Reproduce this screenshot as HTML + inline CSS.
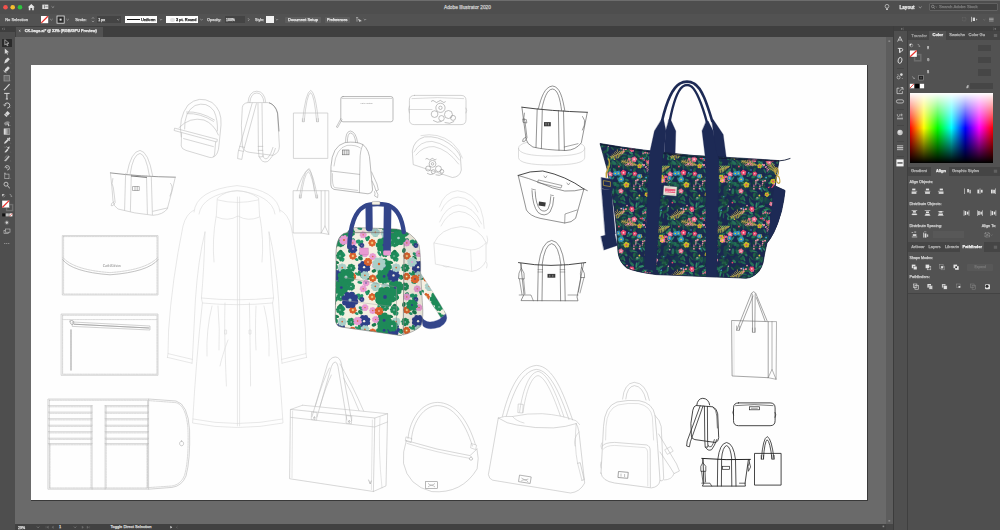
<!DOCTYPE html>
<html lang="en"><head><meta charset="utf-8"><title>Adobe Illustrator 2020 - CK-bags.ai</title>
<style>
html,body{margin:0;padding:0;background:#535353;}
body{width:1000px;height:530px;position:relative;overflow:hidden;font-family:"Liberation Sans",sans-serif;}
#app div,#app .t{position:absolute;box-sizing:border-box;}
#app{opacity:0.999;}
#app .t{white-space:nowrap;display:block;margin:0;padding:0;-webkit-text-stroke:0.25px currentColor;}
svg{position:absolute;left:0;top:0;}
</style></head><body>
<div id="app">
<div style="left:0px;top:0px;width:1000px;height:13.5px;background:#4f4f4f;"></div>
<div style="left:0px;top:0px;width:1000px;height:1px;background:#6e6e6e;"></div>
<div style="left:0px;top:13.5px;width:1000px;height:12.5px;background:#535353;"></div>
<div style="left:0px;top:26px;width:1000px;height:11px;background:#404040;"></div>
<div style="left:15px;top:37px;width:871px;height:487px;background:#6b6b6b;"></div>
<div style="left:0px;top:27px;width:15px;height:503px;background:#4f4f4f;"></div>
<div style="left:0px;top:26px;width:15px;height:5.5px;background:#3f3f3f;"></div>
<div style="left:16px;top:27px;width:87px;height:10px;background:#535353;"></div>
<div style="left:886px;top:37px;width:6.5px;height:487px;background:#5e5e5e;"></div>
<div style="left:892.5px;top:26px;width:1.5px;height:504px;background:#3d3d3d;"></div>
<div style="left:894px;top:31px;width:12.5px;height:499px;background:#505050;"></div>
<div style="left:906.5px;top:26px;width:1.5px;height:504px;background:#404040;"></div>
<div style="left:908px;top:31px;width:92px;height:499px;background:#535353;"></div>
<div style="left:15px;top:523.6px;width:871px;height:6.4px;background:#424242;"></div>
<div style="left:886px;top:523.6px;width:7px;height:6.4px;background:#474747;"></div>
<div style="left:31px;top:65px;width:836.5px;height:436px;background:#ffffff;border-right:1px solid #3a3a3a;border-bottom:1px solid #3a3a3a;"></div>
<span class="t" style="left:444px;top:4.94px;font-size:4.8px;line-height:5.57px;color:#cfcfcf;">Adobe Illustrator 2020</span>
<span class="t" style="left:899.5px;top:5.05px;font-size:4.58px;line-height:5.31px;color:#ececec;font-weight:bold;">Layout</span>
<div style="left:929px;top:2.5px;width:69px;height:8.5px;background:#434343;border:0.5px solid #626262;border-radius:1px;"></div>
<span class="t" style="left:939px;top:4.90px;font-size:4.25px;line-height:4.93px;color:#7c7c7c;">Search Adobe Stock</span>
<span class="t" style="left:5.2px;top:17.71px;font-size:4.02px;line-height:4.66px;color:#d6d6d6;">No Selection</span>
<span class="t" style="left:75.2px;top:17.92px;font-size:3.57px;line-height:4.14px;color:#d6d6d6;">Stroke:</span>
<div style="left:96.5px;top:16px;width:24px;height:7.2px;background:#454545;"></div>
<span class="t" style="left:98.2px;top:17.91px;font-size:3.6px;line-height:4.18px;color:#e0e0e0;">1 px</span>
<div style="left:124.5px;top:16px;width:32.5px;height:7.2px;background:#ffffff;"></div>
<div style="left:126.5px;top:19px;width:13px;height:1.3px;background:#111111;"></div>
<span class="t" style="left:141px;top:17.75px;font-size:4.14px;line-height:4.80px;color:#222222;">Uniform</span>
<div style="left:166px;top:16px;width:32px;height:7.2px;background:#ffffff;"></div>
<div style="left:169.5px;top:17.6px;width:5.5px;height:4px;background:#e2e2e2;border-radius:2px;"></div>
<span class="t" style="left:176px;top:17.83px;font-size:3.97px;line-height:4.61px;color:#222222;">3 pt. Round</span>
<span class="t" style="left:207px;top:17.75px;font-size:3.93px;line-height:4.56px;color:#d6d6d6;">Opacity:</span>
<div style="left:224.5px;top:16px;width:20px;height:7.2px;background:#454545;"></div>
<span class="t" style="left:226px;top:17.95px;font-size:3.52px;line-height:4.08px;color:#e0e0e0;">100%</span>
<span class="t" style="left:255px;top:17.91px;font-size:3.6px;line-height:4.18px;color:#d6d6d6;">Style:</span>
<div style="left:266px;top:16px;width:8px;height:7.2px;background:#f4f4f4;"></div>
<div style="left:285px;top:16.5px;width:35.5px;height:6.4px;background:#5f5f5f;border-radius:1px;"></div>
<span class="t" style="left:288px;top:17.81px;font-size:4.03px;line-height:4.67px;color:#e8e8e8;">Document Setup</span>
<div style="left:324.5px;top:16.5px;width:25px;height:6.4px;background:#5f5f5f;border-radius:1px;"></div>
<span class="t" style="left:327px;top:17.91px;font-size:3.8px;line-height:4.41px;color:#e8e8e8;">Preferences</span>
<span class="t" style="left:24.7px;top:29.10px;font-size:3.84px;line-height:4.45px;color:#ececec;font-weight:bold;">CK-bags.ai* @ 33% (RGB/GPU Preview)</span>
<span class="t" style="left:18px;top:525.56px;font-size:3.5px;line-height:4.06px;color:#e0e0e0;">29%</span>
<span class="t" style="left:59.3px;top:525.76px;font-size:3.06px;line-height:3.55px;color:#e0e0e0;">1</span>
<span class="t" style="left:110.6px;top:525.32px;font-size:3.99px;line-height:4.63px;color:#dcdcdc;">Toggle Direct Selection</span>
<div style="left:908px;top:31px;width:92px;height:9px;background:#464646;"></div>
<div style="left:929px;top:31px;width:17px;height:9px;background:#535353;"></div>
<span class="t" style="left:911.2px;top:33.28px;font-size:4.29px;line-height:4.98px;color:#9e9e9e;">Transfer</span>
<span class="t" style="left:932.5px;top:33.41px;font-size:4.02px;line-height:4.66px;color:#f2f2f2;font-weight:bold;">Color</span>
<span class="t" style="left:949.2px;top:33.36px;font-size:4.12px;line-height:4.78px;color:#b4b4b4;">Swatche</span>
<span class="t" style="left:968.6px;top:33.37px;font-size:4.1px;line-height:4.76px;color:#b4b4b4;">Color Gu</span>
<span class="t" style="left:927.3px;top:46.56px;font-size:2.63px;line-height:3.05px;color:#c6c6c6;">R</span>
<span class="t" style="left:927.3px;top:58.83px;font-size:2.7px;line-height:3.13px;color:#c6c6c6;">G</span>
<span class="t" style="left:927.3px;top:71.26px;font-size:2.85px;line-height:3.31px;color:#c6c6c6;">B</span>
<div style="left:977.8px;top:44.8px;width:13px;height:6.3px;background:#474747;"></div>
<div style="left:977.8px;top:56.9px;width:13px;height:6.3px;background:#474747;"></div>
<div style="left:977.8px;top:69.3px;width:13px;height:6.3px;background:#474747;"></div>
<span class="t" style="left:966.4px;top:84.51px;font-size:3.6px;line-height:4.18px;color:#c6c6c6;">#</span>
<div style="left:969.6px;top:83.4px;width:23.2px;height:5.4px;background:#474747;"></div>
<div style="left:910.3px;top:93px;width:82.7px;height:69.7px;background:linear-gradient(to bottom,#fff 0%,rgba(255,255,255,0) 50%,rgba(0,0,0,0) 50%,#000 100%),linear-gradient(to right,#f00 0%,#ff0 16.67%,#0f0 33.33%,#0ff 50%,#00f 66.67%,#f0f 83.33%,#f00 100%);"></div>
<div style="left:908px;top:167px;width:92px;height:8.5px;background:#464646;"></div>
<div style="left:931px;top:167px;width:18px;height:8.5px;background:#535353;"></div>
<span class="t" style="left:911px;top:169.14px;font-size:4.17px;line-height:4.84px;color:#b4b4b4;">Gradient</span>
<span class="t" style="left:936px;top:169.22px;font-size:4.0px;line-height:4.64px;color:#f2f2f2;font-weight:bold;">Align</span>
<span class="t" style="left:952px;top:169.14px;font-size:4.18px;line-height:4.85px;color:#b4b4b4;">Graphic Styles</span>
<span class="t" style="left:909.5px;top:180.20px;font-size:3.84px;line-height:4.45px;color:#cfcfcf;">Align Objects:</span>
<span class="t" style="left:909.5px;top:202.05px;font-size:3.94px;line-height:4.57px;color:#cfcfcf;">Distribute Objects:</span>
<span class="t" style="left:909.5px;top:223.58px;font-size:3.87px;line-height:4.49px;color:#cfcfcf;">Distribute Spacing:</span>
<span class="t" style="left:981.8px;top:223.63px;font-size:3.77px;line-height:4.37px;color:#cfcfcf;">Align To:</span>
<div style="left:933.2px;top:231.4px;width:30.4px;height:7.1px;background:#595959;"></div>
<div style="left:908px;top:242px;width:92px;height:10px;background:#464646;"></div>
<div style="left:960px;top:242px;width:24.2px;height:10px;background:#535353;"></div>
<span class="t" style="left:911.2px;top:245.26px;font-size:4.12px;line-height:4.78px;color:#b4b4b4;">Artboar</span>
<span class="t" style="left:928.5px;top:245.29px;font-size:4.06px;line-height:4.71px;color:#b4b4b4;">Layers</span>
<span class="t" style="left:945px;top:245.21px;font-size:4.23px;line-height:4.91px;color:#b4b4b4;">Librarie</span>
<span class="t" style="left:962.5px;top:245.35px;font-size:3.94px;line-height:4.57px;color:#f2f2f2;font-weight:bold;">Pathfinder</span>
<span class="t" style="left:909.5px;top:256.29px;font-size:3.63px;line-height:4.21px;color:#cfcfcf;">Shape Modes:</span>
<span class="t" style="left:909.5px;top:275.32px;font-size:3.79px;line-height:4.40px;color:#cfcfcf;">Pathfinders:</span>
<div style="left:967.2px;top:264px;width:25.5px;height:6.6px;background:#595959;border-radius:1px;"></div>
<span class="t" style="left:974.5px;top:265.81px;font-size:3.39px;line-height:3.93px;color:#767676;">Expand</span>
<div style="left:908px;top:293px;width:92px;height:0.8px;background:#444444;"></div>
<div style="left:908px;top:293.8px;width:92px;height:236.2px;background:#505050;"></div>
<div style="left:896.5px;top:67.5px;width:7.5px;height:0.6px;background:#474747;"></div>
<div style="left:896.5px;top:108.6px;width:7.5px;height:0.6px;background:#474747;"></div>
<div style="left:896.5px;top:124.6px;width:7.5px;height:0.6px;background:#474747;"></div>
<div style="left:896.5px;top:140.6px;width:7.5px;height:0.6px;background:#474747;"></div>
<div style="left:896.5px;top:155.6px;width:7.5px;height:0.6px;background:#474747;"></div>
<div style="left:2.2px;top:38.6px;width:9.4px;height:8px;background:#2b2b2b;border-radius:0.5px;"></div>
</div>
<svg id="artwork" width="1000" height="530" viewBox="0 0 1000 530">
<defs><clipPath id="toteclip"><path d="M600 143.5 Q640 150.5 694 155.5 Q750 158.5 779 160.6 Q776.6 174 775.4 186 L785 190.5 Q784 200 781.5 211 Q778 224 774 232 Q770 240 767 243 Q764.6 253 763 263 Q760 273 752.5 276.4 Q750 278 746 278.2 L656 274.6 Q636 272 626.8 268 Q619 262 618 252 Q616 215 612 195 Q608 168 600 143.5 Z"/></clipPath></defs>
<path d="M669.7 121 C672.6 106 677 91 682.6 86.6 C685.6 84.4 688.6 84.4 691.6 86.6 C698 92 703 108 707 122.5" stroke="#1d2a55" stroke-width="2.4" fill="none" stroke-linejoin="round" stroke-linecap="round" />
<path d="M669 119.5 L670.6 119.5 L675.8 131 L675 158 L664 157 L665.6 131 Z" stroke="#1d2a55" stroke-width="0.3" fill="#1d2a55" stroke-linejoin="round" stroke-linecap="round" />
<path d="M711.6 119.5 L713.2 119.5 L723.2 134.4 L726.6 160 L715 160 L713.2 131 Z" stroke="#1d2a55" stroke-width="0.3" fill="#1d2a55" stroke-linejoin="round" stroke-linecap="round" />
<path d="M600 143.5 Q640 150.5 694 155.5 Q750 158.5 779 160.6 Q776.6 174 775.4 186 L785 190.5 Q784 200 781.5 211 Q778 224 774 232 Q770 240 767 243 Q764.6 253 763 263 Q760 273 752.5 276.4 Q750 278 746 278.2 L656 274.6 Q636 272 626.8 268 Q619 262 618 252 Q616 215 612 195 Q608 168 600 143.5 Z" fill="#1d2a55"/>
<defs><pattern id="totepat" width="60" height="60" patternUnits="userSpaceOnUse" patternTransform="translate(600 140)"><rect width="60" height="60" fill="#1b2850"/><ellipse cx="-4.5" cy="-3.1" rx="3.0" ry="2.2" fill="#183f4c" transform="rotate(68 -4.5 -3.1)"/><ellipse cx="-4.5" cy="56.9" rx="3.0" ry="2.2" fill="#183f4c" transform="rotate(68 -4.5 56.9)"/><ellipse cx="55.5" cy="-3.1" rx="3.0" ry="2.2" fill="#183f4c" transform="rotate(68 55.5 -3.1)"/><ellipse cx="55.5" cy="56.9" rx="3.0" ry="2.2" fill="#183f4c" transform="rotate(68 55.5 56.9)"/><ellipse cx="21.5" cy="43.6" rx="4.1" ry="2.1" fill="#1a4447" transform="rotate(82 21.5 43.6)"/><ellipse cx="1.5" cy="5.1" rx="4.2" ry="1.8" fill="#17394c" transform="rotate(113 1.5 5.1)"/><ellipse cx="1.5" cy="65.1" rx="4.2" ry="1.8" fill="#17394c" transform="rotate(113 1.5 65.1)"/><ellipse cx="61.5" cy="5.1" rx="4.2" ry="1.8" fill="#17394c" transform="rotate(113 61.5 5.1)"/><ellipse cx="61.5" cy="65.1" rx="4.2" ry="1.8" fill="#17394c" transform="rotate(113 61.5 65.1)"/><ellipse cx="25.9" cy="46.2" rx="5.0" ry="2.5" fill="#183f4c" transform="rotate(118 25.9 46.2)"/><ellipse cx="37.3" cy="-1.8" rx="4.4" ry="2.8" fill="#1a4447" transform="rotate(174 37.3 -1.8)"/><ellipse cx="37.3" cy="58.2" rx="4.4" ry="2.8" fill="#1a4447" transform="rotate(174 37.3 58.2)"/><ellipse cx="16.9" cy="-1.5" rx="3.2" ry="2.4" fill="#17394c" transform="rotate(129 16.9 -1.5)"/><ellipse cx="16.9" cy="58.5" rx="3.2" ry="2.4" fill="#17394c" transform="rotate(129 16.9 58.5)"/><ellipse cx="35.4" cy="26.8" rx="3.4" ry="2.8" fill="#17394c" transform="rotate(96 35.4 26.8)"/><ellipse cx="40.4" cy="31.2" rx="3.3" ry="1.9" fill="#17394c" transform="rotate(7 40.4 31.2)"/><ellipse cx="16.5" cy="34.4" rx="3.8" ry="2.2" fill="#17394c" transform="rotate(52 16.5 34.4)"/><ellipse cx="18.3" cy="46.7" rx="3.5" ry="2.0" fill="#17394c" transform="rotate(112 18.3 46.7)"/><ellipse cx="7.2" cy="47.7" rx="3.6" ry="2.5" fill="#1a4447" transform="rotate(165 7.2 47.7)"/><ellipse cx="35.6" cy="-3.3" rx="4.1" ry="1.8" fill="#183f4c" transform="rotate(114 35.6 -3.3)"/><ellipse cx="35.6" cy="56.7" rx="4.1" ry="1.8" fill="#183f4c" transform="rotate(114 35.6 56.7)"/><ellipse cx="23.6" cy="9.8" rx="4.7" ry="3.0" fill="#183f4c" transform="rotate(145 23.6 9.8)"/><ellipse cx="-3.1" cy="32.3" rx="4.9" ry="2.2" fill="#1a4447" transform="rotate(175 -3.1 32.3)"/><ellipse cx="56.9" cy="32.3" rx="4.9" ry="2.2" fill="#1a4447" transform="rotate(175 56.9 32.3)"/><ellipse cx="22.6" cy="11.6" rx="3.7" ry="2.5" fill="#183f4c" transform="rotate(136 22.6 11.6)"/><ellipse cx="27.5" cy="17.7" rx="3.3" ry="2.4" fill="#183f4c" transform="rotate(31 27.5 17.7)"/><ellipse cx="32.6" cy="48.8" rx="3.3" ry="2.0" fill="#1a4447" transform="rotate(2 32.6 48.8)"/><ellipse cx="45.7" cy="39.4" rx="5.0" ry="2.9" fill="#1a4447" transform="rotate(124 45.7 39.4)"/><ellipse cx="24.8" cy="41.6" rx="4.9" ry="2.5" fill="#17394c" transform="rotate(77 24.8 41.6)"/><ellipse cx="17.9" cy="51.6" rx="4.4" ry="2.8" fill="#17394c" transform="rotate(20 17.9 51.6)"/><ellipse cx="37.9" cy="20.0" rx="4.8" ry="2.3" fill="#17394c" transform="rotate(30 37.9 20.0)"/><ellipse cx="39.6" cy="20.3" rx="4.4" ry="2.1" fill="#17394c" transform="rotate(101 39.6 20.3)"/><ellipse cx="28.2" cy="27.0" rx="3.7" ry="2.2" fill="#17394c" transform="rotate(4 28.2 27.0)"/><ellipse cx="-2.6" cy="45.0" rx="3.5" ry="2.6" fill="#1a4447" transform="rotate(31 -2.6 45.0)"/><ellipse cx="57.4" cy="45.0" rx="3.5" ry="2.6" fill="#1a4447" transform="rotate(31 57.4 45.0)"/><ellipse cx="27.0" cy="25.4" rx="4.0" ry="2.1" fill="#183f4c" transform="rotate(108 27.0 25.4)"/><ellipse cx="-0.5" cy="43.2" rx="4.3" ry="2.2" fill="#183f4c" transform="rotate(162 -0.5 43.2)"/><ellipse cx="59.5" cy="43.2" rx="4.3" ry="2.2" fill="#183f4c" transform="rotate(162 59.5 43.2)"/><ellipse cx="5.2" cy="52.6" rx="3.9" ry="1.8" fill="#1a4447" transform="rotate(82 5.2 52.6)"/><ellipse cx="65.2" cy="52.6" rx="3.9" ry="1.8" fill="#1a4447" transform="rotate(82 65.2 52.6)"/><ellipse cx="24.7" cy="40.9" rx="3.9" ry="2.2" fill="#1a4447" transform="rotate(173 24.7 40.9)"/><ellipse cx="20.5" cy="23.3" rx="5.2" ry="2.6" fill="#1a4447" transform="rotate(136 20.5 23.3)"/><ellipse cx="-7.0" cy="32.3" rx="3.2" ry="2.1" fill="#17394c" transform="rotate(47 -7.0 32.3)"/><ellipse cx="53.0" cy="32.3" rx="3.2" ry="2.1" fill="#17394c" transform="rotate(47 53.0 32.3)"/><ellipse cx="51.1" cy="30.1" rx="4.6" ry="3.0" fill="#183f4c" transform="rotate(50 51.1 30.1)"/><ellipse cx="46.2" cy="0.5" rx="3.6" ry="2.8" fill="#183f4c" transform="rotate(45 46.2 0.5)"/><ellipse cx="46.2" cy="60.5" rx="3.6" ry="2.8" fill="#183f4c" transform="rotate(45 46.2 60.5)"/><ellipse cx="-1.0" cy="38.1" rx="4.0" ry="1.9" fill="#183f4c" transform="rotate(36 -1.0 38.1)"/><ellipse cx="59.0" cy="38.1" rx="4.0" ry="1.9" fill="#183f4c" transform="rotate(36 59.0 38.1)"/><ellipse cx="33.9" cy="37.3" rx="3.5" ry="2.4" fill="#183f4c" transform="rotate(110 33.9 37.3)"/><ellipse cx="21.7" cy="-0.8" rx="1.6" ry="0.7" fill="#216044" transform="rotate(134 21.7 -0.8)"/><ellipse cx="21.7" cy="59.2" rx="1.6" ry="0.7" fill="#216044" transform="rotate(134 21.7 59.2)"/><ellipse cx="-0.9" cy="8.2" rx="3.2" ry="0.8" fill="#216044" transform="rotate(161 -0.9 8.2)"/><ellipse cx="59.1" cy="8.2" rx="3.2" ry="0.8" fill="#216044" transform="rotate(161 59.1 8.2)"/><ellipse cx="17.7" cy="47.7" rx="3.0" ry="1.1" fill="#18493c" transform="rotate(106 17.7 47.7)"/><ellipse cx="19.6" cy="8.0" rx="1.8" ry="0.8" fill="#1c5140" transform="rotate(174 19.6 8.0)"/><ellipse cx="-0.5" cy="45.5" rx="2.5" ry="1.3" fill="#143f3c" transform="rotate(78 -0.5 45.5)"/><ellipse cx="59.5" cy="45.5" rx="2.5" ry="1.3" fill="#143f3c" transform="rotate(78 59.5 45.5)"/><ellipse cx="21.7" cy="39.1" rx="2.3" ry="1.1" fill="#2a7a58" transform="rotate(172 21.7 39.1)"/><ellipse cx="38.3" cy="21.4" rx="3.0" ry="0.6" fill="#2a7a58" transform="rotate(71 38.3 21.4)"/><ellipse cx="43.4" cy="45.5" rx="1.9" ry="0.9" fill="#216044" transform="rotate(11 43.4 45.5)"/><ellipse cx="18.9" cy="25.6" rx="2.6" ry="0.9" fill="#216044" transform="rotate(44 18.9 25.6)"/><ellipse cx="18.9" cy="40.2" rx="3.0" ry="0.9" fill="#257058" transform="rotate(66 18.9 40.2)"/><ellipse cx="29.9" cy="1.0" rx="3.0" ry="0.7" fill="#1e6350" transform="rotate(79 29.9 1.0)"/><ellipse cx="29.9" cy="61.0" rx="3.0" ry="0.7" fill="#1e6350" transform="rotate(79 29.9 61.0)"/><ellipse cx="11.4" cy="46.4" rx="2.3" ry="0.6" fill="#1c5140" transform="rotate(115 11.4 46.4)"/><ellipse cx="15.3" cy="44.2" rx="2.2" ry="1.4" fill="#1e6350" transform="rotate(133 15.3 44.2)"/><ellipse cx="42.5" cy="40.1" rx="2.8" ry="0.7" fill="#2a7a58" transform="rotate(177 42.5 40.1)"/><ellipse cx="45.1" cy="48.7" rx="2.5" ry="0.7" fill="#257058" transform="rotate(12 45.1 48.7)"/><ellipse cx="28.4" cy="8.7" rx="1.7" ry="0.6" fill="#2a7a58" transform="rotate(94 28.4 8.7)"/><ellipse cx="12.5" cy="38.7" rx="2.9" ry="0.8" fill="#2f8a66" transform="rotate(127 12.5 38.7)"/><ellipse cx="25.8" cy="54.7" rx="2.1" ry="1.2" fill="#2a7a58" transform="rotate(40 25.8 54.7)"/><ellipse cx="40.1" cy="47.3" rx="1.6" ry="1.2" fill="#216044" transform="rotate(25 40.1 47.3)"/><ellipse cx="55.6" cy="41.8" rx="3.2" ry="0.7" fill="#2a7a58" transform="rotate(149 55.6 41.8)"/><ellipse cx="4.8" cy="4.9" rx="2.8" ry="1.4" fill="#18493c" transform="rotate(114 4.8 4.9)"/><ellipse cx="30.7" cy="16.3" rx="3.3" ry="1.1" fill="#1e6350" transform="rotate(158 30.7 16.3)"/><ellipse cx="11.8" cy="44.1" rx="2.7" ry="0.7" fill="#1c5140" transform="rotate(150 11.8 44.1)"/><ellipse cx="29.3" cy="44.2" rx="2.0" ry="1.3" fill="#216044" transform="rotate(108 29.3 44.2)"/><ellipse cx="23.2" cy="2.7" rx="2.9" ry="1.1" fill="#1e6350" transform="rotate(25 23.2 2.7)"/><ellipse cx="23.2" cy="62.7" rx="2.9" ry="1.1" fill="#1e6350" transform="rotate(25 23.2 62.7)"/><ellipse cx="47.8" cy="21.2" rx="1.5" ry="1.0" fill="#1e6350" transform="rotate(82 47.8 21.2)"/><ellipse cx="17.2" cy="43.1" rx="3.0" ry="0.8" fill="#18493c" transform="rotate(145 17.2 43.1)"/><ellipse cx="47.7" cy="8.6" rx="3.0" ry="1.1" fill="#216044" transform="rotate(20 47.7 8.6)"/><ellipse cx="50.3" cy="45.1" rx="3.0" ry="1.0" fill="#143f3c" transform="rotate(97 50.3 45.1)"/><ellipse cx="35.6" cy="55.9" rx="3.0" ry="0.8" fill="#143f3c" transform="rotate(108 35.6 55.9)"/><ellipse cx="49.4" cy="43.1" rx="1.7" ry="0.9" fill="#216044" transform="rotate(12 49.4 43.1)"/><ellipse cx="40.7" cy="22.7" rx="2.9" ry="0.7" fill="#2f8a66" transform="rotate(45 40.7 22.7)"/><ellipse cx="22.2" cy="53.1" rx="1.9" ry="1.0" fill="#257058" transform="rotate(143 22.2 53.1)"/><ellipse cx="20.1" cy="33.8" rx="2.9" ry="1.2" fill="#1c5140" transform="rotate(27 20.1 33.8)"/><ellipse cx="33.7" cy="38.2" rx="2.3" ry="0.6" fill="#18493c" transform="rotate(167 33.7 38.2)"/><ellipse cx="15.9" cy="44.3" rx="2.8" ry="1.1" fill="#257058" transform="rotate(54 15.9 44.3)"/><ellipse cx="48.1" cy="54.6" rx="2.2" ry="1.1" fill="#1c5140" transform="rotate(68 48.1 54.6)"/><ellipse cx="44.0" cy="10.5" rx="1.5" ry="1.3" fill="#1c5140" transform="rotate(140 44.0 10.5)"/><ellipse cx="41.6" cy="6.4" rx="3.2" ry="1.1" fill="#2f8a66" transform="rotate(167 41.6 6.4)"/><ellipse cx="8.6" cy="17.9" rx="2.4" ry="1.4" fill="#2a7a58" transform="rotate(114 8.6 17.9)"/><ellipse cx="37.3" cy="37.3" rx="2.7" ry="0.7" fill="#1e6350" transform="rotate(48 37.3 37.3)"/><ellipse cx="43.5" cy="43.6" rx="3.1" ry="1.2" fill="#18493c" transform="rotate(99 43.5 43.6)"/><ellipse cx="52.8" cy="28.8" rx="2.9" ry="1.1" fill="#18493c" transform="rotate(152 52.8 28.8)"/><ellipse cx="16.5" cy="7.0" rx="3.1" ry="0.9" fill="#143f3c" transform="rotate(161 16.5 7.0)"/><ellipse cx="49.9" cy="36.1" rx="2.0" ry="1.3" fill="#2a7a58" transform="rotate(175 49.9 36.1)"/><ellipse cx="41.2" cy="-1.1" rx="2.4" ry="0.9" fill="#216044" transform="rotate(139 41.2 -1.1)"/><ellipse cx="41.2" cy="58.9" rx="2.4" ry="0.9" fill="#216044" transform="rotate(139 41.2 58.9)"/><ellipse cx="24.5" cy="22.2" rx="2.6" ry="1.3" fill="#143f3c" transform="rotate(9 24.5 22.2)"/><ellipse cx="22.5" cy="18.9" rx="1.6" ry="0.7" fill="#1c5140" transform="rotate(33 22.5 18.9)"/><ellipse cx="52.1" cy="17.0" rx="2.1" ry="0.7" fill="#216044" transform="rotate(121 52.1 17.0)"/><ellipse cx="20.0" cy="34.3" rx="3.2" ry="1.4" fill="#257058" transform="rotate(37 20.0 34.3)"/><ellipse cx="33.9" cy="23.8" rx="3.3" ry="0.6" fill="#2a7a58" transform="rotate(118 33.9 23.8)"/><ellipse cx="9.8" cy="38.4" rx="3.0" ry="1.0" fill="#18493c" transform="rotate(115 9.8 38.4)"/><ellipse cx="2.6" cy="28.6" rx="3.1" ry="1.3" fill="#2f8a66" transform="rotate(79 2.6 28.6)"/><ellipse cx="62.6" cy="28.6" rx="3.1" ry="1.3" fill="#2f8a66" transform="rotate(79 62.6 28.6)"/><ellipse cx="13.8" cy="53.1" rx="2.8" ry="0.8" fill="#143f3c" transform="rotate(144 13.8 53.1)"/><ellipse cx="11.6" cy="18.5" rx="2.6" ry="1.2" fill="#257058" transform="rotate(145 11.6 18.5)"/><ellipse cx="15.4" cy="31.3" rx="3.0" ry="1.4" fill="#216044" transform="rotate(76 15.4 31.3)"/><ellipse cx="12.0" cy="42.6" rx="3.3" ry="1.3" fill="#1e6350" transform="rotate(22 12.0 42.6)"/><ellipse cx="44.2" cy="16.3" rx="3.0" ry="0.8" fill="#2a7a58" transform="rotate(43 44.2 16.3)"/><ellipse cx="38.3" cy="17.6" rx="2.2" ry="1.4" fill="#143f3c" transform="rotate(74 38.3 17.6)"/><ellipse cx="11.9" cy="-1.9" rx="1.6" ry="0.6" fill="#143f3c" transform="rotate(33 11.9 -1.9)"/><ellipse cx="11.9" cy="58.1" rx="1.6" ry="0.6" fill="#143f3c" transform="rotate(33 11.9 58.1)"/><ellipse cx="2.3" cy="34.4" rx="2.8" ry="1.1" fill="#1e6350" transform="rotate(158 2.3 34.4)"/><ellipse cx="62.3" cy="34.4" rx="2.8" ry="1.1" fill="#1e6350" transform="rotate(158 62.3 34.4)"/><ellipse cx="45.9" cy="53.2" rx="2.0" ry="1.2" fill="#143f3c" transform="rotate(24 45.9 53.2)"/><ellipse cx="5.6" cy="11.6" rx="3.3" ry="1.4" fill="#1c5140" transform="rotate(153 5.6 11.6)"/><ellipse cx="41.7" cy="26.4" rx="2.4" ry="1.0" fill="#2a7a58" transform="rotate(146 41.7 26.4)"/><ellipse cx="2.8" cy="2.7" rx="1.5" ry="1.0" fill="#216044" transform="rotate(112 2.8 2.7)"/><ellipse cx="2.8" cy="62.7" rx="1.5" ry="1.0" fill="#216044" transform="rotate(112 2.8 62.7)"/><ellipse cx="62.8" cy="2.7" rx="1.5" ry="1.0" fill="#216044" transform="rotate(112 62.8 2.7)"/><ellipse cx="62.8" cy="62.7" rx="1.5" ry="1.0" fill="#216044" transform="rotate(112 62.8 62.7)"/><ellipse cx="51.0" cy="0.0" rx="1.9" ry="1.1" fill="#1e6350" transform="rotate(119 51.0 0.0)"/><ellipse cx="51.0" cy="60.0" rx="1.9" ry="1.1" fill="#1e6350" transform="rotate(119 51.0 60.0)"/><ellipse cx="19.9" cy="55.8" rx="2.4" ry="0.7" fill="#216044" transform="rotate(143 19.9 55.8)"/><ellipse cx="50.6" cy="42.1" rx="2.6" ry="1.1" fill="#2f8a66" transform="rotate(135 50.6 42.1)"/><ellipse cx="17.6" cy="45.3" rx="1.9" ry="1.3" fill="#1e6350" transform="rotate(10 17.6 45.3)"/><ellipse cx="52.2" cy="23.8" rx="2.7" ry="1.3" fill="#1e6350" transform="rotate(40 52.2 23.8)"/><ellipse cx="5.6" cy="30.7" rx="1.9" ry="1.2" fill="#143f3c" transform="rotate(98 5.6 30.7)"/><ellipse cx="26.9" cy="39.9" rx="2.0" ry="0.9" fill="#257058" transform="rotate(17 26.9 39.9)"/><ellipse cx="48.3" cy="54.1" rx="2.1" ry="1.4" fill="#18493c" transform="rotate(96 48.3 54.1)"/><ellipse cx="23.0" cy="42.4" rx="3.2" ry="0.8" fill="#2a7a58" transform="rotate(28 23.0 42.4)"/><ellipse cx="8.4" cy="32.5" rx="2.8" ry="1.4" fill="#2f8a66" transform="rotate(175 8.4 32.5)"/><ellipse cx="9.5" cy="43.7" rx="1.6" ry="1.3" fill="#18493c" transform="rotate(77 9.5 43.7)"/><ellipse cx="34.2" cy="54.7" rx="2.3" ry="1.3" fill="#216044" transform="rotate(105 34.2 54.7)"/><ellipse cx="33.4" cy="43.2" rx="1.9" ry="1.3" fill="#143f3c" transform="rotate(98 33.4 43.2)"/><ellipse cx="55.6" cy="45.8" rx="1.6" ry="1.0" fill="#257058" transform="rotate(116 55.6 45.8)"/><ellipse cx="-3.0" cy="53.8" rx="1.7" ry="0.8" fill="#2f8a66" transform="rotate(58 -3.0 53.8)"/><ellipse cx="57.0" cy="53.8" rx="1.7" ry="0.8" fill="#2f8a66" transform="rotate(58 57.0 53.8)"/><ellipse cx="9.6" cy="17.9" rx="1.5" ry="1.1" fill="#143f3c" transform="rotate(82 9.6 17.9)"/><ellipse cx="53.0" cy="37.3" rx="1.7" ry="1.1" fill="#143f3c" transform="rotate(173 53.0 37.3)"/><ellipse cx="3.0" cy="-2.2" rx="1.9" ry="1.0" fill="#1c5140" transform="rotate(35 3.0 -2.2)"/><ellipse cx="3.0" cy="57.8" rx="1.9" ry="1.0" fill="#1c5140" transform="rotate(35 3.0 57.8)"/><ellipse cx="63.0" cy="-2.2" rx="1.9" ry="1.0" fill="#1c5140" transform="rotate(35 63.0 -2.2)"/><ellipse cx="63.0" cy="57.8" rx="1.9" ry="1.0" fill="#1c5140" transform="rotate(35 63.0 57.8)"/><ellipse cx="31.6" cy="20.6" rx="2.6" ry="0.7" fill="#2f8a66" transform="rotate(66 31.6 20.6)"/><ellipse cx="7.7" cy="14.8" rx="1.8" ry="0.8" fill="#257058" transform="rotate(49 7.7 14.8)"/><ellipse cx="18.9" cy="29.3" rx="1.8" ry="1.2" fill="#143f3c" transform="rotate(78 18.9 29.3)"/><ellipse cx="34.3" cy="30.2" rx="2.7" ry="1.2" fill="#216044" transform="rotate(112 34.3 30.2)"/><ellipse cx="23.7" cy="45.0" rx="3.3" ry="0.7" fill="#2a7a58" transform="rotate(2 23.7 45.0)"/><ellipse cx="7.4" cy="41.4" rx="2.6" ry="1.2" fill="#1c5140" transform="rotate(0 7.4 41.4)"/><ellipse cx="51.6" cy="11.0" rx="1.7" ry="1.0" fill="#1e6350" transform="rotate(62 51.6 11.0)"/><ellipse cx="18.7" cy="40.1" rx="2.9" ry="0.8" fill="#2f8a66" transform="rotate(63 18.7 40.1)"/><ellipse cx="12.6" cy="23.6" rx="3.2" ry="0.9" fill="#1e6350" transform="rotate(24 12.6 23.6)"/><ellipse cx="42.3" cy="24.6" rx="3.2" ry="0.9" fill="#2f8a66" transform="rotate(74 42.3 24.6)"/><ellipse cx="31.1" cy="-2.1" rx="2.8" ry="0.6" fill="#216044" transform="rotate(49 31.1 -2.1)"/><ellipse cx="31.1" cy="57.9" rx="2.8" ry="0.6" fill="#216044" transform="rotate(49 31.1 57.9)"/><ellipse cx="14.2" cy="1.3" rx="2.2" ry="1.2" fill="#2a7a58" transform="rotate(42 14.2 1.3)"/><ellipse cx="14.2" cy="61.3" rx="2.2" ry="1.2" fill="#2a7a58" transform="rotate(42 14.2 61.3)"/><ellipse cx="16.8" cy="6.9" rx="3.0" ry="0.9" fill="#143f3c" transform="rotate(84 16.8 6.9)"/><ellipse cx="0.2" cy="11.4" rx="2.2" ry="1.4" fill="#257058" transform="rotate(14 0.2 11.4)"/><ellipse cx="60.2" cy="11.4" rx="2.2" ry="1.4" fill="#257058" transform="rotate(14 60.2 11.4)"/><ellipse cx="24.8" cy="53.1" rx="2.1" ry="1.3" fill="#1c5140" transform="rotate(136 24.8 53.1)"/><ellipse cx="43.4" cy="16.0" rx="3.0" ry="1.0" fill="#18493c" transform="rotate(167 43.4 16.0)"/><ellipse cx="43.2" cy="12.6" rx="1.9" ry="1.1" fill="#2f8a66" transform="rotate(59 43.2 12.6)"/><ellipse cx="-0.1" cy="20.5" rx="3.0" ry="0.9" fill="#143f3c" transform="rotate(106 -0.1 20.5)"/><ellipse cx="59.9" cy="20.5" rx="3.0" ry="0.9" fill="#143f3c" transform="rotate(106 59.9 20.5)"/><ellipse cx="14.0" cy="22.5" rx="3.2" ry="1.2" fill="#257058" transform="rotate(40 14.0 22.5)"/><ellipse cx="0.9" cy="7.2" rx="2.7" ry="1.0" fill="#257058" transform="rotate(151 0.9 7.2)"/><ellipse cx="60.9" cy="7.2" rx="2.7" ry="1.0" fill="#257058" transform="rotate(151 60.9 7.2)"/><ellipse cx="7.8" cy="49.6" rx="2.0" ry="1.1" fill="#1e6350" transform="rotate(149 7.8 49.6)"/><ellipse cx="20.4" cy="35.1" rx="2.5" ry="0.7" fill="#18493c" transform="rotate(92 20.4 35.1)"/><ellipse cx="12.4" cy="8.5" rx="2.3" ry="0.8" fill="#216044" transform="rotate(47 12.4 8.5)"/><ellipse cx="29.5" cy="45.8" rx="1.7" ry="1.3" fill="#18493c" transform="rotate(47 29.5 45.8)"/><ellipse cx="29.4" cy="34.9" rx="3.3" ry="1.1" fill="#2f8a66" transform="rotate(149 29.4 34.9)"/><ellipse cx="50.5" cy="2.3" rx="2.9" ry="1.0" fill="#143f3c" transform="rotate(81 50.5 2.3)"/><ellipse cx="50.5" cy="62.3" rx="2.9" ry="1.0" fill="#143f3c" transform="rotate(81 50.5 62.3)"/><ellipse cx="41.6" cy="0.6" rx="2.2" ry="1.3" fill="#1e6350" transform="rotate(96 41.6 0.6)"/><ellipse cx="41.6" cy="60.6" rx="2.2" ry="1.3" fill="#1e6350" transform="rotate(96 41.6 60.6)"/><ellipse cx="27.6" cy="11.1" rx="2.8" ry="1.0" fill="#216044" transform="rotate(1 27.6 11.1)"/><ellipse cx="19.1" cy="52.0" rx="2.3" ry="0.9" fill="#257058" transform="rotate(3 19.1 52.0)"/><ellipse cx="27.8" cy="17.2" rx="3.1" ry="1.2" fill="#143f3c" transform="rotate(13 27.8 17.2)"/><ellipse cx="43.9" cy="3.8" rx="1.9" ry="1.1" fill="#143f3c" transform="rotate(105 43.9 3.8)"/><ellipse cx="43.9" cy="63.8" rx="1.9" ry="1.1" fill="#143f3c" transform="rotate(105 43.9 63.8)"/><ellipse cx="14.9" cy="32.3" rx="2.2" ry="1.2" fill="#2a7a58" transform="rotate(83 14.9 32.3)"/><ellipse cx="3.3" cy="-3.7" rx="2.9" ry="0.9" fill="#1c5140" transform="rotate(179 3.3 -3.7)"/><ellipse cx="3.3" cy="56.3" rx="2.9" ry="0.9" fill="#1c5140" transform="rotate(179 3.3 56.3)"/><ellipse cx="63.3" cy="-3.7" rx="2.9" ry="0.9" fill="#1c5140" transform="rotate(179 63.3 -3.7)"/><ellipse cx="63.3" cy="56.3" rx="2.9" ry="0.9" fill="#1c5140" transform="rotate(179 63.3 56.3)"/><ellipse cx="19.7" cy="51.1" rx="2.1" ry="1.3" fill="#2f8a66" transform="rotate(5 19.7 51.1)"/><ellipse cx="48.7" cy="53.0" rx="2.8" ry="1.1" fill="#2f8a66" transform="rotate(45 48.7 53.0)"/><ellipse cx="45.5" cy="15.2" rx="2.9" ry="0.9" fill="#1c5140" transform="rotate(157 45.5 15.2)"/><ellipse cx="14.5" cy="30.4" rx="2.7" ry="1.2" fill="#2a7a58" transform="rotate(60 14.5 30.4)"/><ellipse cx="19.3" cy="24.7" rx="2.0" ry="0.8" fill="#143f3c" transform="rotate(148 19.3 24.7)"/><ellipse cx="49.2" cy="53.0" rx="2.4" ry="0.7" fill="#143f3c" transform="rotate(155 49.2 53.0)"/><ellipse cx="35.9" cy="47.1" rx="1.8" ry="1.3" fill="#1c5140" transform="rotate(3 35.9 47.1)"/><ellipse cx="55.6" cy="49.1" rx="3.1" ry="0.9" fill="#1e6350" transform="rotate(113 55.6 49.1)"/><ellipse cx="28.2" cy="35.1" rx="2.4" ry="0.9" fill="#1e6350" transform="rotate(63 28.2 35.1)"/><ellipse cx="23.8" cy="-1.5" rx="3.1" ry="0.9" fill="#2a7a58" transform="rotate(67 23.8 -1.5)"/><ellipse cx="23.8" cy="58.5" rx="3.1" ry="0.9" fill="#2a7a58" transform="rotate(67 23.8 58.5)"/><ellipse cx="-0.9" cy="43.3" rx="3.1" ry="1.2" fill="#216044" transform="rotate(81 -0.9 43.3)"/><ellipse cx="59.1" cy="43.3" rx="3.1" ry="1.2" fill="#216044" transform="rotate(81 59.1 43.3)"/><ellipse cx="43.9" cy="19.2" rx="2.6" ry="1.0" fill="#2a7a58" transform="rotate(125 43.9 19.2)"/><ellipse cx="45.1" cy="10.7" rx="2.4" ry="0.7" fill="#2a7a58" transform="rotate(57 45.1 10.7)"/><ellipse cx="-0.6" cy="50.7" rx="2.2" ry="1.2" fill="#1e6350" transform="rotate(96 -0.6 50.7)"/><ellipse cx="59.4" cy="50.7" rx="2.2" ry="1.2" fill="#1e6350" transform="rotate(96 59.4 50.7)"/><ellipse cx="21.5" cy="-1.4" rx="1.6" ry="1.3" fill="#216044" transform="rotate(17 21.5 -1.4)"/><ellipse cx="21.5" cy="58.6" rx="1.6" ry="1.3" fill="#216044" transform="rotate(17 21.5 58.6)"/><ellipse cx="16.8" cy="27.2" rx="1.8" ry="1.0" fill="#143f3c" transform="rotate(0 16.8 27.2)"/><ellipse cx="24.0" cy="10.7" rx="1.8" ry="1.3" fill="#18493c" transform="rotate(162 24.0 10.7)"/><ellipse cx="6.6" cy="0.9" rx="2.6" ry="1.0" fill="#18493c" transform="rotate(108 6.6 0.9)"/><ellipse cx="6.6" cy="60.9" rx="2.6" ry="1.0" fill="#18493c" transform="rotate(108 6.6 60.9)"/><ellipse cx="46.7" cy="15.9" rx="1.6" ry="0.8" fill="#2a7a58" transform="rotate(78 46.7 15.9)"/><ellipse cx="40.5" cy="-1.9" rx="3.0" ry="0.7" fill="#1c5140" transform="rotate(50 40.5 -1.9)"/><ellipse cx="40.5" cy="58.1" rx="3.0" ry="0.7" fill="#1c5140" transform="rotate(50 40.5 58.1)"/><ellipse cx="46.1" cy="9.8" rx="2.5" ry="0.9" fill="#2f8a66" transform="rotate(164 46.1 9.8)"/><ellipse cx="17.6" cy="21.7" rx="2.8" ry="1.1" fill="#216044" transform="rotate(47 17.6 21.7)"/><ellipse cx="28.5" cy="28.7" rx="3.0" ry="1.3" fill="#1c5140" transform="rotate(61 28.5 28.7)"/><ellipse cx="44.1" cy="48.6" rx="2.6" ry="1.2" fill="#2f8a66" transform="rotate(58 44.1 48.6)"/><ellipse cx="19.9" cy="15.4" rx="1.7" ry="0.8" fill="#143f3c" transform="rotate(140 19.9 15.4)"/><ellipse cx="20.6" cy="26.1" rx="1.9" ry="0.7" fill="#143f3c" transform="rotate(112 20.6 26.1)"/><ellipse cx="48.7" cy="32.1" rx="2.1" ry="0.7" fill="#1e6350" transform="rotate(132 48.7 32.1)"/><ellipse cx="41.4" cy="18.8" rx="2.8" ry="0.7" fill="#1c5140" transform="rotate(70 41.4 18.8)"/><ellipse cx="23.1" cy="32.7" rx="2.6" ry="0.6" fill="#216044" transform="rotate(98 23.1 32.7)"/><ellipse cx="39.7" cy="25.7" rx="2.4" ry="1.0" fill="#216044" transform="rotate(11 39.7 25.7)"/><ellipse cx="38.5" cy="15.9" rx="2.8" ry="0.9" fill="#257058" transform="rotate(44 38.5 15.9)"/><ellipse cx="54.3" cy="18.3" rx="2.6" ry="1.2" fill="#1c5140" transform="rotate(21 54.3 18.3)"/><ellipse cx="0.3" cy="23.7" rx="2.6" ry="1.3" fill="#216044" transform="rotate(129 0.3 23.7)"/><ellipse cx="60.3" cy="23.7" rx="2.6" ry="1.3" fill="#216044" transform="rotate(129 60.3 23.7)"/><ellipse cx="36.4" cy="41.1" rx="3.1" ry="1.2" fill="#2f8a66" transform="rotate(110 36.4 41.1)"/><ellipse cx="19.5" cy="1.9" rx="1.6" ry="1.3" fill="#1c5140" transform="rotate(23 19.5 1.9)"/><ellipse cx="19.5" cy="61.9" rx="1.6" ry="1.3" fill="#1c5140" transform="rotate(23 19.5 61.9)"/><ellipse cx="17.8" cy="32.8" rx="2.6" ry="1.4" fill="#257058" transform="rotate(27 17.8 32.8)"/><ellipse cx="46.6" cy="13.2" rx="2.8" ry="1.2" fill="#257058" transform="rotate(19 46.6 13.2)"/><ellipse cx="2.0" cy="12.0" rx="1.6" ry="0.7" fill="#18493c" transform="rotate(60 2.0 12.0)"/><ellipse cx="62.0" cy="12.0" rx="1.6" ry="0.7" fill="#18493c" transform="rotate(60 62.0 12.0)"/><ellipse cx="9.1" cy="42.8" rx="2.9" ry="1.3" fill="#216044" transform="rotate(116 9.1 42.8)"/><ellipse cx="38.7" cy="43.9" rx="2.0" ry="0.6" fill="#2a7a58" transform="rotate(31 38.7 43.9)"/><ellipse cx="44.8" cy="31.1" rx="2.5" ry="0.9" fill="#257058" transform="rotate(62 44.8 31.1)"/><ellipse cx="12.8" cy="51.4" rx="3.2" ry="1.3" fill="#257058" transform="rotate(93 12.8 51.4)"/><ellipse cx="29.4" cy="17.3" rx="3.0" ry="1.1" fill="#257058" transform="rotate(60 29.4 17.3)"/><ellipse cx="8.9" cy="30.9" rx="3.0" ry="1.3" fill="#2a7a58" transform="rotate(128 8.9 30.9)"/><ellipse cx="23.5" cy="17.5" rx="2.3" ry="0.9" fill="#1e6350" transform="rotate(171 23.5 17.5)"/><ellipse cx="1.6" cy="0.2" rx="3.0" ry="1.2" fill="#1c5140" transform="rotate(5 1.6 0.2)"/><ellipse cx="1.6" cy="60.2" rx="3.0" ry="1.2" fill="#1c5140" transform="rotate(5 1.6 60.2)"/><ellipse cx="61.6" cy="0.2" rx="3.0" ry="1.2" fill="#1c5140" transform="rotate(5 61.6 0.2)"/><ellipse cx="61.6" cy="60.2" rx="3.0" ry="1.2" fill="#1c5140" transform="rotate(5 61.6 60.2)"/><ellipse cx="36.5" cy="5.2" rx="3.0" ry="1.0" fill="#2f8a66" transform="rotate(98 36.5 5.2)"/><ellipse cx="41.8" cy="15.7" rx="1.5" ry="1.0" fill="#18493c" transform="rotate(159 41.8 15.7)"/><ellipse cx="-0.4" cy="12.2" rx="1.7" ry="0.8" fill="#143f3c" transform="rotate(174 -0.4 12.2)"/><ellipse cx="59.6" cy="12.2" rx="1.7" ry="0.8" fill="#143f3c" transform="rotate(174 59.6 12.2)"/><ellipse cx="49.0" cy="17.6" rx="1.5" ry="1.1" fill="#257058" transform="rotate(86 49.0 17.6)"/><ellipse cx="3.5" cy="15.9" rx="2.5" ry="0.7" fill="#1e6350" transform="rotate(94 3.5 15.9)"/><ellipse cx="63.5" cy="15.9" rx="2.5" ry="0.7" fill="#1e6350" transform="rotate(94 63.5 15.9)"/><ellipse cx="6.7" cy="2.4" rx="3.1" ry="1.4" fill="#216044" transform="rotate(109 6.7 2.4)"/><ellipse cx="6.7" cy="62.4" rx="3.1" ry="1.4" fill="#216044" transform="rotate(109 6.7 62.4)"/><ellipse cx="46.7" cy="49.9" rx="2.4" ry="1.1" fill="#1e6350" transform="rotate(63 46.7 49.9)"/><ellipse cx="-3.9" cy="16.3" rx="2.5" ry="1.2" fill="#143f3c" transform="rotate(89 -3.9 16.3)"/><ellipse cx="56.1" cy="16.3" rx="2.5" ry="1.2" fill="#143f3c" transform="rotate(89 56.1 16.3)"/><ellipse cx="30.9" cy="51.2" rx="1.7" ry="0.8" fill="#216044" transform="rotate(39 30.9 51.2)"/><ellipse cx="7.8" cy="8.7" rx="2.8" ry="1.0" fill="#257058" transform="rotate(97 7.8 8.7)"/><ellipse cx="41.2" cy="49.5" rx="2.7" ry="0.9" fill="#257058" transform="rotate(69 41.2 49.5)"/><ellipse cx="-2.4" cy="52.1" rx="1.7" ry="0.9" fill="#143f3c" transform="rotate(76 -2.4 52.1)"/><ellipse cx="57.6" cy="52.1" rx="1.7" ry="0.9" fill="#143f3c" transform="rotate(76 57.6 52.1)"/><ellipse cx="37.7" cy="-1.6" rx="2.2" ry="1.1" fill="#2f8a66" transform="rotate(166 37.7 -1.6)"/><ellipse cx="37.7" cy="58.4" rx="2.2" ry="1.1" fill="#2f8a66" transform="rotate(166 37.7 58.4)"/><ellipse cx="-3.2" cy="30.1" rx="2.5" ry="1.2" fill="#18493c" transform="rotate(136 -3.2 30.1)"/><ellipse cx="56.8" cy="30.1" rx="2.5" ry="1.2" fill="#18493c" transform="rotate(136 56.8 30.1)"/><ellipse cx="23.4" cy="26.8" rx="2.6" ry="0.9" fill="#1e6350" transform="rotate(88 23.4 26.8)"/><ellipse cx="30.6" cy="22.9" rx="2.0" ry="1.0" fill="#2f8a66" transform="rotate(79 30.6 22.9)"/><ellipse cx="38.1" cy="8.9" rx="2.2" ry="1.3" fill="#216044" transform="rotate(124 38.1 8.9)"/><ellipse cx="55.8" cy="39.1" rx="1.6" ry="0.6" fill="#216044" transform="rotate(173 55.8 39.1)"/><ellipse cx="20.5" cy="39.2" rx="3.3" ry="1.0" fill="#216044" transform="rotate(59 20.5 39.2)"/><ellipse cx="35.4" cy="41.8" rx="2.3" ry="0.7" fill="#1c5140" transform="rotate(3 35.4 41.8)"/><ellipse cx="13.3" cy="17.8" rx="2.3" ry="0.9" fill="#2a7a58" transform="rotate(86 13.3 17.8)"/><ellipse cx="31.0" cy="13.0" rx="2.2" ry="1.0" fill="#2f8a66" transform="rotate(28 31.0 13.0)"/><ellipse cx="6.4" cy="3.5" rx="1.6" ry="0.7" fill="#2a7a58" transform="rotate(82 6.4 3.5)"/><ellipse cx="6.4" cy="63.5" rx="1.6" ry="0.7" fill="#2a7a58" transform="rotate(82 6.4 63.5)"/><ellipse cx="45.6" cy="-0.7" rx="2.3" ry="1.0" fill="#1c5140" transform="rotate(98 45.6 -0.7)"/><ellipse cx="45.6" cy="59.3" rx="2.3" ry="1.0" fill="#1c5140" transform="rotate(98 45.6 59.3)"/><ellipse cx="-1.9" cy="50.9" rx="2.9" ry="1.0" fill="#18493c" transform="rotate(149 -1.9 50.9)"/><ellipse cx="58.1" cy="50.9" rx="2.9" ry="1.0" fill="#18493c" transform="rotate(149 58.1 50.9)"/><ellipse cx="-3.8" cy="51.8" rx="2.9" ry="0.6" fill="#1e6350" transform="rotate(147 -3.8 51.8)"/><ellipse cx="56.2" cy="51.8" rx="2.9" ry="0.6" fill="#1e6350" transform="rotate(147 56.2 51.8)"/><ellipse cx="49.2" cy="19.4" rx="1.6" ry="0.8" fill="#2f8a66" transform="rotate(77 49.2 19.4)"/><ellipse cx="36.4" cy="14.8" rx="1.5" ry="1.4" fill="#18493c" transform="rotate(120 36.4 14.8)"/><ellipse cx="-0.4" cy="24.3" rx="2.5" ry="1.1" fill="#1c5140" transform="rotate(47 -0.4 24.3)"/><ellipse cx="59.6" cy="24.3" rx="2.5" ry="1.1" fill="#1c5140" transform="rotate(47 59.6 24.3)"/><ellipse cx="36.3" cy="10.5" rx="2.8" ry="1.3" fill="#18493c" transform="rotate(101 36.3 10.5)"/><ellipse cx="18.1" cy="17.6" rx="1.5" ry="0.7" fill="#2a7a58" transform="rotate(146 18.1 17.6)"/><ellipse cx="-1.9" cy="22.3" rx="2.0" ry="1.4" fill="#257058" transform="rotate(162 -1.9 22.3)"/><ellipse cx="58.1" cy="22.3" rx="2.0" ry="1.4" fill="#257058" transform="rotate(162 58.1 22.3)"/><ellipse cx="23.2" cy="-2.5" rx="1.8" ry="1.1" fill="#1e6350" transform="rotate(38 23.2 -2.5)"/><ellipse cx="23.2" cy="57.5" rx="1.8" ry="1.1" fill="#1e6350" transform="rotate(38 23.2 57.5)"/><ellipse cx="20.7" cy="18.3" rx="1.8" ry="1.2" fill="#143f3c" transform="rotate(92 20.7 18.3)"/><ellipse cx="5.7" cy="26.3" rx="2.9" ry="0.8" fill="#257058" transform="rotate(174 5.7 26.3)"/><ellipse cx="6.6" cy="1.7" rx="2.4" ry="1.3" fill="#143f3c" transform="rotate(83 6.6 1.7)"/><ellipse cx="6.6" cy="61.7" rx="2.4" ry="1.3" fill="#143f3c" transform="rotate(83 6.6 61.7)"/><ellipse cx="-2.7" cy="7.0" rx="1.8" ry="1.2" fill="#143f3c" transform="rotate(52 -2.7 7.0)"/><ellipse cx="57.3" cy="7.0" rx="1.8" ry="1.2" fill="#143f3c" transform="rotate(52 57.3 7.0)"/><ellipse cx="-2.1" cy="9.0" rx="2.2" ry="1.3" fill="#257058" transform="rotate(10 -2.1 9.0)"/><ellipse cx="57.9" cy="9.0" rx="2.2" ry="1.3" fill="#257058" transform="rotate(10 57.9 9.0)"/><ellipse cx="8.2" cy="53.3" rx="2.2" ry="0.7" fill="#1c5140" transform="rotate(36 8.2 53.3)"/><ellipse cx="-3.9" cy="7.7" rx="3.0" ry="0.7" fill="#1e6350" transform="rotate(174 -3.9 7.7)"/><ellipse cx="56.1" cy="7.7" rx="3.0" ry="0.7" fill="#1e6350" transform="rotate(174 56.1 7.7)"/><ellipse cx="53.6" cy="40.5" rx="2.4" ry="1.3" fill="#143f3c" transform="rotate(121 53.6 40.5)"/><ellipse cx="27.8" cy="46.2" rx="1.9" ry="1.1" fill="#18493c" transform="rotate(78 27.8 46.2)"/><ellipse cx="48.0" cy="20.4" rx="3.0" ry="0.8" fill="#1c5140" transform="rotate(32 48.0 20.4)"/><ellipse cx="17.4" cy="52.1" rx="2.9" ry="1.2" fill="#1e6350" transform="rotate(62 17.4 52.1)"/><ellipse cx="44.2" cy="47.2" rx="2.3" ry="1.0" fill="#18493c" transform="rotate(38 44.2 47.2)"/><ellipse cx="34.4" cy="51.4" rx="3.2" ry="0.7" fill="#2a7a58" transform="rotate(14 34.4 51.4)"/><ellipse cx="39.5" cy="39.7" rx="1.6" ry="0.9" fill="#1c5140" transform="rotate(135 39.5 39.7)"/><ellipse cx="47.4" cy="22.7" rx="2.7" ry="0.9" fill="#2f8a66" transform="rotate(119 47.4 22.7)"/><ellipse cx="27.6" cy="7.9" rx="1.9" ry="1.2" fill="#1c5140" transform="rotate(106 27.6 7.9)"/><ellipse cx="5.6" cy="40.6" rx="2.0" ry="0.9" fill="#18493c" transform="rotate(47 5.6 40.6)"/><ellipse cx="31.4" cy="3.1" rx="1.8" ry="0.6" fill="#1c5140" transform="rotate(66 31.4 3.1)"/><ellipse cx="31.4" cy="63.1" rx="1.8" ry="0.6" fill="#1c5140" transform="rotate(66 31.4 63.1)"/><ellipse cx="4.5" cy="2.6" rx="2.0" ry="1.0" fill="#216044" transform="rotate(3 4.5 2.6)"/><ellipse cx="4.5" cy="62.6" rx="2.0" ry="1.0" fill="#216044" transform="rotate(3 4.5 62.6)"/><ellipse cx="11.9" cy="55.0" rx="2.5" ry="0.9" fill="#18493c" transform="rotate(174 11.9 55.0)"/><ellipse cx="21.2" cy="35.9" rx="2.4" ry="1.0" fill="#2f8a66" transform="rotate(33 21.2 35.9)"/><ellipse cx="36.3" cy="9.1" rx="1.7" ry="0.6" fill="#2a7a58" transform="rotate(154 36.3 9.1)"/><ellipse cx="20.2" cy="24.5" rx="2.1" ry="0.9" fill="#257058" transform="rotate(56 20.2 24.5)"/><ellipse cx="9.0" cy="24.2" rx="2.0" ry="1.1" fill="#1e6350" transform="rotate(95 9.0 24.2)"/><ellipse cx="33.5" cy="36.7" rx="2.3" ry="1.3" fill="#2a7a58" transform="rotate(159 33.5 36.7)"/><ellipse cx="0.6" cy="13.2" rx="1.7" ry="1.0" fill="#257058" transform="rotate(107 0.6 13.2)"/><ellipse cx="60.6" cy="13.2" rx="1.7" ry="1.0" fill="#257058" transform="rotate(107 60.6 13.2)"/><ellipse cx="9.7" cy="22.2" rx="1.5" ry="1.1" fill="#143f3c" transform="rotate(80 9.7 22.2)"/><ellipse cx="38.5" cy="3.5" rx="2.5" ry="0.9" fill="#1e6350" transform="rotate(111 38.5 3.5)"/><ellipse cx="38.5" cy="63.5" rx="2.5" ry="0.9" fill="#1e6350" transform="rotate(111 38.5 63.5)"/><ellipse cx="11.4" cy="25.4" rx="3.2" ry="0.6" fill="#216044" transform="rotate(81 11.4 25.4)"/><ellipse cx="24.0" cy="14.3" rx="3.0" ry="0.9" fill="#1e6350" transform="rotate(177 24.0 14.3)"/><ellipse cx="36.5" cy="14.5" rx="2.2" ry="1.1" fill="#216044" transform="rotate(26 36.5 14.5)"/><ellipse cx="26.4" cy="7.0" rx="2.3" ry="1.3" fill="#143f3c" transform="rotate(173 26.4 7.0)"/><ellipse cx="38.1" cy="11.0" rx="2.9" ry="1.0" fill="#143f3c" transform="rotate(113 38.1 11.0)"/><ellipse cx="0.4" cy="14.2" rx="3.1" ry="0.7" fill="#2f8a66" transform="rotate(100 0.4 14.2)"/><ellipse cx="60.4" cy="14.2" rx="3.1" ry="0.7" fill="#2f8a66" transform="rotate(100 60.4 14.2)"/><ellipse cx="32.1" cy="4.3" rx="2.4" ry="1.3" fill="#257058" transform="rotate(44 32.1 4.3)"/><g transform="translate(17.9 14.3) rotate(-24.49829987530463)" stroke="#bfa748" stroke-width="0.75" fill="none"><path d="M-8 0 H8 M-6.5 0 l-1.4 -1.3 M-6.5 0 l-1.4 1.3 M-4.8 0 l-1.4 -2.0 M-4.8 0 l-1.4 2.0 M-3.1 0 l-1.4 -2.6 M-3.1 0 l-1.4 2.6 M-1.4 0 l-1.4 -3.3 M-1.4 0 l-1.4 3.3 M0.3 0 l-1.4 -3.7 M0.3 0 l-1.4 3.7 M2.0 0 l-1.4 -3.0 M2.0 0 l-1.4 3.0 M3.7 0 l-1.4 -2.4 M3.7 0 l-1.4 2.4 M5.4 0 l-1.4 -1.7 M5.4 0 l-1.4 1.7 M7.1 0 l-1.4 -1.1 M7.1 0 l-1.4 1.1 "/></g><g transform="translate(-7.9 27.4) rotate(49.434126870263796)" stroke="#bfa748" stroke-width="0.75" fill="none"><path d="M-8 0 H8 M-6.5 0 l-1.4 -1.3 M-6.5 0 l-1.4 1.3 M-4.8 0 l-1.4 -2.0 M-4.8 0 l-1.4 2.0 M-3.1 0 l-1.4 -2.6 M-3.1 0 l-1.4 2.6 M-1.4 0 l-1.4 -3.3 M-1.4 0 l-1.4 3.3 M0.3 0 l-1.4 -3.7 M0.3 0 l-1.4 3.7 M2.0 0 l-1.4 -3.0 M2.0 0 l-1.4 3.0 M3.7 0 l-1.4 -2.4 M3.7 0 l-1.4 2.4 M5.4 0 l-1.4 -1.7 M5.4 0 l-1.4 1.7 M7.1 0 l-1.4 -1.1 M7.1 0 l-1.4 1.1 "/></g><g transform="translate(52.1 27.4) rotate(49.434126870263796)" stroke="#bfa748" stroke-width="0.75" fill="none"><path d="M-8 0 H8 M-6.5 0 l-1.4 -1.3 M-6.5 0 l-1.4 1.3 M-4.8 0 l-1.4 -2.0 M-4.8 0 l-1.4 2.0 M-3.1 0 l-1.4 -2.6 M-3.1 0 l-1.4 2.6 M-1.4 0 l-1.4 -3.3 M-1.4 0 l-1.4 3.3 M0.3 0 l-1.4 -3.7 M0.3 0 l-1.4 3.7 M2.0 0 l-1.4 -3.0 M2.0 0 l-1.4 3.0 M3.7 0 l-1.4 -2.4 M3.7 0 l-1.4 2.4 M5.4 0 l-1.4 -1.7 M5.4 0 l-1.4 1.7 M7.1 0 l-1.4 -1.1 M7.1 0 l-1.4 1.1 "/></g><g transform="translate(29.2 23.2) rotate(13.94489293869539)" stroke="#bfa748" stroke-width="0.75" fill="none"><path d="M-8 0 H8 M-6.5 0 l-1.4 -1.3 M-6.5 0 l-1.4 1.3 M-4.8 0 l-1.4 -2.0 M-4.8 0 l-1.4 2.0 M-3.1 0 l-1.4 -2.6 M-3.1 0 l-1.4 2.6 M-1.4 0 l-1.4 -3.3 M-1.4 0 l-1.4 3.3 M0.3 0 l-1.4 -3.7 M0.3 0 l-1.4 3.7 M2.0 0 l-1.4 -3.0 M2.0 0 l-1.4 3.0 M3.7 0 l-1.4 -2.4 M3.7 0 l-1.4 2.4 M5.4 0 l-1.4 -1.7 M5.4 0 l-1.4 1.7 M7.1 0 l-1.4 -1.1 M7.1 0 l-1.4 1.1 "/></g><g transform="translate(2.1 28.8) rotate(-17.79078609146231)" stroke="#bfa748" stroke-width="0.75" fill="none"><path d="M-8 0 H8 M-6.5 0 l-1.4 -1.3 M-6.5 0 l-1.4 1.3 M-4.8 0 l-1.4 -2.0 M-4.8 0 l-1.4 2.0 M-3.1 0 l-1.4 -2.6 M-3.1 0 l-1.4 2.6 M-1.4 0 l-1.4 -3.3 M-1.4 0 l-1.4 3.3 M0.3 0 l-1.4 -3.7 M0.3 0 l-1.4 3.7 M2.0 0 l-1.4 -3.0 M2.0 0 l-1.4 3.0 M3.7 0 l-1.4 -2.4 M3.7 0 l-1.4 2.4 M5.4 0 l-1.4 -1.7 M5.4 0 l-1.4 1.7 M7.1 0 l-1.4 -1.1 M7.1 0 l-1.4 1.1 "/></g><g transform="translate(62.1 28.8) rotate(-17.79078609146231)" stroke="#bfa748" stroke-width="0.75" fill="none"><path d="M-8 0 H8 M-6.5 0 l-1.4 -1.3 M-6.5 0 l-1.4 1.3 M-4.8 0 l-1.4 -2.0 M-4.8 0 l-1.4 2.0 M-3.1 0 l-1.4 -2.6 M-3.1 0 l-1.4 2.6 M-1.4 0 l-1.4 -3.3 M-1.4 0 l-1.4 3.3 M0.3 0 l-1.4 -3.7 M0.3 0 l-1.4 3.7 M2.0 0 l-1.4 -3.0 M2.0 0 l-1.4 3.0 M3.7 0 l-1.4 -2.4 M3.7 0 l-1.4 2.4 M5.4 0 l-1.4 -1.7 M5.4 0 l-1.4 1.7 M7.1 0 l-1.4 -1.1 M7.1 0 l-1.4 1.1 "/></g><circle cx="26.0" cy="25.0" r="0.75" fill="#f08aa4"/><circle cx="28.1" cy="24.3" r="0.92" fill="#f08aa4"/><circle cx="28.4" cy="23.8" r="0.93" fill="#f08aa4"/><circle cx="30.5" cy="24.7" r="0.78" fill="#f08aa4"/><circle cx="32.6" cy="25.1" r="0.60" fill="#f08aa4"/><circle cx="28.6" cy="18.4" r="0.75" fill="#ef6f8e"/><circle cx="29.8" cy="19.0" r="0.92" fill="#ef6f8e"/><circle cx="29.1" cy="19.8" r="0.93" fill="#ef6f8e"/><circle cx="30.3" cy="22.1" r="0.78" fill="#ef6f8e"/><circle cx="31.5" cy="23.8" r="0.60" fill="#ef6f8e"/><circle cx="30.9" cy="24.2" r="0.56" fill="#ef6f8e"/><circle cx="42.4" cy="24.5" r="0.75" fill="#f08aa4"/><circle cx="44.1" cy="24.8" r="0.92" fill="#f08aa4"/><circle cx="43.9" cy="25.3" r="0.93" fill="#f08aa4"/><circle cx="45.5" cy="27.3" r="0.78" fill="#f08aa4"/><circle cx="47.2" cy="28.8" r="0.60" fill="#f08aa4"/><circle cx="47.0" cy="28.8" r="0.56" fill="#f08aa4"/><circle cx="48.6" cy="29.8" r="0.69" fill="#f08aa4"/><circle cx="40.4" cy="18.5" r="0.75" fill="#e9486e"/><circle cx="42.3" cy="18.4" r="0.92" fill="#e9486e"/><circle cx="42.4" cy="18.5" r="0.93" fill="#e9486e"/><circle cx="44.4" cy="20.1" r="0.78" fill="#e9486e"/><circle cx="46.3" cy="21.2" r="0.60" fill="#e9486e"/><circle cx="46.4" cy="20.8" r="0.56" fill="#e9486e"/><circle cx="43.1" cy="13.5" r="0.75" fill="#ef6f8e"/><circle cx="45.2" cy="12.7" r="0.92" fill="#ef6f8e"/><circle cx="45.5" cy="12.2" r="0.93" fill="#ef6f8e"/><circle cx="47.6" cy="13.1" r="0.78" fill="#ef6f8e"/><circle cx="49.7" cy="13.5" r="0.60" fill="#ef6f8e"/><circle cx="50.0" cy="12.5" r="0.56" fill="#ef6f8e"/><circle cx="45.3" cy="40.4" r="0.75" fill="#f08aa4"/><circle cx="45.0" cy="40.8" r="0.92" fill="#f08aa4"/><circle cx="42.9" cy="41.4" r="0.93" fill="#f08aa4"/><circle cx="42.6" cy="43.6" r="0.78" fill="#f08aa4"/><circle cx="42.2" cy="45.1" r="0.60" fill="#f08aa4"/><circle cx="40.1" cy="45.2" r="0.56" fill="#f08aa4"/><circle cx="39.8" cy="46.4" r="0.69" fill="#f08aa4"/><circle cx="39.5" cy="48.6" r="0.88" fill="#f08aa4"/><circle cx="56.9" cy="45.4" r="0.75" fill="#e9486e"/><circle cx="56.1" cy="45.2" r="0.92" fill="#e9486e"/><circle cx="53.5" cy="45.1" r="0.93" fill="#e9486e"/><circle cx="52.7" cy="46.6" r="0.78" fill="#e9486e"/><circle cx="51.9" cy="47.5" r="0.60" fill="#e9486e"/><circle cx="49.3" cy="47.0" r="0.56" fill="#e9486e"/><circle cx="48.5" cy="47.5" r="0.69" fill="#e9486e"/><circle cx="37.8" cy="39.4" r="0.75" fill="#f08aa4"/><circle cx="37.7" cy="39.9" r="0.92" fill="#f08aa4"/><circle cx="35.9" cy="40.7" r="0.93" fill="#f08aa4"/><circle cx="35.9" cy="43.0" r="0.78" fill="#f08aa4"/><circle cx="35.8" cy="44.7" r="0.60" fill="#f08aa4"/><circle cx="33.9" cy="45.0" r="0.56" fill="#f08aa4"/><circle cx="33.9" cy="46.3" r="0.69" fill="#f08aa4"/><circle cx="33.9" cy="48.7" r="0.88" fill="#f08aa4"/><circle cx="8.0" cy="37.2" r="0.75" fill="#e9486e"/><circle cx="7.3" cy="37.2" r="0.92" fill="#e9486e"/><circle cx="4.8" cy="37.4" r="0.93" fill="#e9486e"/><circle cx="4.2" cy="39.2" r="0.78" fill="#e9486e"/><circle cx="3.5" cy="40.3" r="0.60" fill="#e9486e"/><circle cx="1.0" cy="40.1" r="0.56" fill="#e9486e"/><circle cx="0.4" cy="40.8" r="0.69" fill="#e9486e"/><circle cx="68.0" cy="37.2" r="0.75" fill="#e9486e"/><circle cx="67.3" cy="37.2" r="0.92" fill="#e9486e"/><circle cx="64.8" cy="37.4" r="0.93" fill="#e9486e"/><circle cx="64.2" cy="39.2" r="0.78" fill="#e9486e"/><circle cx="63.5" cy="40.3" r="0.60" fill="#e9486e"/><circle cx="61.0" cy="40.1" r="0.56" fill="#e9486e"/><circle cx="60.4" cy="40.8" r="0.69" fill="#e9486e"/><circle cx="26.2" cy="8.9" r="0.75" fill="#f08aa4"/><circle cx="25.8" cy="9.2" r="0.92" fill="#f08aa4"/><circle cx="23.6" cy="9.7" r="0.93" fill="#f08aa4"/><circle cx="23.2" cy="11.8" r="0.78" fill="#f08aa4"/><circle cx="22.8" cy="13.2" r="0.60" fill="#f08aa4"/><circle cx="20.6" cy="13.3" r="0.56" fill="#f08aa4"/><circle cx="4.4" cy="36.1" r="0.75" fill="#ef6f8e"/><circle cx="6.0" cy="36.4" r="0.92" fill="#ef6f8e"/><circle cx="5.7" cy="37.0" r="0.93" fill="#ef6f8e"/><circle cx="7.4" cy="39.0" r="0.78" fill="#ef6f8e"/><circle cx="8.9" cy="40.5" r="0.60" fill="#ef6f8e"/><circle cx="8.7" cy="40.6" r="0.56" fill="#ef6f8e"/><circle cx="57.4" cy="20.7" r="0.75" fill="#e9486e"/><circle cx="56.6" cy="20.1" r="0.92" fill="#e9486e"/><circle cx="53.9" cy="19.7" r="0.93" fill="#e9486e"/><circle cx="53.0" cy="20.9" r="0.78" fill="#e9486e"/><circle cx="52.1" cy="21.5" r="0.60" fill="#e9486e"/><circle cx="49.4" cy="20.7" r="0.56" fill="#e9486e"/><circle cx="48.5" cy="20.8" r="0.69" fill="#e9486e"/><circle cx="47.6" cy="22.1" r="0.88" fill="#e9486e"/><circle cx="9.9" cy="32.8" r="1.21" fill="#ef6f8e"/><circle cx="11.5" cy="33.6" r="1.21" fill="#ef6f8e"/><circle cx="11.2" cy="35.3" r="1.21" fill="#ef6f8e"/><circle cx="9.5" cy="35.6" r="1.21" fill="#ef6f8e"/><circle cx="8.7" cy="34.0" r="1.21" fill="#ef6f8e"/><circle cx="10.1" cy="34.3" r="0.87" fill="#f7c9d2"/><circle cx="51.2" cy="5.2" r="1.03" fill="#ef6f8e"/><circle cx="50.1" cy="4.2" r="1.03" fill="#ef6f8e"/><circle cx="50.7" cy="2.8" r="1.03" fill="#ef6f8e"/><circle cx="52.2" cy="3.0" r="1.03" fill="#ef6f8e"/><circle cx="52.5" cy="4.4" r="1.03" fill="#ef6f8e"/><circle cx="51.4" cy="3.9" r="0.74" fill="#f7c9d2"/><circle cx="33.7" cy="33.2" r="1.08" fill="#e9486e"/><circle cx="35.1" cy="32.5" r="1.08" fill="#e9486e"/><circle cx="36.2" cy="33.6" r="1.08" fill="#e9486e"/><circle cx="35.4" cy="35.0" r="1.08" fill="#e9486e"/><circle cx="33.8" cy="34.7" r="1.08" fill="#e9486e"/><circle cx="34.8" cy="33.8" r="0.78" fill="#f7c9d2"/><circle cx="2.2" cy="41.7" r="1.26" fill="#ef6f8e"/><circle cx="1.2" cy="40.1" r="1.26" fill="#ef6f8e"/><circle cx="2.4" cy="38.7" r="1.26" fill="#ef6f8e"/><circle cx="4.1" cy="39.4" r="1.26" fill="#ef6f8e"/><circle cx="4.0" cy="41.2" r="1.26" fill="#ef6f8e"/><circle cx="2.8" cy="40.2" r="0.91" fill="#f7c9d2"/><circle cx="62.2" cy="41.7" r="1.26" fill="#ef6f8e"/><circle cx="61.2" cy="40.1" r="1.26" fill="#ef6f8e"/><circle cx="62.4" cy="38.7" r="1.26" fill="#ef6f8e"/><circle cx="64.1" cy="39.4" r="1.26" fill="#ef6f8e"/><circle cx="64.0" cy="41.2" r="1.26" fill="#ef6f8e"/><circle cx="62.8" cy="40.2" r="0.91" fill="#f7c9d2"/><circle cx="55.8" cy="-1.2" r="1.15" fill="#f08aa4"/><circle cx="57.0" cy="-0.0" r="1.15" fill="#f08aa4"/><circle cx="56.2" cy="1.5" r="1.15" fill="#f08aa4"/><circle cx="54.6" cy="1.2" r="1.15" fill="#f08aa4"/><circle cx="54.3" cy="-0.5" r="1.15" fill="#f08aa4"/><circle cx="55.6" cy="0.2" r="0.83" fill="#f7c9d2"/><circle cx="55.8" cy="58.8" r="1.15" fill="#f08aa4"/><circle cx="57.0" cy="60.0" r="1.15" fill="#f08aa4"/><circle cx="56.2" cy="61.5" r="1.15" fill="#f08aa4"/><circle cx="54.6" cy="61.2" r="1.15" fill="#f08aa4"/><circle cx="54.3" cy="59.5" r="1.15" fill="#f08aa4"/><circle cx="55.6" cy="60.2" r="0.83" fill="#f7c9d2"/><circle cx="34.5" cy="17.7" r="1.30" fill="#ef6f8e"/><circle cx="35.8" cy="19.0" r="1.30" fill="#ef6f8e"/><circle cx="35.0" cy="20.7" r="1.30" fill="#ef6f8e"/><circle cx="33.1" cy="20.4" r="1.30" fill="#ef6f8e"/><circle cx="32.8" cy="18.6" r="1.30" fill="#ef6f8e"/><circle cx="34.2" cy="19.3" r="0.94" fill="#f7c9d2"/><circle cx="31.6" cy="10.9" r="0.98" fill="#f08aa4"/><circle cx="30.9" cy="9.7" r="0.98" fill="#f08aa4"/><circle cx="31.9" cy="8.6" r="0.98" fill="#f08aa4"/><circle cx="33.1" cy="9.2" r="0.98" fill="#f08aa4"/><circle cx="33.0" cy="10.7" r="0.98" fill="#f08aa4"/><circle cx="32.1" cy="9.8" r="0.70" fill="#f7c9d2"/><circle cx="30.9" cy="7.6" r="1.18" fill="#e9486e"/><circle cx="32.6" cy="7.6" r="1.18" fill="#e9486e"/><circle cx="33.2" cy="9.2" r="1.18" fill="#e9486e"/><circle cx="31.8" cy="10.3" r="1.18" fill="#e9486e"/><circle cx="30.4" cy="9.3" r="1.18" fill="#e9486e"/><circle cx="31.8" cy="8.8" r="0.85" fill="#f7c9d2"/><circle cx="19.7" cy="50.5" r="1.16" fill="#ef6f8e"/><circle cx="21.2" cy="49.7" r="1.16" fill="#ef6f8e"/><circle cx="22.4" cy="50.9" r="1.16" fill="#ef6f8e"/><circle cx="21.6" cy="52.4" r="1.16" fill="#ef6f8e"/><circle cx="19.9" cy="52.2" r="1.16" fill="#ef6f8e"/><circle cx="21.0" cy="51.2" r="0.84" fill="#f7c9d2"/><circle cx="48.5" cy="23.5" r="1.06" fill="#ef6f8e"/><circle cx="48.1" cy="22.0" r="1.06" fill="#ef6f8e"/><circle cx="49.4" cy="21.1" r="1.06" fill="#ef6f8e"/><circle cx="50.6" cy="22.0" r="1.06" fill="#ef6f8e"/><circle cx="50.1" cy="23.5" r="1.06" fill="#ef6f8e"/><circle cx="49.4" cy="22.4" r="0.77" fill="#f7c9d2"/><circle cx="21.9" cy="32.3" r="1.32" fill="#e9486e"/><circle cx="23.3" cy="31.1" r="1.32" fill="#e9486e"/><circle cx="25.0" cy="32.1" r="1.32" fill="#e9486e"/><circle cx="24.5" cy="33.9" r="1.32" fill="#e9486e"/><circle cx="22.6" cy="34.1" r="1.32" fill="#e9486e"/><circle cx="23.5" cy="32.7" r="0.95" fill="#f7c9d2"/><circle cx="38.2" cy="25.6" r="1.14" fill="#c9b928"/><circle cx="39.6" cy="24.7" r="1.14" fill="#c9b928"/><circle cx="40.9" cy="25.7" r="1.14" fill="#c9b928"/><circle cx="40.3" cy="27.3" r="1.14" fill="#c9b928"/><circle cx="38.7" cy="27.2" r="1.14" fill="#c9b928"/><circle cx="39.5" cy="26.1" r="0.82" fill="#e9486e"/><circle cx="45.6" cy="55.0" r="1.10" fill="#c9b928"/><circle cx="46.0" cy="53.5" r="1.10" fill="#c9b928"/><circle cx="47.6" cy="53.3" r="1.10" fill="#c9b928"/><circle cx="48.2" cy="54.8" r="1.10" fill="#c9b928"/><circle cx="47.0" cy="55.9" r="1.10" fill="#c9b928"/><circle cx="46.9" cy="54.5" r="0.79" fill="#e9486e"/><circle cx="27.9" cy="44.2" r="1.35" fill="#c9b928"/><circle cx="27.6" cy="46.1" r="1.35" fill="#c9b928"/><circle cx="25.6" cy="46.3" r="1.35" fill="#c9b928"/><circle cx="24.8" cy="44.6" r="1.35" fill="#c9b928"/><circle cx="26.2" cy="43.2" r="1.35" fill="#c9b928"/><circle cx="26.4" cy="44.9" r="0.97" fill="#e9486e"/><circle cx="41.4" cy="36.7" r="1.04" fill="#c9b928"/><circle cx="40.1" cy="37.5" r="1.04" fill="#c9b928"/><circle cx="38.9" cy="36.6" r="1.04" fill="#c9b928"/><circle cx="39.5" cy="35.1" r="1.04" fill="#c9b928"/><circle cx="41.0" cy="35.2" r="1.04" fill="#c9b928"/><circle cx="40.2" cy="36.2" r="0.75" fill="#e9486e"/><circle cx="2.8" cy="37.5" r="1.23" fill="#c9b928"/><circle cx="1.4" cy="38.7" r="1.23" fill="#c9b928"/><circle cx="-0.1" cy="37.8" r="1.23" fill="#c9b928"/><circle cx="0.3" cy="36.0" r="1.23" fill="#c9b928"/><circle cx="2.1" cy="35.9" r="1.23" fill="#c9b928"/><circle cx="1.3" cy="37.2" r="0.89" fill="#e9486e"/><circle cx="62.8" cy="37.5" r="1.23" fill="#c9b928"/><circle cx="61.4" cy="38.7" r="1.23" fill="#c9b928"/><circle cx="59.9" cy="37.8" r="1.23" fill="#c9b928"/><circle cx="60.3" cy="36.0" r="1.23" fill="#c9b928"/><circle cx="62.1" cy="35.9" r="1.23" fill="#c9b928"/><circle cx="61.3" cy="37.2" r="0.89" fill="#e9486e"/><circle cx="53.1" cy="43.0" r="1.28" fill="#c9b928"/><circle cx="51.6" cy="42.0" r="1.28" fill="#c9b928"/><circle cx="52.0" cy="40.2" r="1.28" fill="#c9b928"/><circle cx="53.8" cy="40.1" r="1.28" fill="#c9b928"/><circle cx="54.6" cy="41.8" r="1.28" fill="#c9b928"/><circle cx="53.0" cy="41.4" r="0.92" fill="#e9486e"/><circle cx="16.9" cy="33.1" r="1.07" fill="#2f93c6"/><circle cx="17.7" cy="32.0" r="1.07" fill="#2f93c6"/><circle cx="19.0" cy="32.2" r="1.07" fill="#2f93c6"/><circle cx="19.5" cy="33.4" r="1.07" fill="#2f93c6"/><circle cx="18.7" cy="34.4" r="1.07" fill="#2f93c6"/><circle cx="17.4" cy="34.3" r="1.07" fill="#2f93c6"/><circle cx="18.2" cy="33.2" r="0.77" fill="#e6cf3c"/><circle cx="40.5" cy="35.6" r="1.06" fill="#2f93c6"/><circle cx="40.2" cy="36.9" r="1.06" fill="#2f93c6"/><circle cx="38.9" cy="37.3" r="1.06" fill="#2f93c6"/><circle cx="38.0" cy="36.5" r="1.06" fill="#2f93c6"/><circle cx="38.2" cy="35.2" r="1.06" fill="#2f93c6"/><circle cx="39.5" cy="34.7" r="1.06" fill="#2f93c6"/><circle cx="39.2" cy="36.0" r="0.77" fill="#e6cf3c"/><circle cx="16.6" cy="33.8" r="1.08" fill="#2f93c6"/><circle cx="15.7" cy="34.8" r="1.08" fill="#2f93c6"/><circle cx="14.4" cy="34.5" r="1.08" fill="#2f93c6"/><circle cx="14.0" cy="33.3" r="1.08" fill="#2f93c6"/><circle cx="14.9" cy="32.3" r="1.08" fill="#2f93c6"/><circle cx="16.2" cy="32.5" r="1.08" fill="#2f93c6"/><circle cx="15.3" cy="33.5" r="0.78" fill="#e6cf3c"/><circle cx="20.0" cy="40.3" r="1.25" fill="#2f93c6"/><circle cx="19.7" cy="38.8" r="1.25" fill="#2f93c6"/><circle cx="20.8" cy="37.7" r="1.25" fill="#2f93c6"/><circle cx="22.3" cy="38.2" r="1.25" fill="#2f93c6"/><circle cx="22.7" cy="39.7" r="1.25" fill="#2f93c6"/><circle cx="21.5" cy="40.8" r="1.25" fill="#2f93c6"/><circle cx="21.2" cy="39.3" r="0.90" fill="#e6cf3c"/><circle cx="8.3" cy="38.1" r="0.97" fill="#2f93c6"/><circle cx="8.9" cy="37.0" r="0.97" fill="#2f93c6"/><circle cx="10.1" cy="37.0" r="0.97" fill="#2f93c6"/><circle cx="10.7" cy="38.0" r="0.97" fill="#2f93c6"/><circle cx="10.2" cy="39.0" r="0.97" fill="#2f93c6"/><circle cx="9.0" cy="39.1" r="0.97" fill="#2f93c6"/><circle cx="9.5" cy="38.0" r="0.70" fill="#e6cf3c"/><circle cx="7.0" cy="41.9" r="0.7" fill="#f3a2b6"/><circle cx="47.3" cy="30.9" r="0.7" fill="#f08aa4"/><circle cx="21.2" cy="8.6" r="0.9" fill="#f3a2b6"/><circle cx="0.7" cy="41.4" r="0.7" fill="#e6cf3c"/><circle cx="60.7" cy="41.4" r="0.7" fill="#e6cf3c"/><circle cx="9.8" cy="42.4" r="0.6" fill="#3fa3d6"/><circle cx="9.5" cy="46.0" r="0.6" fill="#f3a2b6"/><circle cx="8.4" cy="6.3" r="0.7" fill="#f3a2b6"/><circle cx="1.1" cy="40.3" r="0.7" fill="#f3a2b6"/><circle cx="61.1" cy="40.3" r="0.7" fill="#f3a2b6"/><circle cx="43.6" cy="18.5" r="0.7" fill="#3fa3d6"/><circle cx="9.8" cy="49.7" r="0.7" fill="#f3a2b6"/><circle cx="37.1" cy="57.7" r="0.7" fill="#f08aa4"/><circle cx="23.2" cy="8.3" r="0.8" fill="#3fa3d6"/><circle cx="31.0" cy="30.0" r="0.7" fill="#3fa3d6"/><circle cx="18.9" cy="26.5" r="0.9" fill="#e9486e"/><circle cx="12.4" cy="2.6" r="0.9" fill="#e9486e"/><circle cx="46.2" cy="26.8" r="0.7" fill="#f3a2b6"/><circle cx="46.1" cy="37.6" r="0.9" fill="#3fa3d6"/><circle cx="55.9" cy="4.2" r="0.8" fill="#e6cf3c"/><circle cx="2.4" cy="41.3" r="1.0" fill="#e6cf3c"/><circle cx="19.0" cy="31.0" r="0.6" fill="#3fa3d6"/><circle cx="14.6" cy="19.2" r="0.7" fill="#e6cf3c"/><circle cx="28.7" cy="32.9" r="0.8" fill="#3fa3d6"/><circle cx="17.3" cy="10.1" r="0.6" fill="#e6cf3c"/><circle cx="1.3" cy="10.3" r="0.7" fill="#3fa3d6"/><circle cx="61.3" cy="10.3" r="0.7" fill="#3fa3d6"/><circle cx="54.4" cy="43.8" r="0.9" fill="#f3a2b6"/><circle cx="40.5" cy="48.7" r="0.7" fill="#3fa3d6"/><circle cx="39.4" cy="55.5" r="0.9" fill="#e6cf3c"/><circle cx="3.8" cy="56.7" r="0.6" fill="#3fa3d6"/><circle cx="0.1" cy="37.8" r="0.8" fill="#3fa3d6"/><circle cx="60.1" cy="37.8" r="0.8" fill="#3fa3d6"/><circle cx="27.0" cy="5.6" r="0.9" fill="#f08aa4"/></pattern></defs>
<path d="M600 143.5 Q640 150.5 694 155.5 Q750 158.5 779 160.6 Q776.6 174 775.4 186 L785 190.5 Q784 200 781.5 211 Q778 224 774 232 Q770 240 767 243 Q764.6 253 763 263 Q760 273 752.5 276.4 Q750 278 746 278.2 L656 274.6 Q636 272 626.8 268 Q619 262 618 252 Q616 215 612 195 Q608 168 600 143.5 Z" fill="url(#totepat)"/>
<path d="M600 143.5 Q640 150.5 694 155.5 Q750 158.5 779 160.6 Q776.6 174 775.4 186 L785 190.5 Q784 200 781.5 211 Q778 224 774 232 Q770 240 767 243 Q764.6 253 763 263 Q760 273 752.5 276.4 Q750 278 746 278.2 L656 274.6 Q636 272 626.8 268 Q619 262 618 252 Q616 215 612 195 Q608 168 600 143.5 Z" fill="none" stroke="#141d3c" stroke-width="0.7"/>
<path d="M601 144.4 Q640 151.6 694 156.8 Q750 160 778 161 Q785 160.6 790.4 158.4" fill="none" stroke="#101832" stroke-width="0.9"/>
<path d="M662 121 C666 104 672 88 680 83.5 C684 81 690 81 694 83.5 C702 88 707 104 712.2 121" stroke="#1d2a55" stroke-width="2.6" fill="none" stroke-linejoin="round" stroke-linecap="round" />
<path d="M661.6 119.5 L663.6 119.5 L666 131 L664 152 L662.6 156 L656 270.6 L644 269.4 L649.4 154 L654.4 131 Z" stroke="#1d2a55" stroke-width="0.3" fill="#1d2a55" stroke-linejoin="round" stroke-linecap="round" />
<path d="M706.4 121 L708.2 121 L713.2 131 L716 150 L719 160 L716.7 277 L706 276.6 L705.6 160 L702 131 Z" stroke="#1d2a55" stroke-width="0.3" fill="#1d2a55" stroke-linejoin="round" stroke-linecap="round" />
<g transform="rotate(5 670 191)"><rect x="663.6" y="186.4" width="13" height="9" fill="#f4efe6" stroke="#9a9a9a" stroke-width="0.4"/><rect x="664.8" y="188.8" width="10.6" height="4" fill="#e8607f"/><rect x="664.8" y="187.4" width="10.6" height="0.7" fill="#c9c2b4"/><rect x="664.8" y="193.6" width="10.6" height="0.7" fill="#c9c2b4"/></g>
<text x="670" y="192" font-size="2.2" text-anchor="middle" fill="#fff" font-family="Liberation Serif,serif" font-style="italic">Cath Kidston</text>
<path d="M601.6 189 L611.4 190 L615.4 234 L605.4 236.4 Z" stroke="#1d2a55" stroke-width="0.3" fill="#1d2a55" stroke-linejoin="round" stroke-linecap="round" />
<path d="M601 236.3 L614.6 233 L617.4 245.4 L604 250 Z" stroke="#1d2a55" stroke-width="0.3" fill="#1d2a55" stroke-linejoin="round" stroke-linecap="round" />
<path d="M608.6 159 Q610.6 164 608 169 Q605.6 173 606.4 177" stroke="#c2a23a" stroke-width="1.5" fill="none" stroke-linejoin="round" stroke-linecap="round" />
<path d="M601.3 177.5 L612.6 179.4 L612.6 190.6 L601.6 188.6 Z" stroke="#1d2a55" stroke-width="0.3" fill="#1d2a55" stroke-linejoin="round" stroke-linecap="round" />
<path d="M603.4 180.6 L610.4 181.8 L610.4 186.6 L603.4 185.4 Z" fill="none" stroke="#c2a23a" stroke-width="0.7"/>
<path d="M774.3 186 L785 190.5 Q784 200 781.5 211 Q778 224 774 232 L769 240 Q768 236 768.4 232 Q770 222 771.4 211 Q773 198 774.3 186 Z" stroke="#1d2a55" stroke-width="0.3" fill="#1d2a55" stroke-linejoin="round" stroke-linecap="round" />
<ellipse cx="776.6" cy="171.4" rx="1.7" ry="3.6" fill="none" stroke="#c2a23a" stroke-width="1.1" transform="rotate(-8 776.6 171.4)"/><ellipse cx="778" cy="179.6" rx="1.7" ry="3.8" fill="none" stroke="#c2a23a" stroke-width="1.1" transform="rotate(-12 778 179.6)"/>
<defs><pattern id="bppat" width="54" height="54" patternUnits="userSpaceOnUse" patternTransform="translate(336 228)"><rect width="54" height="54" fill="#f4f0e2"/><ellipse cx="24.4" cy="30.2" rx="2.6" ry="1.9" fill="#1a7a4e" transform="rotate(34 24.4 30.2)"/><ellipse cx="43.4" cy="25.7" rx="3.1" ry="1.3" fill="#23966a" transform="rotate(55 43.4 25.7)"/><ellipse cx="4.9" cy="43.7" rx="2.9" ry="1.7" fill="#23966a" transform="rotate(71 4.9 43.7)"/><ellipse cx="24.5" cy="39.9" rx="2.2" ry="1.2" fill="#23966a" transform="rotate(95 24.5 39.9)"/><ellipse cx="3.2" cy="10.3" rx="2.8" ry="1.8" fill="#1e8a58" transform="rotate(59 3.2 10.3)"/><ellipse cx="57.2" cy="10.3" rx="2.8" ry="1.8" fill="#1e8a58" transform="rotate(59 57.2 10.3)"/><ellipse cx="31.9" cy="10.5" rx="2.9" ry="1.6" fill="#1e8a58" transform="rotate(119 31.9 10.5)"/><ellipse cx="24.7" cy="15.0" rx="3.4" ry="1.9" fill="#23966a" transform="rotate(127 24.7 15.0)"/><ellipse cx="17.0" cy="12.4" rx="2.0" ry="1.7" fill="#1a7a4e" transform="rotate(19 17.0 12.4)"/><ellipse cx="5.8" cy="15.7" rx="3.3" ry="1.9" fill="#1e8a58" transform="rotate(0 5.8 15.7)"/><ellipse cx="11.3" cy="49.2" rx="2.5" ry="1.8" fill="#1a7a4e" transform="rotate(76 11.3 49.2)"/><ellipse cx="30.6" cy="10.7" rx="2.4" ry="1.3" fill="#23966a" transform="rotate(60 30.6 10.7)"/><ellipse cx="-1.9" cy="40.9" rx="2.2" ry="1.8" fill="#1e8a58" transform="rotate(2 -1.9 40.9)"/><ellipse cx="52.1" cy="40.9" rx="2.2" ry="1.8" fill="#1e8a58" transform="rotate(2 52.1 40.9)"/><ellipse cx="25.1" cy="26.3" rx="2.8" ry="1.6" fill="#23966a" transform="rotate(34 25.1 26.3)"/><ellipse cx="39.5" cy="7.1" rx="2.5" ry="1.5" fill="#23966a" transform="rotate(178 39.5 7.1)"/><ellipse cx="0.0" cy="46.7" rx="2.4" ry="1.9" fill="#23966a" transform="rotate(38 0.0 46.7)"/><ellipse cx="54.0" cy="46.7" rx="2.4" ry="1.9" fill="#23966a" transform="rotate(38 54.0 46.7)"/><ellipse cx="21.3" cy="46.1" rx="2.8" ry="1.2" fill="#23966a" transform="rotate(26 21.3 46.1)"/><ellipse cx="23.8" cy="0.5" rx="2.5" ry="1.4" fill="#23966a" transform="rotate(13 23.8 0.5)"/><ellipse cx="23.8" cy="54.5" rx="2.5" ry="1.4" fill="#23966a" transform="rotate(13 23.8 54.5)"/><ellipse cx="4.9" cy="31.5" rx="2.0" ry="1.5" fill="#1e8a58" transform="rotate(112 4.9 31.5)"/><ellipse cx="6.9" cy="31.7" rx="2.2" ry="1.5" fill="#23966a" transform="rotate(113 6.9 31.7)"/><ellipse cx="16.8" cy="12.3" rx="2.3" ry="1.4" fill="#23966a" transform="rotate(133 16.8 12.3)"/><ellipse cx="-3.2" cy="10.6" rx="3.2" ry="1.7" fill="#1a7a4e" transform="rotate(76 -3.2 10.6)"/><ellipse cx="50.8" cy="10.6" rx="3.2" ry="1.7" fill="#1a7a4e" transform="rotate(76 50.8 10.6)"/><ellipse cx="5.6" cy="2.1" rx="2.3" ry="1.8" fill="#1a7a4e" transform="rotate(46 5.6 2.1)"/><ellipse cx="5.6" cy="56.1" rx="2.3" ry="1.8" fill="#1a7a4e" transform="rotate(46 5.6 56.1)"/><ellipse cx="44.5" cy="32.2" rx="2.7" ry="1.9" fill="#1a7a4e" transform="rotate(176 44.5 32.2)"/><ellipse cx="6.8" cy="25.9" rx="3.2" ry="1.7" fill="#23966a" transform="rotate(50 6.8 25.9)"/><ellipse cx="49.5" cy="11.0" rx="2.1" ry="1.5" fill="#1e8a58" transform="rotate(45 49.5 11.0)"/><ellipse cx="2.5" cy="15.2" rx="2.8" ry="1.3" fill="#23966a" transform="rotate(65 2.5 15.2)"/><ellipse cx="56.5" cy="15.2" rx="2.8" ry="1.3" fill="#23966a" transform="rotate(65 56.5 15.2)"/><ellipse cx="48.1" cy="-1.1" rx="3.0" ry="1.6" fill="#23966a" transform="rotate(170 48.1 -1.1)"/><ellipse cx="48.1" cy="52.9" rx="3.0" ry="1.6" fill="#23966a" transform="rotate(170 48.1 52.9)"/><ellipse cx="31.9" cy="49.9" rx="3.3" ry="1.8" fill="#1a7a4e" transform="rotate(173 31.9 49.9)"/><ellipse cx="1.1" cy="34.4" rx="2.1" ry="1.4" fill="#1a7a4e" transform="rotate(25 1.1 34.4)"/><ellipse cx="55.1" cy="34.4" rx="2.1" ry="1.4" fill="#1a7a4e" transform="rotate(25 55.1 34.4)"/><ellipse cx="3.9" cy="24.5" rx="3.0" ry="1.9" fill="#1a7a4e" transform="rotate(133 3.9 24.5)"/><ellipse cx="57.9" cy="24.5" rx="3.0" ry="1.9" fill="#1a7a4e" transform="rotate(133 57.9 24.5)"/><ellipse cx="38.0" cy="42.8" rx="2.5" ry="1.7" fill="#1a7a4e" transform="rotate(162 38.0 42.8)"/><ellipse cx="47.0" cy="22.5" rx="3.2" ry="1.7" fill="#1e8a58" transform="rotate(112 47.0 22.5)"/><ellipse cx="20.6" cy="31.5" rx="2.1" ry="1.3" fill="#23966a" transform="rotate(21 20.6 31.5)"/><ellipse cx="13.9" cy="22.5" rx="2.5" ry="1.8" fill="#1a7a4e" transform="rotate(105 13.9 22.5)"/><ellipse cx="23.8" cy="45.3" rx="2.7" ry="1.6" fill="#1e8a58" transform="rotate(56 23.8 45.3)"/><ellipse cx="4.7" cy="1.2" rx="2.2" ry="1.8" fill="#23966a" transform="rotate(119 4.7 1.2)"/><ellipse cx="4.7" cy="55.2" rx="2.2" ry="1.8" fill="#23966a" transform="rotate(119 4.7 55.2)"/><ellipse cx="26.3" cy="48.4" rx="2.4" ry="1.7" fill="#1a7a4e" transform="rotate(36 26.3 48.4)"/><ellipse cx="9.2" cy="48.9" rx="3.3" ry="1.6" fill="#23966a" transform="rotate(43 9.2 48.9)"/><ellipse cx="21.9" cy="13.5" rx="2.6" ry="1.8" fill="#23966a" transform="rotate(165 21.9 13.5)"/><ellipse cx="47.5" cy="20.8" rx="3.3" ry="1.4" fill="#23966a" transform="rotate(24 47.5 20.8)"/><circle cx="-9.1" cy="34.2" r="2.72" fill="#1e8a58"/><circle cx="-5.1" cy="33.2" r="2.72" fill="#1e8a58"/><circle cx="-1.7" cy="35.3" r="2.72" fill="#1e8a58"/><circle cx="-0.7" cy="39.2" r="2.72" fill="#1e8a58"/><circle cx="-2.7" cy="42.7" r="2.72" fill="#1e8a58"/><circle cx="-6.6" cy="43.7" r="2.72" fill="#1e8a58"/><circle cx="-10.1" cy="41.6" r="2.72" fill="#1e8a58"/><circle cx="-11.1" cy="37.7" r="2.72" fill="#1e8a58"/><circle cx="-5.9" cy="38.4" r="4.00" fill="#1e8a58"/><circle cx="-5.9" cy="38.4" r="1.44" fill="#2d3f88"/><circle cx="44.9" cy="34.2" r="2.72" fill="#1e8a58"/><circle cx="48.9" cy="33.2" r="2.72" fill="#1e8a58"/><circle cx="52.3" cy="35.3" r="2.72" fill="#1e8a58"/><circle cx="53.3" cy="39.2" r="2.72" fill="#1e8a58"/><circle cx="51.3" cy="42.7" r="2.72" fill="#1e8a58"/><circle cx="47.4" cy="43.7" r="2.72" fill="#1e8a58"/><circle cx="43.9" cy="41.6" r="2.72" fill="#1e8a58"/><circle cx="42.9" cy="37.7" r="2.72" fill="#1e8a58"/><circle cx="48.1" cy="38.4" r="4.00" fill="#1e8a58"/><circle cx="48.1" cy="38.4" r="1.44" fill="#2d3f88"/><circle cx="-9.7" cy="-9.2" r="2.72" fill="#1e8a58"/><circle cx="-6.0" cy="-10.9" r="2.72" fill="#1e8a58"/><circle cx="-2.3" cy="-9.4" r="2.72" fill="#1e8a58"/><circle cx="-0.6" cy="-5.7" r="2.72" fill="#1e8a58"/><circle cx="-2.0" cy="-2.0" r="2.72" fill="#1e8a58"/><circle cx="-5.7" cy="-0.3" r="2.72" fill="#1e8a58"/><circle cx="-9.5" cy="-1.7" r="2.72" fill="#1e8a58"/><circle cx="-11.2" cy="-5.4" r="2.72" fill="#1e8a58"/><circle cx="-5.9" cy="-5.6" r="4.00" fill="#1e8a58"/><circle cx="-5.9" cy="-5.6" r="1.44" fill="#2d3f88"/><circle cx="-9.7" cy="44.8" r="2.72" fill="#1e8a58"/><circle cx="-6.0" cy="43.1" r="2.72" fill="#1e8a58"/><circle cx="-2.3" cy="44.6" r="2.72" fill="#1e8a58"/><circle cx="-0.6" cy="48.3" r="2.72" fill="#1e8a58"/><circle cx="-2.0" cy="52.0" r="2.72" fill="#1e8a58"/><circle cx="-5.7" cy="53.7" r="2.72" fill="#1e8a58"/><circle cx="-9.5" cy="52.3" r="2.72" fill="#1e8a58"/><circle cx="-11.2" cy="48.6" r="2.72" fill="#1e8a58"/><circle cx="-5.9" cy="48.4" r="4.00" fill="#1e8a58"/><circle cx="-5.9" cy="48.4" r="1.44" fill="#2d3f88"/><circle cx="44.3" cy="-9.2" r="2.72" fill="#1e8a58"/><circle cx="48.0" cy="-10.9" r="2.72" fill="#1e8a58"/><circle cx="51.7" cy="-9.4" r="2.72" fill="#1e8a58"/><circle cx="53.4" cy="-5.7" r="2.72" fill="#1e8a58"/><circle cx="52.0" cy="-2.0" r="2.72" fill="#1e8a58"/><circle cx="48.3" cy="-0.3" r="2.72" fill="#1e8a58"/><circle cx="44.5" cy="-1.7" r="2.72" fill="#1e8a58"/><circle cx="42.8" cy="-5.4" r="2.72" fill="#1e8a58"/><circle cx="48.1" cy="-5.6" r="4.00" fill="#1e8a58"/><circle cx="48.1" cy="-5.6" r="1.44" fill="#2d3f88"/><circle cx="44.3" cy="44.8" r="2.72" fill="#1e8a58"/><circle cx="48.0" cy="43.1" r="2.72" fill="#1e8a58"/><circle cx="51.7" cy="44.6" r="2.72" fill="#1e8a58"/><circle cx="53.4" cy="48.3" r="2.72" fill="#1e8a58"/><circle cx="52.0" cy="52.0" r="2.72" fill="#1e8a58"/><circle cx="48.3" cy="53.7" r="2.72" fill="#1e8a58"/><circle cx="44.5" cy="52.3" r="2.72" fill="#1e8a58"/><circle cx="42.8" cy="48.6" r="2.72" fill="#1e8a58"/><circle cx="48.1" cy="48.4" r="4.00" fill="#1e8a58"/><circle cx="48.1" cy="48.4" r="1.44" fill="#2d3f88"/><circle cx="1.3" cy="9.0" r="2.72" fill="#1e8a58"/><circle cx="-0.0" cy="5.2" r="2.72" fill="#1e8a58"/><circle cx="1.8" cy="1.6" r="2.72" fill="#1e8a58"/><circle cx="5.7" cy="0.3" r="2.72" fill="#1e8a58"/><circle cx="9.3" cy="2.1" r="2.72" fill="#1e8a58"/><circle cx="10.5" cy="6.0" r="2.72" fill="#1e8a58"/><circle cx="8.7" cy="9.6" r="2.72" fill="#1e8a58"/><circle cx="4.9" cy="10.8" r="2.72" fill="#1e8a58"/><circle cx="5.3" cy="5.6" r="4.00" fill="#1e8a58"/><circle cx="5.3" cy="5.6" r="1.44" fill="#2d3f88"/><circle cx="1.3" cy="63.0" r="2.72" fill="#1e8a58"/><circle cx="-0.0" cy="59.2" r="2.72" fill="#1e8a58"/><circle cx="1.8" cy="55.6" r="2.72" fill="#1e8a58"/><circle cx="5.7" cy="54.3" r="2.72" fill="#1e8a58"/><circle cx="9.3" cy="56.1" r="2.72" fill="#1e8a58"/><circle cx="10.5" cy="60.0" r="2.72" fill="#1e8a58"/><circle cx="8.7" cy="63.6" r="2.72" fill="#1e8a58"/><circle cx="4.9" cy="64.8" r="2.72" fill="#1e8a58"/><circle cx="5.3" cy="59.6" r="4.00" fill="#1e8a58"/><circle cx="5.3" cy="59.6" r="1.44" fill="#2d3f88"/><circle cx="55.3" cy="9.0" r="2.72" fill="#1e8a58"/><circle cx="54.0" cy="5.2" r="2.72" fill="#1e8a58"/><circle cx="55.8" cy="1.6" r="2.72" fill="#1e8a58"/><circle cx="59.7" cy="0.3" r="2.72" fill="#1e8a58"/><circle cx="63.3" cy="2.1" r="2.72" fill="#1e8a58"/><circle cx="64.5" cy="6.0" r="2.72" fill="#1e8a58"/><circle cx="62.7" cy="9.6" r="2.72" fill="#1e8a58"/><circle cx="58.9" cy="10.8" r="2.72" fill="#1e8a58"/><circle cx="59.3" cy="5.6" r="4.00" fill="#1e8a58"/><circle cx="59.3" cy="5.6" r="1.44" fill="#2d3f88"/><circle cx="55.3" cy="63.0" r="2.72" fill="#1e8a58"/><circle cx="54.0" cy="59.2" r="2.72" fill="#1e8a58"/><circle cx="55.8" cy="55.6" r="2.72" fill="#1e8a58"/><circle cx="59.7" cy="54.3" r="2.72" fill="#1e8a58"/><circle cx="63.3" cy="56.1" r="2.72" fill="#1e8a58"/><circle cx="64.5" cy="60.0" r="2.72" fill="#1e8a58"/><circle cx="62.7" cy="63.6" r="2.72" fill="#1e8a58"/><circle cx="58.9" cy="64.8" r="2.72" fill="#1e8a58"/><circle cx="59.3" cy="59.6" r="4.00" fill="#1e8a58"/><circle cx="59.3" cy="59.6" r="1.44" fill="#2d3f88"/><circle cx="-6.4" cy="22.4" r="2.72" fill="#1e8a58"/><circle cx="-10.1" cy="20.7" r="2.72" fill="#1e8a58"/><circle cx="-11.5" cy="16.9" r="2.72" fill="#1e8a58"/><circle cx="-9.9" cy="13.2" r="2.72" fill="#1e8a58"/><circle cx="-6.1" cy="11.8" r="2.72" fill="#1e8a58"/><circle cx="-2.4" cy="13.4" r="2.72" fill="#1e8a58"/><circle cx="-1.0" cy="17.2" r="2.72" fill="#1e8a58"/><circle cx="-2.6" cy="20.9" r="2.72" fill="#1e8a58"/><circle cx="-6.2" cy="17.1" r="4.00" fill="#1e8a58"/><circle cx="-6.2" cy="17.1" r="1.44" fill="#2d3f88"/><circle cx="47.6" cy="22.4" r="2.72" fill="#1e8a58"/><circle cx="43.9" cy="20.7" r="2.72" fill="#1e8a58"/><circle cx="42.5" cy="16.9" r="2.72" fill="#1e8a58"/><circle cx="44.1" cy="13.2" r="2.72" fill="#1e8a58"/><circle cx="47.9" cy="11.8" r="2.72" fill="#1e8a58"/><circle cx="51.6" cy="13.4" r="2.72" fill="#1e8a58"/><circle cx="53.0" cy="17.2" r="2.72" fill="#1e8a58"/><circle cx="51.4" cy="20.9" r="2.72" fill="#1e8a58"/><circle cx="47.8" cy="17.1" r="4.00" fill="#1e8a58"/><circle cx="47.8" cy="17.1" r="1.44" fill="#2d3f88"/><circle cx="32.1" cy="37.6" r="2.21" fill="#2d3f88"/><circle cx="32.1" cy="40.9" r="2.21" fill="#2d3f88"/><circle cx="29.7" cy="43.2" r="2.21" fill="#2d3f88"/><circle cx="26.4" cy="43.1" r="2.21" fill="#2d3f88"/><circle cx="24.1" cy="40.8" r="2.21" fill="#2d3f88"/><circle cx="24.2" cy="37.5" r="2.21" fill="#2d3f88"/><circle cx="26.5" cy="35.2" r="2.21" fill="#2d3f88"/><circle cx="29.8" cy="35.2" r="2.21" fill="#2d3f88"/><circle cx="28.1" cy="39.2" r="3.25" fill="#2d3f88"/><circle cx="28.1" cy="39.2" r="1.17" fill="#f3efe0"/><circle cx="-0.8" cy="-6.9" r="2.21" fill="#2d3f88"/><circle cx="0.6" cy="-9.8" r="2.21" fill="#2d3f88"/><circle cx="3.8" cy="-10.8" r="2.21" fill="#2d3f88"/><circle cx="6.7" cy="-9.4" r="2.21" fill="#2d3f88"/><circle cx="7.7" cy="-6.3" r="2.21" fill="#2d3f88"/><circle cx="6.3" cy="-3.3" r="2.21" fill="#2d3f88"/><circle cx="3.2" cy="-2.3" r="2.21" fill="#2d3f88"/><circle cx="0.2" cy="-3.8" r="2.21" fill="#2d3f88"/><circle cx="3.5" cy="-6.6" r="3.25" fill="#2d3f88"/><circle cx="3.5" cy="-6.6" r="1.17" fill="#f3efe0"/><circle cx="-0.8" cy="47.1" r="2.21" fill="#2d3f88"/><circle cx="0.6" cy="44.2" r="2.21" fill="#2d3f88"/><circle cx="3.8" cy="43.2" r="2.21" fill="#2d3f88"/><circle cx="6.7" cy="44.6" r="2.21" fill="#2d3f88"/><circle cx="7.7" cy="47.7" r="2.21" fill="#2d3f88"/><circle cx="6.3" cy="50.7" r="2.21" fill="#2d3f88"/><circle cx="3.2" cy="51.7" r="2.21" fill="#2d3f88"/><circle cx="0.2" cy="50.2" r="2.21" fill="#2d3f88"/><circle cx="3.5" cy="47.4" r="3.25" fill="#2d3f88"/><circle cx="3.5" cy="47.4" r="1.17" fill="#f3efe0"/><circle cx="53.2" cy="-6.9" r="2.21" fill="#2d3f88"/><circle cx="54.6" cy="-9.8" r="2.21" fill="#2d3f88"/><circle cx="57.8" cy="-10.8" r="2.21" fill="#2d3f88"/><circle cx="60.7" cy="-9.4" r="2.21" fill="#2d3f88"/><circle cx="61.7" cy="-6.3" r="2.21" fill="#2d3f88"/><circle cx="60.3" cy="-3.3" r="2.21" fill="#2d3f88"/><circle cx="57.2" cy="-2.3" r="2.21" fill="#2d3f88"/><circle cx="54.2" cy="-3.8" r="2.21" fill="#2d3f88"/><circle cx="57.5" cy="-6.6" r="3.25" fill="#2d3f88"/><circle cx="57.5" cy="-6.6" r="1.17" fill="#f3efe0"/><circle cx="53.2" cy="47.1" r="2.21" fill="#2d3f88"/><circle cx="54.6" cy="44.2" r="2.21" fill="#2d3f88"/><circle cx="57.8" cy="43.2" r="2.21" fill="#2d3f88"/><circle cx="60.7" cy="44.6" r="2.21" fill="#2d3f88"/><circle cx="61.7" cy="47.7" r="2.21" fill="#2d3f88"/><circle cx="60.3" cy="50.7" r="2.21" fill="#2d3f88"/><circle cx="57.2" cy="51.7" r="2.21" fill="#2d3f88"/><circle cx="54.2" cy="50.2" r="2.21" fill="#2d3f88"/><circle cx="57.5" cy="47.4" r="3.25" fill="#2d3f88"/><circle cx="57.5" cy="47.4" r="1.17" fill="#f3efe0"/><circle cx="18.8" cy="49.6" r="1.29" fill="#d9602b"/><circle cx="17.3" cy="50.9" r="1.29" fill="#d9602b"/><circle cx="15.4" cy="50.7" r="1.29" fill="#d9602b"/><circle cx="14.2" cy="49.3" r="1.29" fill="#d9602b"/><circle cx="14.3" cy="47.3" r="1.29" fill="#d9602b"/><circle cx="15.8" cy="46.1" r="1.29" fill="#d9602b"/><circle cx="17.7" cy="46.2" r="1.29" fill="#d9602b"/><circle cx="18.9" cy="47.7" r="1.29" fill="#d9602b"/><circle cx="16.6" cy="48.5" r="1.90" fill="#d9602b"/><circle cx="16.6" cy="48.5" r="1.29" fill="#e8a03a"/><circle cx="16.6" cy="48.5" r="0.68" fill="#f3efe0"/><circle cx="36.9" cy="-1.2" r="1.29" fill="#d9602b"/><circle cx="35.1" cy="-1.9" r="1.29" fill="#d9602b"/><circle cx="34.3" cy="-3.6" r="1.29" fill="#d9602b"/><circle cx="35.0" cy="-5.4" r="1.29" fill="#d9602b"/><circle cx="36.7" cy="-6.2" r="1.29" fill="#d9602b"/><circle cx="38.5" cy="-5.5" r="1.29" fill="#d9602b"/><circle cx="39.3" cy="-3.8" r="1.29" fill="#d9602b"/><circle cx="38.6" cy="-2.0" r="1.29" fill="#d9602b"/><circle cx="36.8" cy="-3.7" r="1.90" fill="#d9602b"/><circle cx="36.8" cy="-3.7" r="1.29" fill="#e8a03a"/><circle cx="36.8" cy="-3.7" r="0.68" fill="#f3efe0"/><circle cx="36.9" cy="52.8" r="1.29" fill="#d9602b"/><circle cx="35.1" cy="52.1" r="1.29" fill="#d9602b"/><circle cx="34.3" cy="50.4" r="1.29" fill="#d9602b"/><circle cx="35.0" cy="48.6" r="1.29" fill="#d9602b"/><circle cx="36.7" cy="47.8" r="1.29" fill="#d9602b"/><circle cx="38.5" cy="48.5" r="1.29" fill="#d9602b"/><circle cx="39.3" cy="50.2" r="1.29" fill="#d9602b"/><circle cx="38.6" cy="52.0" r="1.29" fill="#d9602b"/><circle cx="36.8" cy="50.3" r="1.90" fill="#d9602b"/><circle cx="36.8" cy="50.3" r="1.29" fill="#e8a03a"/><circle cx="36.8" cy="50.3" r="0.68" fill="#f3efe0"/><circle cx="14.4" cy="27.9" r="1.29" fill="#d9602b"/><circle cx="15.2" cy="26.1" r="1.29" fill="#d9602b"/><circle cx="17.0" cy="25.5" r="1.29" fill="#d9602b"/><circle cx="18.7" cy="26.4" r="1.29" fill="#d9602b"/><circle cx="19.4" cy="28.2" r="1.29" fill="#d9602b"/><circle cx="18.5" cy="29.9" r="1.29" fill="#d9602b"/><circle cx="16.7" cy="30.5" r="1.29" fill="#d9602b"/><circle cx="15.0" cy="29.7" r="1.29" fill="#d9602b"/><circle cx="16.9" cy="28.0" r="1.90" fill="#d9602b"/><circle cx="16.9" cy="28.0" r="1.29" fill="#e8a03a"/><circle cx="16.9" cy="28.0" r="0.68" fill="#f3efe0"/><circle cx="36.0" cy="12.4" r="1.29" fill="#d9602b"/><circle cx="37.8" cy="13.1" r="1.29" fill="#d9602b"/><circle cx="38.7" cy="14.8" r="1.29" fill="#d9602b"/><circle cx="38.0" cy="16.6" r="1.29" fill="#d9602b"/><circle cx="36.2" cy="17.4" r="1.29" fill="#d9602b"/><circle cx="34.4" cy="16.8" r="1.29" fill="#d9602b"/><circle cx="33.6" cy="15.0" r="1.29" fill="#d9602b"/><circle cx="34.3" cy="13.2" r="1.29" fill="#d9602b"/><circle cx="36.1" cy="14.9" r="1.90" fill="#d9602b"/><circle cx="36.1" cy="14.9" r="1.29" fill="#e8a03a"/><circle cx="36.1" cy="14.9" r="0.68" fill="#f3efe0"/><circle cx="24.8" cy="7.1" r="1.22" fill="#e89ad2"/><circle cx="25.3" cy="5.4" r="1.22" fill="#e89ad2"/><circle cx="26.8" cy="4.4" r="1.22" fill="#e89ad2"/><circle cx="28.6" cy="4.9" r="1.22" fill="#e89ad2"/><circle cx="29.5" cy="6.5" r="1.22" fill="#e89ad2"/><circle cx="29.1" cy="8.2" r="1.22" fill="#e89ad2"/><circle cx="27.5" cy="9.1" r="1.22" fill="#e89ad2"/><circle cx="25.7" cy="8.7" r="1.22" fill="#e89ad2"/><circle cx="27.2" cy="6.8" r="1.80" fill="#e89ad2"/><circle cx="27.2" cy="6.8" r="0.65" fill="#d9602b"/><circle cx="29.9" cy="23.4" r="1.22" fill="#e89ad2"/><circle cx="31.2" cy="24.7" r="1.22" fill="#e89ad2"/><circle cx="31.2" cy="26.5" r="1.22" fill="#e89ad2"/><circle cx="29.9" cy="27.8" r="1.22" fill="#e89ad2"/><circle cx="28.1" cy="27.8" r="1.22" fill="#e89ad2"/><circle cx="26.8" cy="26.6" r="1.22" fill="#e89ad2"/><circle cx="26.8" cy="24.8" r="1.22" fill="#e89ad2"/><circle cx="28.1" cy="23.5" r="1.22" fill="#e89ad2"/><circle cx="29.0" cy="25.6" r="1.80" fill="#e89ad2"/><circle cx="29.0" cy="25.6" r="0.65" fill="#d9602b"/><circle cx="14.9" cy="16.4" r="1.22" fill="#e89ad2"/><circle cx="14.4" cy="14.6" r="1.22" fill="#e89ad2"/><circle cx="15.3" cy="13.0" r="1.22" fill="#e89ad2"/><circle cx="17.1" cy="12.5" r="1.22" fill="#e89ad2"/><circle cx="18.6" cy="13.4" r="1.22" fill="#e89ad2"/><circle cx="19.2" cy="15.1" r="1.22" fill="#e89ad2"/><circle cx="18.3" cy="16.7" r="1.22" fill="#e89ad2"/><circle cx="16.5" cy="17.3" r="1.22" fill="#e89ad2"/><circle cx="16.8" cy="14.9" r="1.80" fill="#e89ad2"/><circle cx="16.8" cy="14.9" r="0.65" fill="#d9602b"/><circle cx="37.4" cy="38.6" r="1.22" fill="#e89ad2"/><circle cx="37.3" cy="36.7" r="1.22" fill="#e89ad2"/><circle cx="38.6" cy="35.4" r="1.22" fill="#e89ad2"/><circle cx="40.4" cy="35.3" r="1.22" fill="#e89ad2"/><circle cx="41.7" cy="36.5" r="1.22" fill="#e89ad2"/><circle cx="41.8" cy="38.4" r="1.22" fill="#e89ad2"/><circle cx="40.6" cy="39.7" r="1.22" fill="#e89ad2"/><circle cx="38.8" cy="39.8" r="1.22" fill="#e89ad2"/><circle cx="39.6" cy="37.6" r="1.80" fill="#e89ad2"/><circle cx="39.6" cy="37.6" r="0.65" fill="#d9602b"/><circle cx="39.2" cy="28.6" r="1.22" fill="#e89ad2"/><circle cx="38.4" cy="30.3" r="1.22" fill="#e89ad2"/><circle cx="36.7" cy="30.9" r="1.22" fill="#e89ad2"/><circle cx="35.0" cy="30.2" r="1.22" fill="#e89ad2"/><circle cx="34.4" cy="28.5" r="1.22" fill="#e89ad2"/><circle cx="35.2" cy="26.8" r="1.22" fill="#e89ad2"/><circle cx="36.9" cy="26.2" r="1.22" fill="#e89ad2"/><circle cx="38.5" cy="26.9" r="1.22" fill="#e89ad2"/><circle cx="36.8" cy="28.5" r="1.80" fill="#e89ad2"/><circle cx="36.8" cy="28.5" r="0.65" fill="#d9602b"/><circle cx="-7.8" cy="6.0" r="1.56" fill="#a9cfc8"/><circle cx="-7.2" cy="3.7" r="1.56" fill="#a9cfc8"/><circle cx="-5.2" cy="2.6" r="1.56" fill="#a9cfc8"/><circle cx="-2.9" cy="3.2" r="1.56" fill="#a9cfc8"/><circle cx="-1.8" cy="5.2" r="1.56" fill="#a9cfc8"/><circle cx="-2.4" cy="7.5" r="1.56" fill="#a9cfc8"/><circle cx="-4.4" cy="8.6" r="1.56" fill="#a9cfc8"/><circle cx="-6.7" cy="8.0" r="1.56" fill="#a9cfc8"/><circle cx="-4.8" cy="5.6" r="2.30" fill="#a9cfc8"/><circle cx="-4.8" cy="5.6" r="0.83" fill="#d9602b"/><circle cx="46.2" cy="6.0" r="1.56" fill="#a9cfc8"/><circle cx="46.8" cy="3.7" r="1.56" fill="#a9cfc8"/><circle cx="48.8" cy="2.6" r="1.56" fill="#a9cfc8"/><circle cx="51.1" cy="3.2" r="1.56" fill="#a9cfc8"/><circle cx="52.2" cy="5.2" r="1.56" fill="#a9cfc8"/><circle cx="51.6" cy="7.5" r="1.56" fill="#a9cfc8"/><circle cx="49.6" cy="8.6" r="1.56" fill="#a9cfc8"/><circle cx="47.3" cy="8.0" r="1.56" fill="#a9cfc8"/><circle cx="49.2" cy="5.6" r="2.30" fill="#a9cfc8"/><circle cx="49.2" cy="5.6" r="0.83" fill="#d9602b"/><circle cx="38.1" cy="7.2" r="1.56" fill="#a9cfc8"/><circle cx="36.5" cy="5.5" r="1.56" fill="#a9cfc8"/><circle cx="36.5" cy="3.2" r="1.56" fill="#a9cfc8"/><circle cx="38.1" cy="1.6" r="1.56" fill="#a9cfc8"/><circle cx="40.4" cy="1.6" r="1.56" fill="#a9cfc8"/><circle cx="42.1" cy="3.2" r="1.56" fill="#a9cfc8"/><circle cx="42.1" cy="5.5" r="1.56" fill="#a9cfc8"/><circle cx="40.5" cy="7.2" r="1.56" fill="#a9cfc8"/><circle cx="39.3" cy="4.4" r="2.30" fill="#a9cfc8"/><circle cx="39.3" cy="4.4" r="0.83" fill="#d9602b"/><circle cx="38.1" cy="61.2" r="1.56" fill="#a9cfc8"/><circle cx="36.5" cy="59.5" r="1.56" fill="#a9cfc8"/><circle cx="36.5" cy="57.2" r="1.56" fill="#a9cfc8"/><circle cx="38.1" cy="55.6" r="1.56" fill="#a9cfc8"/><circle cx="40.4" cy="55.6" r="1.56" fill="#a9cfc8"/><circle cx="42.1" cy="57.2" r="1.56" fill="#a9cfc8"/><circle cx="42.1" cy="59.5" r="1.56" fill="#a9cfc8"/><circle cx="40.5" cy="61.2" r="1.56" fill="#a9cfc8"/><circle cx="39.3" cy="58.4" r="2.30" fill="#a9cfc8"/><circle cx="39.3" cy="58.4" r="0.83" fill="#d9602b"/><circle cx="30.3" cy="44.7" r="1.56" fill="#a9cfc8"/><circle cx="31.8" cy="46.5" r="1.56" fill="#a9cfc8"/><circle cx="31.6" cy="48.8" r="1.56" fill="#a9cfc8"/><circle cx="29.8" cy="50.3" r="1.56" fill="#a9cfc8"/><circle cx="27.5" cy="50.1" r="1.56" fill="#a9cfc8"/><circle cx="26.0" cy="48.3" r="1.56" fill="#a9cfc8"/><circle cx="26.2" cy="46.0" r="1.56" fill="#a9cfc8"/><circle cx="28.0" cy="44.5" r="1.56" fill="#a9cfc8"/><circle cx="28.9" cy="47.4" r="2.30" fill="#a9cfc8"/><circle cx="28.9" cy="47.4" r="0.83" fill="#d9602b"/><circle cx="8.4" cy="41.7" r="1.56" fill="#a9cfc8"/><circle cx="6.3" cy="42.7" r="1.56" fill="#a9cfc8"/><circle cx="4.1" cy="41.9" r="1.56" fill="#a9cfc8"/><circle cx="3.2" cy="39.8" r="1.56" fill="#a9cfc8"/><circle cx="4.0" cy="37.6" r="1.56" fill="#a9cfc8"/><circle cx="6.1" cy="36.7" r="1.56" fill="#a9cfc8"/><circle cx="8.2" cy="37.5" r="1.56" fill="#a9cfc8"/><circle cx="9.2" cy="39.6" r="1.56" fill="#a9cfc8"/><circle cx="6.2" cy="39.7" r="2.30" fill="#a9cfc8"/><circle cx="6.2" cy="39.7" r="0.83" fill="#d9602b"/><circle cx="17.4" cy="6.0" r="1.43" fill="#1e8a58"/><circle cx="15.7" cy="7.2" r="1.43" fill="#1e8a58"/><circle cx="13.6" cy="7.0" r="1.43" fill="#1e8a58"/><circle cx="12.3" cy="5.3" r="1.43" fill="#1e8a58"/><circle cx="12.6" cy="3.2" r="1.43" fill="#1e8a58"/><circle cx="14.3" cy="1.9" r="1.43" fill="#1e8a58"/><circle cx="16.4" cy="2.2" r="1.43" fill="#1e8a58"/><circle cx="17.6" cy="3.9" r="1.43" fill="#1e8a58"/><circle cx="15.0" cy="4.6" r="2.10" fill="#1e8a58"/><circle cx="15.0" cy="4.6" r="0.76" fill="#a9cfc8"/><circle cx="17.4" cy="60.0" r="1.43" fill="#1e8a58"/><circle cx="15.7" cy="61.2" r="1.43" fill="#1e8a58"/><circle cx="13.6" cy="61.0" r="1.43" fill="#1e8a58"/><circle cx="12.3" cy="59.3" r="1.43" fill="#1e8a58"/><circle cx="12.6" cy="57.2" r="1.43" fill="#1e8a58"/><circle cx="14.3" cy="55.9" r="1.43" fill="#1e8a58"/><circle cx="16.4" cy="56.2" r="1.43" fill="#1e8a58"/><circle cx="17.6" cy="57.9" r="1.43" fill="#1e8a58"/><circle cx="15.0" cy="58.6" r="2.10" fill="#1e8a58"/><circle cx="15.0" cy="58.6" r="0.76" fill="#a9cfc8"/><circle cx="17.4" cy="38.1" r="1.43" fill="#1e8a58"/><circle cx="18.0" cy="40.2" r="1.43" fill="#1e8a58"/><circle cx="17.0" cy="42.0" r="1.43" fill="#1e8a58"/><circle cx="15.0" cy="42.7" r="1.43" fill="#1e8a58"/><circle cx="13.1" cy="41.7" r="1.43" fill="#1e8a58"/><circle cx="12.5" cy="39.6" r="1.43" fill="#1e8a58"/><circle cx="13.5" cy="37.8" r="1.43" fill="#1e8a58"/><circle cx="15.5" cy="37.1" r="1.43" fill="#1e8a58"/><circle cx="15.2" cy="39.9" r="2.10" fill="#1e8a58"/><circle cx="15.2" cy="39.9" r="0.76" fill="#a9cfc8"/><circle cx="6.8" cy="28.1" r="1.43" fill="#1e8a58"/><circle cx="5.8" cy="30.0" r="1.43" fill="#1e8a58"/><circle cx="3.8" cy="30.6" r="1.43" fill="#1e8a58"/><circle cx="1.9" cy="29.6" r="1.43" fill="#1e8a58"/><circle cx="1.3" cy="27.6" r="1.43" fill="#1e8a58"/><circle cx="2.3" cy="25.7" r="1.43" fill="#1e8a58"/><circle cx="4.3" cy="25.1" r="1.43" fill="#1e8a58"/><circle cx="6.2" cy="26.1" r="1.43" fill="#1e8a58"/><circle cx="4.0" cy="27.9" r="2.10" fill="#1e8a58"/><circle cx="4.0" cy="27.9" r="0.76" fill="#a9cfc8"/><circle cx="60.8" cy="28.1" r="1.43" fill="#1e8a58"/><circle cx="59.8" cy="30.0" r="1.43" fill="#1e8a58"/><circle cx="57.8" cy="30.6" r="1.43" fill="#1e8a58"/><circle cx="55.9" cy="29.6" r="1.43" fill="#1e8a58"/><circle cx="55.3" cy="27.6" r="1.43" fill="#1e8a58"/><circle cx="56.3" cy="25.7" r="1.43" fill="#1e8a58"/><circle cx="58.3" cy="25.1" r="1.43" fill="#1e8a58"/><circle cx="60.2" cy="26.1" r="1.43" fill="#1e8a58"/><circle cx="58.0" cy="27.9" r="2.10" fill="#1e8a58"/><circle cx="58.0" cy="27.9" r="0.76" fill="#a9cfc8"/><circle cx="-6.3" cy="27.6" r="1.43" fill="#1e8a58"/><circle cx="-7.6" cy="26.0" r="1.43" fill="#1e8a58"/><circle cx="-7.4" cy="23.9" r="1.43" fill="#1e8a58"/><circle cx="-5.8" cy="22.5" r="1.43" fill="#1e8a58"/><circle cx="-3.7" cy="22.7" r="1.43" fill="#1e8a58"/><circle cx="-2.3" cy="24.3" r="1.43" fill="#1e8a58"/><circle cx="-2.5" cy="26.4" r="1.43" fill="#1e8a58"/><circle cx="-4.2" cy="27.8" r="1.43" fill="#1e8a58"/><circle cx="-5.0" cy="25.1" r="2.10" fill="#1e8a58"/><circle cx="-5.0" cy="25.1" r="0.76" fill="#a9cfc8"/><circle cx="47.7" cy="27.6" r="1.43" fill="#1e8a58"/><circle cx="46.4" cy="26.0" r="1.43" fill="#1e8a58"/><circle cx="46.6" cy="23.9" r="1.43" fill="#1e8a58"/><circle cx="48.2" cy="22.5" r="1.43" fill="#1e8a58"/><circle cx="50.3" cy="22.7" r="1.43" fill="#1e8a58"/><circle cx="51.7" cy="24.3" r="1.43" fill="#1e8a58"/><circle cx="51.5" cy="26.4" r="1.43" fill="#1e8a58"/><circle cx="49.8" cy="27.8" r="1.43" fill="#1e8a58"/><circle cx="49.0" cy="25.1" r="2.10" fill="#1e8a58"/><circle cx="49.0" cy="25.1" r="0.76" fill="#a9cfc8"/><circle cx="6.7" cy="13.2" r="1.43" fill="#1e8a58"/><circle cx="7.5" cy="15.2" r="1.43" fill="#1e8a58"/><circle cx="6.6" cy="17.1" r="1.43" fill="#1e8a58"/><circle cx="4.6" cy="17.9" r="1.43" fill="#1e8a58"/><circle cx="2.7" cy="17.0" r="1.43" fill="#1e8a58"/><circle cx="1.9" cy="15.0" r="1.43" fill="#1e8a58"/><circle cx="2.8" cy="13.1" r="1.43" fill="#1e8a58"/><circle cx="4.7" cy="12.3" r="1.43" fill="#1e8a58"/><circle cx="4.7" cy="15.1" r="2.10" fill="#1e8a58"/><circle cx="4.7" cy="15.1" r="0.76" fill="#a9cfc8"/><circle cx="60.7" cy="13.2" r="1.43" fill="#1e8a58"/><circle cx="61.5" cy="15.2" r="1.43" fill="#1e8a58"/><circle cx="60.6" cy="17.1" r="1.43" fill="#1e8a58"/><circle cx="58.6" cy="17.9" r="1.43" fill="#1e8a58"/><circle cx="56.7" cy="17.0" r="1.43" fill="#1e8a58"/><circle cx="55.9" cy="15.0" r="1.43" fill="#1e8a58"/><circle cx="56.8" cy="13.1" r="1.43" fill="#1e8a58"/><circle cx="58.7" cy="12.3" r="1.43" fill="#1e8a58"/><circle cx="58.7" cy="15.1" r="2.10" fill="#1e8a58"/><circle cx="58.7" cy="15.1" r="0.76" fill="#a9cfc8"/><circle cx="24.4" cy="18.4" r="0.88" fill="#2d3f88"/><circle cx="24.2" cy="17.1" r="0.88" fill="#2d3f88"/><circle cx="25.0" cy="16.0" r="0.88" fill="#2d3f88"/><circle cx="26.2" cy="15.8" r="0.88" fill="#2d3f88"/><circle cx="27.3" cy="16.5" r="0.88" fill="#2d3f88"/><circle cx="27.5" cy="17.8" r="0.88" fill="#2d3f88"/><circle cx="26.8" cy="18.9" r="0.88" fill="#2d3f88"/><circle cx="25.5" cy="19.1" r="0.88" fill="#2d3f88"/><circle cx="25.9" cy="17.5" r="1.30" fill="#2d3f88"/><circle cx="25.9" cy="17.5" r="0.47" fill="#e89ad2"/></pattern></defs>
<path d="M421 274 Q432 290 446 314 L441 318 Q430 300 420.6 290 Z" stroke="#8a8a8a" stroke-width="0.3" fill="url(#bppat)" stroke-linejoin="round" stroke-linecap="round" />
<path d="M446 314 Q449 322 440 327 Q428 331 423 326 L420.8 315.5 Q424 322 430 322 Q438 321 441 318 Z" stroke="#33458a" stroke-width="0.3" fill="#33458a" stroke-linejoin="round" stroke-linecap="round" />
<path d="M355.7 227.5 L396.4 229 Q412 231 419 245 Q421 256 420.6 272 L422.8 310 Q423 322 420.6 326.4 Q414 332 403.2 335 L404 245 Q402 234 395 232.7 L347 232.7 Q350 228 355.7 227.5 Z" fill="url(#bppat)" stroke="#7d7d7d" stroke-width="0.5"/>
<path d="M355.7 227.5 L396.4 229 Q412 231 419 245 Q421 256 420.6 272 L422.8 310 Q423 322 420.6 326.4 Q414 332 403.2 335 L404 245 Q402 234 395 232.7 L347 232.7 Q350 228 355.7 227.5 Z" fill="#000" opacity="0.06"/>
<path d="M336 262 Q335.6 248 337.5 242 Q340 233.4 347 232.7 L395 232.7 Q402 234 404 245 L403.2 332.5 Q403 336 400 335.4 L341 327 Q335.6 326 335.3 319 Z" fill="url(#bppat)" stroke="#6e6e6e" stroke-width="0.6"/>
<defs><clipPath id="bpclip"><path d="M336 262 Q335.6 248 337.5 242 Q340 233.4 347 232.7 L395 232.7 Q402 234 404 245 L403.2 332.5 Q403 336 400 335.4 L341 327 Q335.6 326 335.3 319 Z"/><path d="M355.7 227.5 L396.4 229 Q412 231 419 245 Q421 256 420.6 272 L422.8 310 Q423 322 420.6 326.4 Q414 332 403.2 335 L404 245 Q402 234 395 232.7 L347 232.7 Q350 228 355.7 227.5 Z"/></clipPath></defs>
<g clip-path="url(#bpclip)"><circle cx="355.4" cy="301.7" r="2.92" fill="#2d3f88"/><circle cx="352.6" cy="305.0" r="2.92" fill="#2d3f88"/><circle cx="348.3" cy="305.4" r="2.92" fill="#2d3f88"/><circle cx="345.0" cy="302.6" r="2.92" fill="#2d3f88"/><circle cx="344.6" cy="298.3" r="2.92" fill="#2d3f88"/><circle cx="347.4" cy="295.0" r="2.92" fill="#2d3f88"/><circle cx="351.7" cy="294.6" r="2.92" fill="#2d3f88"/><circle cx="355.0" cy="297.4" r="2.92" fill="#2d3f88"/><circle cx="350.0" cy="300.0" r="4.30" fill="#2d3f88"/><circle cx="350.0" cy="300.0" r="1.55" fill="#a9cfc8"/><circle cx="391.6" cy="299.0" r="3.57" fill="#1e8a58"/><circle cx="388.2" cy="303.1" r="3.57" fill="#1e8a58"/><circle cx="383.0" cy="303.6" r="3.57" fill="#1e8a58"/><circle cx="378.9" cy="300.2" r="3.57" fill="#1e8a58"/><circle cx="378.4" cy="295.0" r="3.57" fill="#1e8a58"/><circle cx="381.8" cy="290.9" r="3.57" fill="#1e8a58"/><circle cx="387.0" cy="290.4" r="3.57" fill="#1e8a58"/><circle cx="391.1" cy="293.8" r="3.57" fill="#1e8a58"/><circle cx="385.0" cy="297.0" r="5.25" fill="#1e8a58"/><circle cx="385.0" cy="297.0" r="1.89" fill="#2d3f88"/><circle cx="351.4" cy="278.7" r="2.89" fill="#1e8a58"/><circle cx="348.6" cy="282.0" r="2.89" fill="#1e8a58"/><circle cx="344.3" cy="282.4" r="2.89" fill="#1e8a58"/><circle cx="341.0" cy="279.6" r="2.89" fill="#1e8a58"/><circle cx="340.6" cy="275.3" r="2.89" fill="#1e8a58"/><circle cx="343.4" cy="272.0" r="2.89" fill="#1e8a58"/><circle cx="347.7" cy="271.6" r="2.89" fill="#1e8a58"/><circle cx="351.0" cy="274.4" r="2.89" fill="#1e8a58"/><circle cx="346.0" cy="277.0" r="4.25" fill="#1e8a58"/><circle cx="346.0" cy="277.0" r="1.53" fill="#a9cfc8"/><circle cx="383.4" cy="265.4" r="2.38" fill="#a9cfc8"/><circle cx="381.2" cy="268.1" r="2.38" fill="#a9cfc8"/><circle cx="377.6" cy="268.4" r="2.38" fill="#a9cfc8"/><circle cx="374.9" cy="266.2" r="2.38" fill="#a9cfc8"/><circle cx="374.6" cy="262.6" r="2.38" fill="#a9cfc8"/><circle cx="376.8" cy="259.9" r="2.38" fill="#a9cfc8"/><circle cx="380.4" cy="259.6" r="2.38" fill="#a9cfc8"/><circle cx="383.1" cy="261.8" r="2.38" fill="#a9cfc8"/><circle cx="379.0" cy="264.0" r="3.50" fill="#a9cfc8"/><circle cx="379.0" cy="264.0" r="1.26" fill="#d9602b"/><circle cx="370.6" cy="262.8" r="1.43" fill="#d9602b"/><circle cx="369.3" cy="264.5" r="1.43" fill="#d9602b"/><circle cx="367.2" cy="264.6" r="1.43" fill="#d9602b"/><circle cx="365.5" cy="263.3" r="1.43" fill="#d9602b"/><circle cx="365.4" cy="261.2" r="1.43" fill="#d9602b"/><circle cx="366.7" cy="259.5" r="1.43" fill="#d9602b"/><circle cx="368.8" cy="259.4" r="1.43" fill="#d9602b"/><circle cx="370.5" cy="260.7" r="1.43" fill="#d9602b"/><circle cx="368.0" cy="262.0" r="2.10" fill="#d9602b"/><circle cx="368.0" cy="262.0" r="0.76" fill="#f4f0e2"/><circle cx="355.8" cy="249.9" r="1.50" fill="#2d3f88"/><circle cx="354.4" cy="251.6" r="1.50" fill="#2d3f88"/><circle cx="352.1" cy="251.8" r="1.50" fill="#2d3f88"/><circle cx="350.4" cy="250.4" r="1.50" fill="#2d3f88"/><circle cx="350.2" cy="248.1" r="1.50" fill="#2d3f88"/><circle cx="351.6" cy="246.4" r="1.50" fill="#2d3f88"/><circle cx="353.9" cy="246.2" r="1.50" fill="#2d3f88"/><circle cx="355.6" cy="247.6" r="1.50" fill="#2d3f88"/><circle cx="353.0" cy="249.0" r="2.20" fill="#2d3f88"/><circle cx="353.0" cy="249.0" r="0.79" fill="#e89ad2"/><circle cx="381.8" cy="311.9" r="1.50" fill="#d9602b"/><circle cx="380.4" cy="313.6" r="1.50" fill="#d9602b"/><circle cx="378.1" cy="313.8" r="1.50" fill="#d9602b"/><circle cx="376.4" cy="312.4" r="1.50" fill="#d9602b"/><circle cx="376.2" cy="310.1" r="1.50" fill="#d9602b"/><circle cx="377.6" cy="308.4" r="1.50" fill="#d9602b"/><circle cx="379.9" cy="308.2" r="1.50" fill="#d9602b"/><circle cx="381.6" cy="309.6" r="1.50" fill="#d9602b"/><circle cx="379.0" cy="311.0" r="2.20" fill="#d9602b"/><circle cx="379.0" cy="311.0" r="0.79" fill="#f4f0e2"/><circle cx="360.4" cy="321.9" r="1.50" fill="#e89ad2"/><circle cx="359.0" cy="323.6" r="1.50" fill="#e89ad2"/><circle cx="356.7" cy="323.8" r="1.50" fill="#e89ad2"/><circle cx="355.0" cy="322.4" r="1.50" fill="#e89ad2"/><circle cx="354.8" cy="320.1" r="1.50" fill="#e89ad2"/><circle cx="356.2" cy="318.4" r="1.50" fill="#e89ad2"/><circle cx="358.5" cy="318.2" r="1.50" fill="#e89ad2"/><circle cx="360.2" cy="319.6" r="1.50" fill="#e89ad2"/><circle cx="357.6" cy="321.0" r="2.20" fill="#e89ad2"/><circle cx="357.6" cy="321.0" r="0.79" fill="#d9602b"/><circle cx="403.2" cy="239.5" r="2.55" fill="#1e8a58"/><circle cx="400.8" cy="242.4" r="2.55" fill="#1e8a58"/><circle cx="397.0" cy="242.7" r="2.55" fill="#1e8a58"/><circle cx="394.1" cy="240.3" r="2.55" fill="#1e8a58"/><circle cx="393.8" cy="236.5" r="2.55" fill="#1e8a58"/><circle cx="396.2" cy="233.6" r="2.55" fill="#1e8a58"/><circle cx="400.0" cy="233.3" r="2.55" fill="#1e8a58"/><circle cx="402.9" cy="235.7" r="2.55" fill="#1e8a58"/><circle cx="398.5" cy="238.0" r="3.75" fill="#1e8a58"/><circle cx="398.5" cy="238.0" r="1.35" fill="#a9cfc8"/><circle cx="417.8" cy="279.9" r="1.50" fill="#d9602b"/><circle cx="416.4" cy="281.6" r="1.50" fill="#d9602b"/><circle cx="414.1" cy="281.8" r="1.50" fill="#d9602b"/><circle cx="412.4" cy="280.4" r="1.50" fill="#d9602b"/><circle cx="412.2" cy="278.1" r="1.50" fill="#d9602b"/><circle cx="413.6" cy="276.4" r="1.50" fill="#d9602b"/><circle cx="415.9" cy="276.2" r="1.50" fill="#d9602b"/><circle cx="417.6" cy="277.6" r="1.50" fill="#d9602b"/><circle cx="415.0" cy="279.0" r="2.20" fill="#d9602b"/><circle cx="415.0" cy="279.0" r="0.79" fill="#2d3f88"/><circle cx="415.2" cy="263.0" r="1.70" fill="#a9cfc8"/><circle cx="413.5" cy="264.9" r="1.70" fill="#a9cfc8"/><circle cx="411.0" cy="265.2" r="1.70" fill="#a9cfc8"/><circle cx="409.1" cy="263.5" r="1.70" fill="#a9cfc8"/><circle cx="408.8" cy="261.0" r="1.70" fill="#a9cfc8"/><circle cx="410.5" cy="259.1" r="1.70" fill="#a9cfc8"/><circle cx="413.0" cy="258.8" r="1.70" fill="#a9cfc8"/><circle cx="414.9" cy="260.5" r="1.70" fill="#a9cfc8"/><circle cx="412.0" cy="262.0" r="2.50" fill="#a9cfc8"/><circle cx="412.0" cy="262.0" r="0.90" fill="#e89ad2"/><circle cx="347.2" cy="241.0" r="1.70" fill="#e89ad2"/><circle cx="345.5" cy="242.9" r="1.70" fill="#e89ad2"/><circle cx="343.0" cy="243.2" r="1.70" fill="#e89ad2"/><circle cx="341.1" cy="241.5" r="1.70" fill="#e89ad2"/><circle cx="340.8" cy="239.0" r="1.70" fill="#e89ad2"/><circle cx="342.5" cy="237.1" r="1.70" fill="#e89ad2"/><circle cx="345.0" cy="236.8" r="1.70" fill="#e89ad2"/><circle cx="346.9" cy="238.5" r="1.70" fill="#e89ad2"/><circle cx="344.0" cy="240.0" r="2.50" fill="#e89ad2"/><circle cx="344.0" cy="240.0" r="0.90" fill="#d9602b"/><circle cx="395.8" cy="327.2" r="2.04" fill="#1e8a58"/><circle cx="393.8" cy="329.5" r="2.04" fill="#1e8a58"/><circle cx="390.8" cy="329.8" r="2.04" fill="#1e8a58"/><circle cx="388.5" cy="327.8" r="2.04" fill="#1e8a58"/><circle cx="388.2" cy="324.8" r="2.04" fill="#1e8a58"/><circle cx="390.2" cy="322.5" r="2.04" fill="#1e8a58"/><circle cx="393.2" cy="322.2" r="2.04" fill="#1e8a58"/><circle cx="395.5" cy="324.2" r="2.04" fill="#1e8a58"/><circle cx="392.0" cy="326.0" r="3.00" fill="#1e8a58"/><circle cx="392.0" cy="326.0" r="1.08" fill="#a9cfc8"/><circle cx="415.8" cy="306.2" r="2.04" fill="#1e8a58"/><circle cx="413.8" cy="308.5" r="2.04" fill="#1e8a58"/><circle cx="410.8" cy="308.8" r="2.04" fill="#1e8a58"/><circle cx="408.5" cy="306.8" r="2.04" fill="#1e8a58"/><circle cx="408.2" cy="303.8" r="2.04" fill="#1e8a58"/><circle cx="410.2" cy="301.5" r="2.04" fill="#1e8a58"/><circle cx="413.2" cy="301.2" r="2.04" fill="#1e8a58"/><circle cx="415.5" cy="303.2" r="2.04" fill="#1e8a58"/><circle cx="412.0" cy="305.0" r="3.00" fill="#1e8a58"/><circle cx="412.0" cy="305.0" r="1.08" fill="#2d3f88"/><circle cx="368.3" cy="283.7" r="1.22" fill="#e89ad2"/><circle cx="367.1" cy="285.1" r="1.22" fill="#e89ad2"/><circle cx="365.3" cy="285.3" r="1.22" fill="#e89ad2"/><circle cx="363.9" cy="284.1" r="1.22" fill="#e89ad2"/><circle cx="363.7" cy="282.3" r="1.22" fill="#e89ad2"/><circle cx="364.9" cy="280.9" r="1.22" fill="#e89ad2"/><circle cx="366.7" cy="280.7" r="1.22" fill="#e89ad2"/><circle cx="368.1" cy="281.9" r="1.22" fill="#e89ad2"/><circle cx="366.0" cy="283.0" r="1.80" fill="#e89ad2"/><circle cx="366.0" cy="283.0" r="0.65" fill="#2d3f88"/></g>
<path d="M344.3 277.4 L396.4 287 L396.6 330" stroke="#8c8c8c" stroke-width="0.5" fill="none" stroke-linejoin="round" stroke-linecap="round" />
<path d="M340 300 L396 307" stroke="#a0a0a0" stroke-width="0.4" fill="none" stroke-linejoin="round" stroke-linecap="round" />
<path d="M369 207.5 L369.2 228" stroke="#33458a" stroke-width="7" fill="none" stroke-linejoin="round" stroke-linecap="round" />
<path d="M349.2 247 C350 228 354 212 364 206.6 C370 203.2 385 203.2 391 206.6 C399 211 402.5 222 403.8 232" stroke="#33458a" stroke-width="4.4" fill="none" stroke-linejoin="round" stroke-linecap="round" />
<path d="M387.6 207.5 L387 251" stroke="#33458a" stroke-width="7.6" fill="none" stroke-linejoin="round" stroke-linecap="round" />
<rect x="383.2" y="250.6" width="7.6" height="4.8" rx="1.4" fill="#e89ad2"/>
<rect x="372" y="201.4" width="8" height="3.4" rx="1" fill="#f4f0e2" stroke="#8a8a8a" stroke-width="0.4"/>
<rect x="359.6" y="248" width="8.6" height="6.6" fill="#e89ad2" stroke="#c77ab2" stroke-width="0.4"/>
<path d="M181.2 137 Q178 118 188 105 Q199 95 212 102.5 Q222 110 221 125 L219 145 Q218.4 155 213.6 157" stroke="#b6b6b6" stroke-width="0.55" fill="none" stroke-linejoin="round" stroke-linecap="round" />
<path d="M184.6 129 Q184 112 195 105.5 Q207 101 214 111 Q218 120 217.4 131" stroke="#b6b6b6" stroke-width="0.55" fill="none" stroke-linejoin="round" stroke-linecap="round" />
<path d="M179 127.6 Q190 116.5 204 120 Q214 124 218.4 135" stroke="#b6b6b6" stroke-width="0.55" fill="none" stroke-linejoin="round" stroke-linecap="round" />
<path d="M186.5 112 Q200 111 214.5 120" stroke="#b6b6b6" stroke-width="0.55" fill="none" stroke-linejoin="round" stroke-linecap="round" />
<path d="M187 113.6 Q200 112.8 213.6 121.4" stroke="#b6b6b6" stroke-width="0.55" fill="none" stroke-linejoin="round" stroke-linecap="round" />
<path d="M175 128.2 L217.4 139.4 L216.8 142 L174.5 130.6 Z" stroke="#b6b6b6" stroke-width="0.55" fill="none" stroke-linejoin="round" stroke-linecap="round" />
<path d="M181.6 133 L181.2 146 Q181.6 149 186 150.4 L209.6 157.4 Q214 158.4 214.6 154 L215.6 142" stroke="#b6b6b6" stroke-width="0.55" fill="none" stroke-linejoin="round" stroke-linecap="round" />
<path d="M183.6 138.6 L213.4 146.6" stroke="#b6b6b6" stroke-width="0.55" fill="none" stroke-linejoin="round" stroke-linecap="round" />
<path d="M248 102.4 Q249 91.4 256.8 91.2 Q264.6 91.4 265.8 102.4" stroke="#b6b6b6" stroke-width="0.55" fill="none" stroke-linejoin="round" stroke-linecap="round" />
<path d="M249.8 102.6 Q250.6 93.2 256.8 93 Q263 93.2 264 102.6" stroke="#b6b6b6" stroke-width="0.55" fill="none" stroke-linejoin="round" stroke-linecap="round" />
<path d="M242.4 107 Q243 103 248 102.6 L268 102.6 Q275 104 277.5 113.6 L279.4 146 Q279.4 153 273 155.4 L250 152.4 Q243 151.6 242.4 146 L241.4 126 Z" stroke="#b6b6b6" stroke-width="0.55" fill="none" stroke-linejoin="round" stroke-linecap="round" />
<path d="M269.4 102.8 Q275.6 105 277.6 113 L279 131" stroke="#7a7a7a" stroke-width="0.7" fill="none" stroke-linejoin="round" stroke-linecap="round" />
<path d="M252.2 103 L238.2 152 L237.6 158.6 L241.8 159.4 L243 152.6 L256.4 103.6" stroke="#b6b6b6" stroke-width="0.55" fill="none" stroke-linejoin="round" stroke-linecap="round" />
<path d="M258 103.4 L258.4 150 L259 157 L263.2 156.6 L262.6 150 L262 103.4" stroke="#b6b6b6" stroke-width="0.55" fill="none" stroke-linejoin="round" stroke-linecap="round" />
<path d="M259.4 157 Q262 163.4 267.4 161.6 Q272.6 158 275.4 148.4" stroke="#b6b6b6" stroke-width="0.55" fill="none" stroke-linejoin="round" stroke-linecap="round" />
<path d="M262.8 155.6 Q264 160 267.4 158.4 Q271 155 273 147.4" stroke="#b6b6b6" stroke-width="0.55" fill="none" stroke-linejoin="round" stroke-linecap="round" />
<path d="M239.8 146.4 L244.4 147.4 M258.2 146.4 L262.8 146.4 M238.8 150.4 L243.4 151.4 M258.2 150.4 L262.8 150.4" stroke="#b6b6b6" stroke-width="0.55" fill="none" stroke-linejoin="round" stroke-linecap="round" />
<path d="M293.8 113 L327.8 113 L327.8 158.4 L293.8 158.4 Z" stroke="#b6b6b6" stroke-width="0.55" fill="none" stroke-linejoin="round" stroke-linecap="round" />
<path d="M302.4 121.6 Q305.6 92 310.6 90.4 Q315.6 92 318.4 121.6" stroke="#b6b6b6" stroke-width="0.55" fill="none" stroke-linejoin="round" stroke-linecap="round" />
<path d="M304.2 121.6 Q306.6 94.4 310.6 92.6 Q314.4 94.4 316.6 121.6" stroke="#b6b6b6" stroke-width="0.55" fill="none" stroke-linejoin="round" stroke-linecap="round" />
<path d="M302.4 118.6 L302.4 121.8 L304.2 121.8 L304.2 118.6 M316.6 118.6 L316.6 121.8 L318.4 121.8 L318.4 118.6" stroke="#b6b6b6" stroke-width="0.55" fill="none" stroke-linejoin="round" stroke-linecap="round" />
<path d="M110.4 172.9 Q140 176.6 175.3 177.2" stroke="#6e6e6e" stroke-width="0.7" fill="none" stroke-linejoin="round" stroke-linecap="round" />
<path d="M110.4 172.9 Q112 186 113 201 Q113.6 206.4 118 209 Q134 213.6 153 215.3 Q163 214.6 167.3 208.9 Q172 192 175.3 177.2" stroke="#b6b6b6" stroke-width="0.55" fill="none" stroke-linejoin="round" stroke-linecap="round" />
<path d="M125.6 173.6 L124.6 210 M131.3 174.4 L130.4 211.4 M146.5 176 L147.4 214 M151.3 176.4 L152.4 214.6" stroke="#b6b6b6" stroke-width="0.55" fill="none" stroke-linejoin="round" stroke-linecap="round" />
<path d="M127 173.4 Q131 151.4 140 150.4 Q148.4 151.6 152.6 175.6" stroke="#b6b6b6" stroke-width="0.55" fill="none" stroke-linejoin="round" stroke-linecap="round" />
<path d="M130.2 173.6 Q133 154.6 140 153.4 Q146 154.6 149.4 175.6" stroke="#b6b6b6" stroke-width="0.55" fill="none" stroke-linejoin="round" stroke-linecap="round" />
<path d="M131.4 176 L146.4 177.4" stroke="#555" stroke-width="0.8" fill="none" stroke-linejoin="round" stroke-linecap="round" />
<path d="M132.9 186.5 h6.4 v4 h-6.4 Z M135 186.5 v4 M137.2 186.5 v4" stroke="#8a8a8a" stroke-width="0.6" fill="none" stroke-linejoin="round" stroke-linecap="round" />
<path d="M112.8 178.5 Q111 184 113.4 188 L115.2 202.5 Q113 207 111.2 205.7 Q110.6 203 114 201.6" stroke="#b6b6b6" stroke-width="0.55" fill="none" stroke-linejoin="round" stroke-linecap="round" />
<path d="M170.5 183.3 Q173 186 171.6 191.3 L170 196" stroke="#b6b6b6" stroke-width="0.55" fill="none" stroke-linejoin="round" stroke-linecap="round" />
<path d="M152.9 211.3 L167.3 208" stroke="#b6b6b6" stroke-width="0.55" fill="none" stroke-linejoin="round" stroke-linecap="round" />
<path d="M194 212 Q196 190 237 185.6 Q278 190 280 212" stroke="#d2d2d2" stroke-width="0.5" fill="none" stroke-linejoin="round" stroke-linecap="round" />
<path d="M199 214 Q202 195 237 190.4 Q272 195 275 214" stroke="#d2d2d2" stroke-width="0.5" fill="none" stroke-linejoin="round" stroke-linecap="round" />
<path d="M217.6 198 Q226 190.6 237 191 Q248 190.6 258.6 198 L259.6 217 Q248 222 238 216 Q228 222 216.6 217 Z" stroke="#d2d2d2" stroke-width="0.5" fill="none" stroke-linejoin="round" stroke-linecap="round" />
<path d="M218 200 Q237 205 258 200" stroke="#d2d2d2" stroke-width="0.5" fill="none" stroke-linejoin="round" stroke-linecap="round" />
<path d="M194 210 Q186 214 183 226 Q172 280 168.6 330 L168 353.6 L192.4 359.4 L195.4 300 Q198 260 205 232" stroke="#d2d2d2" stroke-width="0.5" fill="none" stroke-linejoin="round" stroke-linecap="round" />
<path d="M280 210 Q288 214 291 226 Q302 280 305.4 330 L306 353.6 L281.6 359.4 L278.6 300 Q276 260 269 232" stroke="#d2d2d2" stroke-width="0.5" fill="none" stroke-linejoin="round" stroke-linecap="round" />
<path d="M167.4 357.4 L192 363.2 M306.6 357.4 L282 363.2 M168 353.6 L167.4 357.4 M192.4 359.4 L192 363.2 M306 353.6 L306.6 357.4 M281.6 359.4 L282 363.2" stroke="#d2d2d2" stroke-width="0.5" fill="none" stroke-linejoin="round" stroke-linecap="round" />
<path d="M205 232 Q204 270 201.4 298 L202.4 303 Q196 360 192.6 423 Q237 432 283 423 Q279 360 272.6 303 L273.6 298 Q271 270 269 232" stroke="#d2d2d2" stroke-width="0.5" fill="none" stroke-linejoin="round" stroke-linecap="round" />
<path d="M193 419 Q237 428 282.6 419" stroke="#d2d2d2" stroke-width="0.5" fill="none" stroke-linejoin="round" stroke-linecap="round" />
<path d="M201.4 298 Q237 301.6 273.6 298 M202.4 303 Q237 306.4 272.6 303" stroke="#d2d2d2" stroke-width="0.5" fill="none" stroke-linejoin="round" stroke-linecap="round" />
<path d="M237.4 197 L237.4 426 M239.6 197 L239.6 426" stroke="#d2d2d2" stroke-width="0.5" fill="none" stroke-linejoin="round" stroke-linecap="round" />
<path d="M225 303 Q224 330 226.4 386 M249.4 303 Q250 330 250.6 386" stroke="#d2d2d2" stroke-width="0.5" fill="none" stroke-linejoin="round" stroke-linecap="round" />
<path d="M225 330 l1.6 0 l0 4 l-1.6 0 Z M249.4 330 l1.6 0 l0 4 l-1.6 0 Z" stroke="#d2d2d2" stroke-width="0.5" fill="none" stroke-linejoin="round" stroke-linecap="round" />
<path d="M212 306 Q206 330 207 356 M264 306 Q270 330 269 356" stroke="#d2d2d2" stroke-width="0.5" fill="none" stroke-linejoin="round" stroke-linecap="round" />
<path d="M216 217 Q212 240 214 262 M260 217 Q264 240 262 262" stroke="#d2d2d2" stroke-width="0.5" fill="none" stroke-linejoin="round" stroke-linecap="round" />
<path d="M228 340 Q222 356 220 366 M218 306 Q220 330 219 350 M256 306 Q255 330 256 350" stroke="#d2d2d2" stroke-width="0.5" fill="none" stroke-linejoin="round" stroke-linecap="round" />
<path d="M62.7 235.6 H158 V295 H62.7 Z" stroke="#b0b0b0" stroke-width="0.5" fill="none" stroke-linejoin="round" stroke-linecap="round" />
<path d="M63.6 236.6 H157 V294 H63.6 Z" stroke="#b0b0b0" stroke-width="0.4" fill="none" stroke-linejoin="round" stroke-linecap="round" stroke-dasharray="1.1 0.5"/>
<path d="M62.7 259.7 Q72 272 110 274.8 Q148 272 158 259.7" stroke="#9a9a9a" stroke-width="0.6" fill="none" stroke-linejoin="round" stroke-linecap="round" />
<path d="M63 257.6 Q74 270 110 272.6 Q146 270 157.6 257.6" stroke="#b0b0b0" stroke-width="0.45" fill="none" stroke-linejoin="round" stroke-linecap="round" stroke-dasharray="1.1 0.5"/>
<text x="102.8" y="267.4" font-size="4.6" font-family="Liberation Serif,serif" font-style="italic" fill="#7a7a7a" textLength="18" lengthAdjust="spacingAndGlyphs">Cath Kidston</text>
<path d="M61.5 314 H158 V375.3 H61.5 Z" stroke="#b0b0b0" stroke-width="0.5" fill="none" stroke-linejoin="round" stroke-linecap="round" />
<path d="M62.6 315.2 H157 V374.2 H62.6 Z" stroke="#b0b0b0" stroke-width="0.45" fill="none" stroke-linejoin="round" stroke-linecap="round" stroke-dasharray="1.1 0.5"/>
<path d="M72.6 322 L150 326 L150 330 L72.6 326.4 Z" stroke="#a4a4a4" stroke-width="0.5" fill="none" stroke-linejoin="round" stroke-linecap="round" />
<path d="M74 324.2 L149 328" stroke="#9a9a9a" stroke-width="0.9" fill="none" stroke-linejoin="round" stroke-linecap="round" stroke-dasharray="0.5 0.5"/>
<path d="M70 321 q2 -1.6 3.6 0.4 q1 2 -1 3 q-2.6 0.4 -2.6 -3.4" stroke="#8c8c8c" stroke-width="0.6" fill="none" stroke-linejoin="round" stroke-linecap="round" />
<path d="M71 330 V370" stroke="#bcbcbc" stroke-width="1.6" fill="none" stroke-linejoin="round" stroke-linecap="round" stroke-dasharray="0.4 0.7"/>
<path d="M63 319.6 H157" stroke="#b0b0b0" stroke-width="0.4" fill="none" stroke-linejoin="round" stroke-linecap="round" stroke-dasharray="1.1 0.5"/>
<path d="M48.3 399 H148.6 V489.2 H48.3 Z" stroke="#b0b0b0" stroke-width="0.5" fill="none" stroke-linejoin="round" stroke-linecap="round" />
<path d="M49.3 400.2 H147.6 V488 H49.3 Z" stroke="#b0b0b0" stroke-width="0.45" fill="none" stroke-linejoin="round" stroke-linecap="round" stroke-dasharray="1.1 0.5"/>
<path d="M148.6 399 L176 401 Q188 404 189.6 430 Q190.4 460 186 476 Q182 486 172 487.4 L148.6 489.2" stroke="#b0b0b0" stroke-width="0.55" fill="none" stroke-linejoin="round" stroke-linecap="round" />
<path d="M148.6 400.6 L175.6 402.6 Q186.4 405 188 430 Q188.8 460 184.6 475 Q181 484.6 171.6 486 L148.6 487.6" stroke="#b0b0b0" stroke-width="0.4" fill="none" stroke-linejoin="round" stroke-linecap="round" stroke-dasharray="1.1 0.5"/>
<path d="M181.6 441 a2 2.4 0 1 0 0.01 0 Z" stroke="#9a9a9a" stroke-width="0.5" fill="none" stroke-linejoin="round" stroke-linecap="round" />
<path d="M48.3 405.6 H92.1 M105.1 405.6 H148.6" stroke="#b0b0b0" stroke-width="0.5" fill="none" stroke-linejoin="round" stroke-linecap="round" />
<path d="M49 406.8 H91.6 M105.6 406.8 H148" stroke="#b0b0b0" stroke-width="0.4" fill="none" stroke-linejoin="round" stroke-linecap="round" stroke-dasharray="1.1 0.5"/>
<path d="M48.3 412.1 H92.1 M105.1 412.1 H148.6" stroke="#b0b0b0" stroke-width="0.5" fill="none" stroke-linejoin="round" stroke-linecap="round" />
<path d="M49 413.3 H91.6 M105.6 413.3 H148" stroke="#b0b0b0" stroke-width="0.4" fill="none" stroke-linejoin="round" stroke-linecap="round" stroke-dasharray="1.1 0.5"/>
<path d="M48.3 418.7 H92.1 M105.1 418.7 H148.6" stroke="#b0b0b0" stroke-width="0.5" fill="none" stroke-linejoin="round" stroke-linecap="round" />
<path d="M49 419.9 H91.6 M105.6 419.9 H148" stroke="#b0b0b0" stroke-width="0.4" fill="none" stroke-linejoin="round" stroke-linecap="round" stroke-dasharray="1.1 0.5"/>
<path d="M48.3 425.2 H92.1 M105.1 425.2 H148.6" stroke="#b0b0b0" stroke-width="0.5" fill="none" stroke-linejoin="round" stroke-linecap="round" />
<path d="M49 426.4 H91.6 M105.6 426.4 H148" stroke="#b0b0b0" stroke-width="0.4" fill="none" stroke-linejoin="round" stroke-linecap="round" stroke-dasharray="1.1 0.5"/>
<path d="M48.3 431.7 H92.1 M105.1 431.7 H148.6" stroke="#b0b0b0" stroke-width="0.5" fill="none" stroke-linejoin="round" stroke-linecap="round" />
<path d="M49 432.9 H91.6 M105.6 432.9 H148" stroke="#b0b0b0" stroke-width="0.4" fill="none" stroke-linejoin="round" stroke-linecap="round" stroke-dasharray="1.1 0.5"/>
<path d="M48.3 438.2 H92.1 M105.1 438.2 H148.6" stroke="#b0b0b0" stroke-width="0.5" fill="none" stroke-linejoin="round" stroke-linecap="round" />
<path d="M49 439.4 H91.6 M105.6 439.4 H148" stroke="#b0b0b0" stroke-width="0.4" fill="none" stroke-linejoin="round" stroke-linecap="round" stroke-dasharray="1.1 0.5"/>
<path d="M48.3 443.6 H92.1 M105.1 443.6 H148.6" stroke="#b0b0b0" stroke-width="0.5" fill="none" stroke-linejoin="round" stroke-linecap="round" />
<path d="M49 444.8 H91.6 M105.6 444.8 H148" stroke="#b0b0b0" stroke-width="0.4" fill="none" stroke-linejoin="round" stroke-linecap="round" stroke-dasharray="1.1 0.5"/>
<path d="M92.1 405.6 V489.2 M105.1 405.6 V489.2" stroke="#b0b0b0" stroke-width="0.5" fill="none" stroke-linejoin="round" stroke-linecap="round" />
<path d="M91 406 V488 M106.2 406 V488 M50 444 V488 M147 444 V488" stroke="#b0b0b0" stroke-width="0.4" fill="none" stroke-linejoin="round" stroke-linecap="round" stroke-dasharray="1.1 0.5"/>
<path d="M293.5 190.7 H321.2 V233 H293.5 Z" stroke="#b6b6b6" stroke-width="0.55" fill="none" stroke-linejoin="round" stroke-linecap="round" />
<path d="M321.2 190.7 L328.8 190.7 L328.8 234.4 L321.2 233 M321.2 233 L325 226 L325 190.7 M325 226 L328.8 234.4" stroke="#b6b6b6" stroke-width="0.55" fill="none" stroke-linejoin="round" stroke-linecap="round" />
<path d="M299.4 198 Q303 172 308.4 169.4 Q313 172 317.6 198 M301 198 Q304 174 308.4 171.6 Q312 174 316 198" stroke="#b6b6b6" stroke-width="0.55" fill="none" stroke-linejoin="round" stroke-linecap="round" />
<path d="M297 190.7 Q302 174 308.6 168.6 M309.6 169 Q313 176 314.4 190.7" stroke="#b6b6b6" stroke-width="0.55" fill="none" stroke-linejoin="round" stroke-linecap="round" />
<path d="M299.4 195 v3 h1.6 v-3 M316 195 v3 h1.6 v-3" stroke="#b6b6b6" stroke-width="0.55" fill="none" stroke-linejoin="round" stroke-linecap="round" />
<path d="M343 96.5 H390.8 Q393 96.5 393 98.7 V119.6 Q393 121.8 390.8 121.8 H343 Q340.8 121.8 340.8 119.6 V98.7 Q340.8 96.5 343 96.5 Z" stroke="#8e8e8e" stroke-width="0.6" fill="none" stroke-linejoin="round" stroke-linecap="round" />
<path d="M342 98.4 H391.8" stroke="#8e8e8e" stroke-width="0.4" fill="none" stroke-linejoin="round" stroke-linecap="round" />
<path d="M341 118.4 L336.4 127 L337.6 127.6 L342 119.6" stroke="#8e8e8e" stroke-width="0.5" fill="none" stroke-linejoin="round" stroke-linecap="round" />
<text x="360.5" y="103.6" font-size="2.6" font-family="Liberation Serif,serif" font-style="italic" fill="#8a8a8a" textLength="12" lengthAdjust="spacingAndGlyphs">Cath Kidston</text>
<path d="M345.6 142 Q345.4 131.4 350.4 131 Q356 131.6 357.6 142.6 M347.4 142 Q347.4 133.2 350.6 133 Q354.6 133.4 355.8 142.6" stroke="#8e8e8e" stroke-width="0.5" fill="none" stroke-linejoin="round" stroke-linecap="round" />
<path d="M331 166 Q332 146 345 142.6 Q356 141 363 144.6 Q369.6 150 370 162 L372.6 190 Q372 193.6 368 193.8 L334 189.4 Q330.8 188.6 330.8 185 Z" stroke="#8e8e8e" stroke-width="0.6" fill="none" stroke-linejoin="round" stroke-linecap="round" />
<path d="M363 144.6 Q360 150 360 160 L359.4 192.6" stroke="#8e8e8e" stroke-width="0.5" fill="none" stroke-linejoin="round" stroke-linecap="round" />
<path d="M331 171 L359.6 174.4" stroke="#8e8e8e" stroke-width="0.5" fill="none" stroke-linejoin="round" stroke-linecap="round" />
<path d="M332.4 173.6 Q332 186 334.6 187.6 L357.6 190.4" stroke="#8e8e8e" stroke-width="0.4" fill="none" stroke-linejoin="round" stroke-linecap="round" />
<path d="M334 166 Q336 148 347 145.4 Q356 144.6 360.4 148" stroke="#8e8e8e" stroke-width="0.4" fill="none" stroke-linejoin="round" stroke-linecap="round" />
<rect x="342.4" y="150" width="6.6" height="4.8" fill="#e8e8e8" stroke="#6a6a6a" stroke-width="0.6"/><path d="M344.4 150 v4.8 M346.8 150 v4.8" stroke="#6a6a6a" stroke-width="0.4"/>
<path d="M371.6 172 L377 184 L378.4 190 L376 191 L374.4 186 L372 181" stroke="#8e8e8e" stroke-width="0.5" fill="none" stroke-linejoin="round" stroke-linecap="round" />
<path d="M376.4 191 Q379 195 377.6 197.6 L374.6 196 Q375.6 194 374.6 191.6" stroke="#8e8e8e" stroke-width="0.5" fill="none" stroke-linejoin="round" stroke-linecap="round" />
<path d="M414.4 95.4 H461 Q466 95.4 466 100.4 V119.6 Q466 124.6 461 124.6 H414.4 Q409.4 124.6 409.4 119.6 V100.4 Q409.4 95.4 414.4 95.4 Z" stroke="#b0b0b0" stroke-width="0.55" fill="none" stroke-linejoin="round" stroke-linecap="round" />
<path d="M412 98.6 Q437 96.6 463.6 98.6 M409.6 109.5 H432" stroke="#b0b0b0" stroke-width="0.45" fill="none" stroke-linejoin="round" stroke-linecap="round" />
<path d="M409.4 106 q-1.6 3 0 7 M466 108 q1.6 2.4 0 5" stroke="#b0b0b0" stroke-width="0.5" fill="none" stroke-linejoin="round" stroke-linecap="round" />
<g transform="translate(431 99.4) scale(1.05)" stroke="#8c8c8c" stroke-width="0.52" fill="none"><circle cx="9" cy="8" r="4.4"/><circle cx="9" cy="8" r="1.6"/><circle cx="3.4" cy="14" r="3.2"/><circle cx="16.6" cy="14.4" r="3.8"/><circle cx="10" cy="18" r="2.6"/><circle cx="21" cy="17.6" r="2.4"/><path d="M0 2 q2 -2 3.6 0 q1.6 2 3.4 0 q1.8 -2 3.6 0 q1.6 2 3.4 0 M2 20 q4 3 8 1 M13 22 q5 2 9 -1"/></g>
<path d="M413.2 164.2 L412.3 151 Q414 140 424.5 136.9 Q438 135.6 449 143.5 Q458 150 460.4 156.7 L461.3 170 Q460 177 452.8 177.5 Z" stroke="#b0b0b0" stroke-width="0.55" fill="none" stroke-linejoin="round" stroke-linecap="round" />
<path d="M414 152 Q420 141 432 141.4 Q448 144 459.4 160" stroke="#b0b0b0" stroke-width="0.45" fill="none" stroke-linejoin="round" stroke-linecap="round" />
<path d="M416 155 Q423 146 434 146.6 Q448 149.6 458.6 164" stroke="#b0b0b0" stroke-width="0.45" fill="none" stroke-linejoin="round" stroke-linecap="round" />
<path d="M421 135.6 Q438 132 452 142.6 Q460 150 462.4 158" stroke="#b0b0b0" stroke-width="0.4" fill="none" stroke-linejoin="round" stroke-linecap="round" />
<g transform="translate(425.5 157.6) scale(0.78)" stroke="#8c8c8c" stroke-width="0.71" fill="none"><circle cx="9" cy="8" r="4.4"/><circle cx="9" cy="8" r="1.6"/><circle cx="3.4" cy="14" r="3.2"/><circle cx="16.6" cy="14.4" r="3.8"/><circle cx="10" cy="18" r="2.6"/><circle cx="21" cy="17.6" r="2.4"/><path d="M0 2 q2 -2 3.6 0 q1.6 2 3.4 0 q1.8 -2 3.6 0 q1.6 2 3.4 0 M2 20 q4 3 8 1 M13 22 q5 2 9 -1"/></g>
<path d="M439.4 207 Q444 192 457.3 190.7 Q474 192 480.6 208.7 Q484 218 484.2 228.4" stroke="#d0d0d0" stroke-width="0.5" fill="none" stroke-linejoin="round" stroke-linecap="round" />
<path d="M441 211 Q447 198 458 197 Q472 198 478 212" stroke="#d0d0d0" stroke-width="0.5" fill="none" stroke-linejoin="round" stroke-linecap="round" />
<path d="M439.6 222 Q446 206 458.4 205 Q474 206 481.6 224" stroke="#d0d0d0" stroke-width="0.5" fill="none" stroke-linejoin="round" stroke-linecap="round" />
<path d="M441 226 Q448 212 459 211.4 Q472 212 479.6 227" stroke="#d0d0d0" stroke-width="0.5" fill="none" stroke-linejoin="round" stroke-linecap="round" />
<path d="M434 243 Q440 228.6 461 226.6 Q480 228 486 242.7 L486 260.6 Q482 270 471.7 271.4 L435.8 264.2 Z" stroke="#d0d0d0" stroke-width="0.55" fill="none" stroke-linejoin="round" stroke-linecap="round" />
<path d="M434 243 L470.6 250 Q480 250 486 242.7 M470.6 250 L471.7 271.4" stroke="#d0d0d0" stroke-width="0.5" fill="none" stroke-linejoin="round" stroke-linecap="round" />
<path d="M487 236 q1.6 4 0 8 M486.6 262 q1.4 3 0 6" stroke="#d0d0d0" stroke-width="0.5" fill="none" stroke-linejoin="round" stroke-linecap="round" />
<path d="M443 266 q3 2 6 0.6" stroke="#d0d0d0" stroke-width="0.5" fill="none" stroke-linejoin="round" stroke-linecap="round" />
<path d="M518.5 148 Q518.5 140.4 551.6 140.4 Q584.7 140.4 584.7 148 Q584.7 156 551.6 156 Q518.5 156 518.5 148 L518.5 157.4 Q518.5 165 551.6 165 Q584.7 165 584.7 157.4 L584.7 148" stroke="#c6c6c6" stroke-width="0.6" fill="none" stroke-linejoin="round" stroke-linecap="round" />
<path d="M526.1 139.4 L521.9 107.2 Q550 111 587.3 112.3 L581.3 142.8 Q576 150 566 150.5 Q545 150 532.9 147 Q527 144 526.1 139.4 Z" fill="#fff"/>
<path d="M521.9 107.2 Q550 111 587.3 112.3" stroke="#333" stroke-width="0.9" fill="none" stroke-linejoin="round" stroke-linecap="round" />
<path d="M521.9 107.2 L526.1 139.4 Q527 144 532.9 147 Q545 150 566 150.5 Q576 150 581.3 142.8 L587.3 112.3" stroke="#4c4c4c" stroke-width="0.6" fill="none" stroke-linejoin="round" stroke-linecap="round" />
<path d="M537.2 108.6 L536 147.4 M542.3 109.2 L541.4 148.4 M558.4 110.4 L559 150.2 M563.5 110.8 L564.4 150.4" stroke="#4c4c4c" stroke-width="0.6" fill="none" stroke-linejoin="round" stroke-linecap="round" />
<path d="M538.4 108.6 C541 98 544.6 86.6 552.5 86 C560 86.6 562.6 98 564.8 110.6" stroke="#4c4c4c" stroke-width="0.6" fill="none" stroke-linejoin="round" stroke-linecap="round" />
<path d="M541.8 109 C544 99 546.6 89.6 552.5 89 C558 89.6 560 99 561.6 110.4" stroke="#4c4c4c" stroke-width="0.6" fill="none" stroke-linejoin="round" stroke-linecap="round" />
<rect x="544" y="122.1" width="6.8" height="4.2" fill="#3a3a3a"/><path d="M546 123 v2.4 M548.4 123 v2.4" stroke="#ddd" stroke-width="0.5"/>
<path d="M524.4 113.1 Q523 118 525 121.6 L527 137.7 Q525 142.6 522.6 141.4 Q522 138.6 526 137" stroke="#4c4c4c" stroke-width="0.55" fill="none" stroke-linejoin="round" stroke-linecap="round" />
<path d="M523 119 l3.4 0.6 l0.4 3.4 l-3.4 -0.6 Z" stroke="#4c4c4c" stroke-width="0.5" fill="none" stroke-linejoin="round" stroke-linecap="round" />
<path d="M582.6 116.5 Q585.6 120 584.4 125 L582.4 130" stroke="#4c4c4c" stroke-width="0.55" fill="none" stroke-linejoin="round" stroke-linecap="round" />
<path d="M564.3 147 L578 143.7" stroke="#4c4c4c" stroke-width="0.5" fill="none" stroke-linejoin="round" stroke-linecap="round" />
<path d="M518.2 175.4 Q530 170.6 542.8 171 Q566 176 583.9 189" stroke="#333" stroke-width="0.9" fill="none" stroke-linejoin="round" stroke-linecap="round" />
<path d="M518.2 175.4 Q528 178 540 182.8 Q553 189 564.7 191 Q575 191.6 583.9 189" stroke="#4c4c4c" stroke-width="0.6" fill="none" stroke-linejoin="round" stroke-linecap="round" />
<path d="M518.2 175.4 L526.4 210 Q530 216 540 218.3 L564.7 223 Q572 222.6 575.6 218.3 L583.9 189" stroke="#4c4c4c" stroke-width="0.6" fill="none" stroke-linejoin="round" stroke-linecap="round" />
<path d="M538.7 180 L562 185.5 L561 188 L538 182.6 Z" stroke="#4c4c4c" stroke-width="0.5" fill="none" stroke-linejoin="round" stroke-linecap="round" />
<path d="M544 176 l1.4 2 l1.4 -2 M567 183 l1.4 2 l1.4 -2" stroke="#4c4c4c" stroke-width="0.45" fill="none" stroke-linejoin="round" stroke-linecap="round" />
<path d="M532 190.6 Q532.6 206 538 212.4 Q544.4 217.6 550 212 Q553.6 206 553.8 197.4" stroke="#4c4c4c" stroke-width="0.6" fill="none" stroke-linejoin="round" stroke-linecap="round" />
<path d="M535.2 191.6 Q535.6 204 540 209.4 Q544.6 213 548 209 Q550.6 204 550.8 196.6" stroke="#4c4c4c" stroke-width="0.6" fill="none" stroke-linejoin="round" stroke-linecap="round" />
<path d="M531.6 189 l4 1 M553.4 195.6 l-3 -0.6" stroke="#4c4c4c" stroke-width="0.5" fill="none" stroke-linejoin="round" stroke-linecap="round" />
<rect x="538.7" y="202" width="6.8" height="4" fill="#3a3a3a" transform="rotate(8 542 204)"/>
<path d="M564.7 223 L565 214 L577 210" stroke="#4c4c4c" stroke-width="0.5" fill="none" stroke-linejoin="round" stroke-linecap="round" />
<path d="M583.9 189 l3.4 1.6" stroke="#4c4c4c" stroke-width="0.7" fill="none" stroke-linejoin="round" stroke-linecap="round" />
<path d="M518.5 262.6 Q535 265.4 551 265.4 Q568 265.4 585.7 262.6" stroke="#333" stroke-width="0.9" fill="none" stroke-linejoin="round" stroke-linecap="round" />
<path d="M520.6 263.4 L524 294.4 L521 300.6 L578 300.8 L577 297 L583.6 263.4" stroke="#4c4c4c" stroke-width="0.6" fill="none" stroke-linejoin="round" stroke-linecap="round" />
<path d="M538.3 265.4 L537.6 300.8 M542.5 265.6 L542 300.8 M560.2 265.6 L560.6 300.8 M564.5 265.4 L565.2 300.8" stroke="#4c4c4c" stroke-width="0.6" fill="none" stroke-linejoin="round" stroke-linecap="round" />
<path d="M538.4 265 Q541.6 241.4 551.7 240.4 Q561.6 241.4 564.6 265" stroke="#4c4c4c" stroke-width="0.6" fill="none" stroke-linejoin="round" stroke-linecap="round" />
<path d="M542 265.4 Q544.6 244.6 551.7 243.6 Q558.6 244.6 561 265.4" stroke="#4c4c4c" stroke-width="0.6" fill="none" stroke-linejoin="round" stroke-linecap="round" />
<path d="M538 269.6 h4.6 M560.2 269.6 h4.6 M538 272 h4.6 M560.2 272 h4.6" stroke="#4c4c4c" stroke-width="0.4" fill="none" stroke-linejoin="round" stroke-linecap="round" />
<rect x="547.5" y="273.9" width="7.8" height="3.8" fill="#3a3a3a"/><path d="M549.8 274.8 v2 M552.8 274.8 v2" stroke="#ddd" stroke-width="0.5"/>
<path d="M521.3 263.6 L521.3 268 L519 273.2 L518.5 278.6 L524.2 279 L524 273.2 L521.3 268" stroke="#4c4c4c" stroke-width="0.55" fill="none" stroke-linejoin="round" stroke-linecap="round" />
<path d="M519.4 279 L522 294.6 M523.6 279 L525 294" stroke="#4c4c4c" stroke-width="0.5" fill="none" stroke-linejoin="round" stroke-linecap="round" />
<path d="M519.2 295 L531 295 L533.3 300.8" stroke="#4c4c4c" stroke-width="0.5" fill="none" stroke-linejoin="round" stroke-linecap="round" />
<path d="M581.5 263.4 L581.5 267.4 L580.4 273.2 L580.6 277.5 L584.6 277.5 L584.3 273.2 L581.5 267.4" stroke="#4c4c4c" stroke-width="0.55" fill="none" stroke-linejoin="round" stroke-linecap="round" />
<path d="M581 277.5 L578.4 292 M584 277.5 L580 293" stroke="#4c4c4c" stroke-width="0.5" fill="none" stroke-linejoin="round" stroke-linecap="round" />
<path d="M568 295 L578 295" stroke="#4c4c4c" stroke-width="0.5" fill="none" stroke-linejoin="round" stroke-linecap="round" />
<path d="M290.8 409.4 L374.8 418 L373.4 491.5 L290 478.8 Z" stroke="#b8b8b8" stroke-width="0.55" fill="none" stroke-linejoin="round" stroke-linecap="round" />
<path d="M374.8 418 L387.6 413.7 L386 485.9 L373.4 491.5" stroke="#b8b8b8" stroke-width="0.55" fill="none" stroke-linejoin="round" stroke-linecap="round" />
<path d="M290.8 417.4 L374.6 427 L387.4 422" stroke="#b8b8b8" stroke-width="0.5" fill="none" stroke-linejoin="round" stroke-linecap="round" />
<path d="M302.6 405.2 L387.6 413.7 M290.8 409.4 L302.6 405.2" stroke="#b8b8b8" stroke-width="0.5" fill="none" stroke-linejoin="round" stroke-linecap="round" />
<path d="M292.6 411 L292 477.6 M372.4 420 L371.4 489.6" stroke="#b8b8b8" stroke-width="0.35" fill="none" stroke-linejoin="round" stroke-linecap="round" />
<path d="M380 417 Q378 450 382 488" stroke="#b8b8b8" stroke-width="0.35" fill="none" stroke-linejoin="round" stroke-linecap="round" />
<path d="M312 416.6 L327.6 364 Q330 357.2 335.4 357 Q340 357.2 341.4 364 L351.6 420.6" stroke="#b8b8b8" stroke-width="0.55" fill="none" stroke-linejoin="round" stroke-linecap="round" />
<path d="M317 417 L331.4 366.6 Q333 362 335.2 362 Q337.2 362 338 366.6 L346.8 420" stroke="#b8b8b8" stroke-width="0.55" fill="none" stroke-linejoin="round" stroke-linecap="round" />
<path d="M315.4 405.8 Q323 380 329.4 368 M340 364 Q352 384 363.6 411" stroke="#b8b8b8" stroke-width="0.5" fill="none" stroke-linejoin="round" stroke-linecap="round" />
<path d="M320 406.4 Q326 386 331.4 375 M343.6 378 Q352 392 359 410.6" stroke="#b8b8b8" stroke-width="0.5" fill="none" stroke-linejoin="round" stroke-linecap="round" />
<path d="M312 412 l5 0.6 l-0.4 7.6 l-5 -0.6 Z M346.8 415.6 l5 0.6 l-0.4 7.6 l-5 -0.6 Z" stroke="#b8b8b8" stroke-width="0.5" fill="none" stroke-linejoin="round" stroke-linecap="round" />
<path d="M314.4 417 a0.9 0.9 0 1 0 0.01 0 M349.2 420.6 a0.9 0.9 0 1 0 0.01 0" stroke="#8a8a8a" stroke-width="0.5" fill="none" stroke-linejoin="round" stroke-linecap="round" />
<path d="M368.6 480 l1.6 4 l1 -3" stroke="#8a8a8a" stroke-width="0.5" fill="none" stroke-linejoin="round" stroke-linecap="round" />
<path d="M406.3 440.6 Q402.4 452 403.5 463.3 Q408 486 431.8 491.6 Q462 494 477.1 468.9 Q479.4 458 477 449" stroke="#b8b8b8" stroke-width="0.55" fill="none" stroke-linejoin="round" stroke-linecap="round" />
<path d="M406.3 440.6 Q436 450 470 455.6 L477 449" stroke="#b8b8b8" stroke-width="0.55" fill="none" stroke-linejoin="round" stroke-linecap="round" />
<path d="M407 443.4 Q436 452.6 469 458.2" stroke="#b8b8b8" stroke-width="0.45" fill="none" stroke-linejoin="round" stroke-linecap="round" />
<path d="M408 438.4 C410 418 422 402.6 437.5 402.4 C455 402.6 468 420 475.4 444.6" stroke="#b8b8b8" stroke-width="0.55" fill="none" stroke-linejoin="round" stroke-linecap="round" />
<path d="M411.4 439.4 C413 421 424 405.8 437.5 405.6 C453 405.8 465 422 472.4 446" stroke="#b8b8b8" stroke-width="0.55" fill="none" stroke-linejoin="round" stroke-linecap="round" />
<path d="M406.3 437 l5.6 1.6 l-0.8 4 l-5.4 -1.6 Z M471.6 443.6 l5 1.6 l-1 4.4 l-4.6 -1.6 Z" stroke="#b8b8b8" stroke-width="0.5" fill="none" stroke-linejoin="round" stroke-linecap="round" />
<path d="M471 457 a1.6 1.6 0 1 0 0.01 0" stroke="#8a8a8a" stroke-width="0.5" fill="none" stroke-linejoin="round" stroke-linecap="round" />
<rect x="425.6" y="481.7" width="11.8" height="6.8" fill="none" stroke="#8a8a8a" stroke-width="0.6"/><path d="M428 483.4 q3.4 3.4 7 0 M428 487 q3.4 -3.4 7 0" stroke="#8a8a8a" stroke-width="0.5" fill="none"/>
<path d="M498.3 418 Q507 424 516.7 425 Q536 428.6 553.5 427.9 Q566 427 576.2 423.6" stroke="#b8b8b8" stroke-width="0.55" fill="none" stroke-linejoin="round" stroke-linecap="round" />
<path d="M498.3 418 L488.4 474.6 Q489 479 492.7 480.2 L570.5 493 Q580 492 584.7 483 L579 432.1 Q578 426 576.2 423.6" stroke="#b8b8b8" stroke-width="0.55" fill="none" stroke-linejoin="round" stroke-linecap="round" />
<path d="M498.3 418 Q504 415.6 512.5 416.5 Q528 413 542.2 413.7 Q562 415 576.2 420.8 L579.6 424.6" stroke="#b8b8b8" stroke-width="0.5" fill="none" stroke-linejoin="round" stroke-linecap="round" />
<path d="M512.5 416.5 Q516 421 524 423 M576.2 423.6 Q574 446 577.6 463.3 L581.9 480.2" stroke="#b8b8b8" stroke-width="0.45" fill="none" stroke-linejoin="round" stroke-linecap="round" />
<path d="M579 432 Q573 438 575 446" stroke="#b8b8b8" stroke-width="0.45" fill="none" stroke-linejoin="round" stroke-linecap="round" />
<path d="M502.4 416.4 C508 394 518 367 536.4 365.4 C553 366 563 392 572.6 420" stroke="#b8b8b8" stroke-width="0.55" fill="none" stroke-linejoin="round" stroke-linecap="round" />
<path d="M506.4 416 C512 396 521 371 536.4 369.4 C550 370 560 394 569 419.6" stroke="#b8b8b8" stroke-width="0.55" fill="none" stroke-linejoin="round" stroke-linecap="round" />
<path d="M519.6 412 C522 394 528 373 538 371.4 C548 373 557 396 564 417" stroke="#b8b8b8" stroke-width="0.5" fill="none" stroke-linejoin="round" stroke-linecap="round" />
<path d="M523 412.6 C525 397 530 377 538 375.6 C546 377 554 398 560.4 416" stroke="#b8b8b8" stroke-width="0.5" fill="none" stroke-linejoin="round" stroke-linecap="round" />
<path d="M518.6 404 l4.6 0.4 l-0.6 8.6 l-4.4 -0.4 Z" stroke="#b8b8b8" stroke-width="0.5" fill="none" stroke-linejoin="round" stroke-linecap="round" />
<rect x="519" y="476" width="11.8" height="6.6" fill="none" stroke="#8a8a8a" stroke-width="0.6" transform="rotate(9 525 479)"/><path d="M521.4 478 q3.4 3.4 7 1 M521.2 481 q3.4 -3 7 1" stroke="#8a8a8a" stroke-width="0.5" fill="none"/>
<path d="M577.6 463.3 l2.6 -0.6 l4 17 l-2.4 0.6" stroke="#a0a0a0" stroke-width="0.45" fill="none" stroke-linejoin="round" stroke-linecap="round" />
<path d="M622.6 399 Q624 383.4 634.2 382.3 Q646 383 649.4 400.4" stroke="#b8b8b8" stroke-width="0.55" fill="none" stroke-linejoin="round" stroke-linecap="round" />
<path d="M625.8 399 Q627 386.6 634.4 385.6 Q643 386.4 646 400" stroke="#b8b8b8" stroke-width="0.55" fill="none" stroke-linejoin="round" stroke-linecap="round" />
<path d="M601 473.1 L603.5 426.5 Q604.6 406 617 402 Q628 399.6 639.1 400.7 Q653 403 655 415.4 L657.5 443.7 L660 480.5 Q659 487 651.4 487.9 L614.6 483 Q602 481 601 473.1 Z" stroke="#b8b8b8" stroke-width="0.6" fill="none" stroke-linejoin="round" stroke-linecap="round" />
<path d="M605.6 440 L606 426.5 Q607 409 618 405 Q628 402.6 638.6 403.6 Q650.6 406 652.4 417 L653.6 440" stroke="#b8b8b8" stroke-width="0.4" fill="none" stroke-linejoin="round" stroke-linecap="round" />
<path d="M655 415.4 Q660 420 661.2 426.5 L663.7 478 Q663 482 660 480.5" stroke="#b8b8b8" stroke-width="0.55" fill="none" stroke-linejoin="round" stroke-linecap="round" />
<path d="M602.3 446.1 Q604 442.6 614.6 442.4 L646.5 444.9 Q650.4 446 650.2 451 L650.4 487" stroke="#b8b8b8" stroke-width="0.55" fill="none" stroke-linejoin="round" stroke-linecap="round" />
<path d="M603.4 449 Q606 445.6 614.6 445.4 L645 447.6 Q647.6 448.6 647.6 452 L647.8 486" stroke="#b8b8b8" stroke-width="0.4" fill="none" stroke-linejoin="round" stroke-linecap="round" />
<rect x="618.2" y="471.9" width="9.8" height="6" fill="none" stroke="#808080" stroke-width="0.7" transform="rotate(5 623 475)"/><path d="M621 473.6 v3 M624.6 474 v3" stroke="#808080" stroke-width="0.5"/>
<path d="M658.6 434 L676.6 464 L679.4 471 L674 473.6 L670 467 L660 452" stroke="#b8b8b8" stroke-width="0.55" fill="none" stroke-linejoin="round" stroke-linecap="round" />
<path d="M665 449.6 l5.6 -3 l2.6 4.6 l-5.6 3 Z" stroke="#b8b8b8" stroke-width="0.5" fill="none" stroke-linejoin="round" stroke-linecap="round" />
<path d="M674 473.6 Q672 480 664 480" stroke="#b8b8b8" stroke-width="0.5" fill="none" stroke-linejoin="round" stroke-linecap="round" />
<path d="M601.6 443 q-1.4 3 0 6 M601 462 q-1.2 3 0 6" stroke="#b8b8b8" stroke-width="0.45" fill="none" stroke-linejoin="round" stroke-linecap="round" />
<path d="M732 320.5 L768.2 321.6 L768.2 377.7 L732.5 376 Z" stroke="#6a6a6a" stroke-width="0.6" fill="none" stroke-linejoin="round" stroke-linecap="round" />
<path d="M768.2 321.6 L776.5 321.6 L776.1 379.3 L768.2 377.7 M772 321.6 L772 369.4 L768.2 377.7 M772 369.4 L776.1 379.3" stroke="#6a6a6a" stroke-width="0.5" fill="none" stroke-linejoin="round" stroke-linecap="round" />
<path d="M736.8 330 L751.6 293 Q753.6 290.4 755.6 293 L767 320.6" stroke="#6a6a6a" stroke-width="0.6" fill="none" stroke-linejoin="round" stroke-linecap="round" />
<path d="M739.2 330 L753 296 M756.4 297.6 L765 321" stroke="#6a6a6a" stroke-width="0.6" fill="none" stroke-linejoin="round" stroke-linecap="round" />
<path d="M752.2 294 L752.6 332 M755.2 294 L754.8 332" stroke="#6a6a6a" stroke-width="0.6" fill="none" stroke-linejoin="round" stroke-linecap="round" />
<path d="M736.6 326 v4.4 h2.8 v-4.4 M752.4 328 v4.4 h2.8 v-4.4" stroke="#6a6a6a" stroke-width="0.5" fill="none" stroke-linejoin="round" stroke-linecap="round" />
<path d="M734 322 L734 375" stroke="#aaa" stroke-width="0.3" fill="none" stroke-linejoin="round" stroke-linecap="round" />
<path d="M696.8 405 Q697.6 398.6 702.8 398.3 Q708.6 398.6 709.7 405" stroke="#262626" stroke-width="0.85" fill="none" stroke-linejoin="round" stroke-linecap="round" />
<path d="M692.9 409.8 Q693.6 406 696 405.5 L712.7 406.8 Q717 408.6 717.7 413.8 L718.7 437.6 Q718.4 441.6 715.7 442.5 L694.9 439.6 Q691.6 439 691.4 436 L690.9 423.7 Z" stroke="#262626" stroke-width="0.85" fill="none" stroke-linejoin="round" stroke-linecap="round" />
<path d="M700.2 405.8 L687.2 441 L686.6 446 L689.4 446.8 L690.4 441.8 L703 406" stroke="#262626" stroke-width="0.8" fill="none" stroke-linejoin="round" stroke-linecap="round" />
<path d="M704.4 406.3 L704.8 440 L705.2 447.2 L708 447 L707.6 440 L707.4 406.4" stroke="#262626" stroke-width="0.8" fill="none" stroke-linejoin="round" stroke-linecap="round" />
<path d="M705.6 447.4 Q708 451.6 711.7 449.6 Q714.6 446 716.7 439.6" stroke="#262626" stroke-width="0.8" fill="none" stroke-linejoin="round" stroke-linecap="round" />
<path d="M708 445.4 Q709.6 447.6 711.4 446.6 Q713.4 444 714.4 439.6" stroke="#262626" stroke-width="0.7" fill="none" stroke-linejoin="round" stroke-linecap="round" />
<path d="M713 407 Q716.6 410 716.8 416 L717.4 428" stroke="#262626" stroke-width="0.6" fill="none" stroke-linejoin="round" stroke-linecap="round" />
<path d="M738.5 402.9 H770.1 Q775.1 402.9 775.1 407.9 V420.7 Q775.1 425.7 770.1 425.7 H738.5 Q733.5 425.7 733.5 420.7 V407.9 Q733.5 402.9 738.5 402.9 Z" stroke="#262626" stroke-width="0.85" fill="none" stroke-linejoin="round" stroke-linecap="round" />
<path d="M735.6 405.6 Q754 403.6 773 405.6" stroke="#262626" stroke-width="0.6" fill="none" stroke-linejoin="round" stroke-linecap="round" />
<rect x="749.4" y="406.8" width="10" height="3" fill="#fff" stroke="#262626" stroke-width="0.7"/><path d="M751 408.3 h6.8" stroke="#666" stroke-width="0.6"/>
<path d="M733.5 410 q-1.6 2.4 0 5 M775.1 412.4 q1.6 2.4 0 5" stroke="#262626" stroke-width="0.7" fill="none" stroke-linejoin="round" stroke-linecap="round" />
<path d="M701.8 458.4 Q726 460.4 750.4 459.4" stroke="#262626" stroke-width="1" fill="none" stroke-linejoin="round" stroke-linecap="round" />
<path d="M703 459 L703.8 483.2 L702.4 486.1 L745.4 486.1 L745 483.6 L748.4 459.6" stroke="#262626" stroke-width="0.85" fill="none" stroke-linejoin="round" stroke-linecap="round" />
<path d="M717.7 459.6 L717.4 486 M721.6 459.8 L721.4 486 M731.5 459.8 L731.8 486 M735.5 459.6 L736 486" stroke="#262626" stroke-width="0.8" fill="none" stroke-linejoin="round" stroke-linecap="round" />
<path d="M717.8 459.4 Q719.6 443.4 726.6 442.5 Q733.6 443.4 735.5 459.4" stroke="#262626" stroke-width="0.8" fill="none" stroke-linejoin="round" stroke-linecap="round" />
<path d="M721.4 459.6 Q722.6 446.4 726.6 445.6 Q730.6 446.4 731.8 459.6" stroke="#262626" stroke-width="0.8" fill="none" stroke-linejoin="round" stroke-linecap="round" />
<rect x="722.6" y="466.3" width="7" height="3" fill="#fff" stroke="#262626" stroke-width="0.7"/>
<path d="M702.8 459 L702.8 462.6 L700.8 466.3 L700.8 471.3 L705.8 471.3 L705.8 466.3 L702.8 462.6" stroke="#262626" stroke-width="0.7" fill="none" stroke-linejoin="round" stroke-linecap="round" />
<path d="M701.6 471.3 L703 482.6 M705 471.3 L705.6 482" stroke="#262626" stroke-width="0.7" fill="none" stroke-linejoin="round" stroke-linecap="round" />
<path d="M701.8 483.2 L710 483.2 L711.7 486.1" stroke="#262626" stroke-width="0.7" fill="none" stroke-linejoin="round" stroke-linecap="round" />
<path d="M749.4 459.4 L749.4 462.6 L748 466.3 L748.4 471.3 L750.6 467 L749.4 462.6" stroke="#262626" stroke-width="0.7" fill="none" stroke-linejoin="round" stroke-linecap="round" />
<path d="M739.5 483.2 L745.4 483.2" stroke="#262626" stroke-width="0.7" fill="none" stroke-linejoin="round" stroke-linecap="round" />
<path d="M754.9 453.4 H781.1 V485.1 H754.9 Z" stroke="#262626" stroke-width="0.85" fill="none" stroke-linejoin="round" stroke-linecap="round" />
<path d="M761.4 459 Q763 438 767.2 436.6 Q771.6 438 774 459" stroke="#262626" stroke-width="0.8" fill="none" stroke-linejoin="round" stroke-linecap="round" />
<path d="M763.4 459 Q764.6 441 767.2 439.8 Q770 441 772 459" stroke="#262626" stroke-width="0.8" fill="none" stroke-linejoin="round" stroke-linecap="round" />
<path d="M761.2 455.4 v3.8 h2.4 v-3.8 M771.8 455.4 v3.8 h2.4 v-3.8" stroke="#262626" stroke-width="0.6" fill="none" stroke-linejoin="round" stroke-linecap="round" />
</svg>
<svg id="icons" width="1000" height="530" viewBox="0 0 1000 530">
<circle cx="5.5" cy="7.2" r="2.3" fill="#f4524d"/><circle cx="12.7" cy="7.2" r="2.3" fill="#f6be2f"/><circle cx="20" cy="7.2" r="2.3" fill="#2cc63e"/>
<path d="M27.8 7.3 L31.3 4 L34.8 7.3 L33.8 7.3 L33.8 10.2 L32.2 10.2 L32.2 8 L30.4 8 L30.4 10.2 L28.8 10.2 L28.8 7.3 Z" fill="#e6e6e6"/>
<rect x="42.3" y="4.6" width="6" height="4.4" fill="#dcdcdc"/><rect x="44.3" y="5.3" width="0.6" height="3" fill="#4c4c4c"/><rect x="45.4" y="6.6" width="2.4" height="0.5" fill="#4c4c4c"/>
<path d="M51.6 6.4 l1.3 1.2 l1.3 -1.2" stroke="#bdbdbd" stroke-width="0.6" fill="none"/>
<circle cx="887" cy="6.3" r="1.9" fill="none" stroke="#cfcfcf" stroke-width="0.7"/><rect x="886.1" y="8.4" width="1.8" height="1.6" fill="#cfcfcf"/>
<path d="M918.8 6.6 l1.4 1.3 l1.4 -1.3" stroke="#c8c8c8" stroke-width="0.6" fill="none"/>
<circle cx="932.8" cy="6.5" r="1.3" fill="none" stroke="#bdbdbd" stroke-width="0.5"/><path d="M933.7 7.5 l1.2 1.2" stroke="#bdbdbd" stroke-width="0.5"/><path d="M935.6 6.4 l0.8 0.7 l0.8 -0.7" stroke="#a8a8a8" stroke-width="0.4" fill="none"/>
<rect x="41" y="16" width="7.2" height="7.2" fill="#ffffff"/><path d="M41.3 22.9 L47.9 16.3" stroke="#e8322c" stroke-width="1.3"/>
<path d="M50.2 19 l1.2 1.2 l1.2 -1.2" stroke="#b8b8b8" stroke-width="0.6" fill="none"/>
<rect x="57" y="16" width="7.2" height="7.2" fill="#2a2a2a" stroke="#e6e6e6" stroke-width="0.8"/><rect x="59.6" y="18.6" width="2" height="2" fill="#e6e6e6"/>
<path d="M66.4 19 l1.2 1.2 l1.2 -1.2" stroke="#b8b8b8" stroke-width="0.6" fill="none"/>
<path d="M92 18.6 l1 -1.1 l1 1.1 M92 20.8 l1 1.1 l1 -1.1" stroke="#c4c4c4" stroke-width="0.6" fill="none"/>
<path d="M117 19 l1.2 1.2 l1.2 -1.2" stroke="#b8b8b8" stroke-width="0.6" fill="none"/>
<path d="M159.8 19 l1.2 1.2 l1.2 -1.2" stroke="#b8b8b8" stroke-width="0.6" fill="none"/>
<path d="M200.3 19 l1.2 1.2 l1.2 -1.2" stroke="#b8b8b8" stroke-width="0.6" fill="none"/>
<path d="M248 18.2 l1.2 1.4 l-1.2 1.4" stroke="#c0c0c0" stroke-width="0.6" fill="none"/>
<path d="M275.8 19 l1.2 1.2 l1.2 -1.2" stroke="#b8b8b8" stroke-width="0.6" fill="none"/>
<path d="M356 17.6 h2.2 M357 17.6 v4 M358.4 19.2 l1.4 2.6 l0.5 -1 l1 0 Z" stroke="#cfcfcf" stroke-width="0.6" fill="#cfcfcf"/>
<path d="M363.8 19 l1.2 1.2 l1.2 -1.2" stroke="#b8b8b8" stroke-width="0.6" fill="none"/>
<rect x="962.5" y="17.5" width="3.4" height="3.4" fill="none" stroke="#707070" stroke-width="0.5" stroke-dasharray="0.8 0.5"/>
<rect x="971.3" y="16.8" width="0.7" height="5" fill="#dadada"/><rect x="972.8" y="17.6" width="2.2" height="3.4" fill="#dadada"/><path d="M976.2 18.6 l1.3 1 l-1.3 1 Z" fill="#bdbdbd"/>
<path d="M983.5 19.3 l0.9 0.9 l0.9 -0.9" stroke="#8a8a8a" stroke-width="0.5" fill="none"/>
<rect x="989" y="17.8" width="4.6" height="0.8" fill="#a8a8a8"/><rect x="989" y="19.2" width="4.6" height="0.8" fill="#a8a8a8"/><rect x="989" y="20.6" width="4.6" height="0.8" fill="#a8a8a8"/>
<path d="M18.9 30 l1.6 1.6 M20.5 30 l-1.6 1.6" stroke="#e0e0e0" stroke-width="0.6"/>
<path d="M3.2 28 l-1 0.9 l1 0.9 M4.8 28 l-1 0.9 l1 0.9" stroke="#9a9a9a" stroke-width="0.5" fill="none"/>
<path d="M902 28 l-1 0.9 l1 0.9 M903.6 28 l-1 0.9 l1 0.9" stroke="#9a9a9a" stroke-width="0.5" fill="none"/>
<path d="M993.4 28 l1 0.9 l-1 0.9 M995 28 l1 0.9 l-1 0.9" stroke="#9a9a9a" stroke-width="0.5" fill="none"/>
<path d="M37 526.6 l1.1 1.1 l1.1 -1.1" stroke="#b0b0b0" stroke-width="0.5" fill="none"/>
<path d="M74 526.6 l1.1 1.1 l1.1 -1.1" stroke="#b0b0b0" stroke-width="0.5" fill="none"/>
<path d="M46 526 v2.4 M48.4 526 l-1.6 1.2 l1.6 1.2 Z M53.4 526 l-1.6 1.2 l1.6 1.2 Z" stroke="#6c6c6c" stroke-width="0.4" fill="#6c6c6c"/>
<path d="M82 526 l1.6 1.2 l-1.6 1.2 Z M87 526 l1.6 1.2 l-1.6 1.2 Z M89.6 526 v2.4" stroke="#6c6c6c" stroke-width="0.4" fill="#6c6c6c"/>
<path d="M170.4 525.8 l1.8 1.4 l-1.8 1.4 Z" fill="#e0e0e0"/><path d="M177.6 526 l-1.2 1.2 l1.2 1.2" stroke="#7a7a7a" stroke-width="0.5" fill="none"/>
<rect x="882.6" y="525.6" width="1.6" height="1.6" fill="#8a8a8a"/><rect x="888.4" y="520" width="1.8" height="1.6" fill="#8a8a8a"/><rect x="888.4" y="40.4" width="1.8" height="1.6" fill="#8a8a8a"/>
<path d="M993.8 34.5 h3.4 M993.8 35.5 h3.4 M993.8 36.5 h3.4" stroke="#8c8c8c" stroke-width="0.45"/>
<circle cx="911.3" cy="45.4" r="1.4" fill="#1c1c1c" stroke="#e8e8e8" stroke-width="0.5"/><rect x="909.6" y="43.8" width="1.8" height="1.8" fill="#f0f0f0"/>
<path d="M917.6 44.4 q1.8 -0.2 1.8 1.9" stroke="#c4c4c4" stroke-width="0.5" fill="none"/><path d="M918.6 46 l0.8 0.9 l0.8 -0.9" stroke="#c4c4c4" stroke-width="0.4" fill="none"/>
<rect x="914.6" y="54.6" width="6.2" height="6.2" fill="none" stroke="#6e6e6e" stroke-width="1.5"/>
<rect x="909.8" y="50.2" width="7.2" height="6.8" fill="#ffffff" stroke="#3a3a3a" stroke-width="0.3"/><path d="M910.1 56.7 L916.7 50.5" stroke="#e8322c" stroke-width="1.2"/>
<path d="M912.4 76.4 l1.8 2.6 l0.3 -1.2" stroke="#b8b8b8" stroke-width="0.6" fill="none"/>
<rect x="918.7" y="75.4" width="4.6" height="4.6" fill="#242424" stroke="#9a9a9a" stroke-width="0.6"/><rect x="920.2" y="76.9" width="1.6" height="1.6" fill="#4c4c4c"/>
<rect x="909.8" y="83.8" width="4.2" height="4.5" fill="#ffffff"/><path d="M910 88.1 L913.8 84" stroke="#e8322c" stroke-width="0.9"/>
<rect x="915.1" y="83.8" width="4.2" height="4.5" fill="#000000"/><rect x="919.9" y="83.8" width="4.2" height="4.5" fill="#ffffff"/>
<path d="M993.8 170.2 h3.4 M993.8 171.2 h3.4 M993.8 172.2 h3.4" stroke="#8c8c8c" stroke-width="0.45"/>
<rect x="911.6" y="190.89999999999998" width="5.6" height="0.6" fill="#e2e2e2"/><rect x="912.1999999999999" y="188.6" width="3.2" height="1.7" fill="#e2e2e2"/><rect x="911.6" y="192.1" width="4.8" height="1.7" fill="#e2e2e2"/>
<rect x="924.7" y="190.89999999999998" width="5.6" height="0.6" fill="#e2e2e2"/><rect x="925.9" y="188.6" width="3.2" height="1.7" fill="#e2e2e2"/><rect x="925.1" y="192.1" width="4.8" height="1.7" fill="#e2e2e2"/>
<rect x="937.9000000000001" y="190.89999999999998" width="5.6" height="0.6" fill="#e2e2e2"/><rect x="939.7" y="188.6" width="3.2" height="1.7" fill="#e2e2e2"/><rect x="938.7" y="192.1" width="4.8" height="1.7" fill="#e2e2e2"/>
<rect x="964.0" y="188.39999999999998" width="0.6" height="5.6" fill="#e2e2e2"/><rect x="967.2" y="189.0" width="1.7" height="3.4" fill="#e2e2e2"/><rect x="969.3" y="189.79999999999998" width="1.7" height="3.6" fill="#e2e2e2" opacity="0.7"/>
<rect x="979.7" y="188.39999999999998" width="0.6" height="5.6" fill="#e2e2e2"/><rect x="977.4" y="189.6" width="1.7" height="3.8" fill="#e2e2e2"/><rect x="980.9" y="189.79999999999998" width="1.7" height="2.8" fill="#e2e2e2" opacity="1"/>
<rect x="995.3000000000001" y="188.39999999999998" width="0.6" height="5.6" fill="#e2e2e2"/><rect x="991.0" y="189.6" width="1.7" height="3.8" fill="#e2e2e2"/><rect x="993.1999999999999" y="189.79999999999998" width="1.7" height="3.6" fill="#e2e2e2" opacity="1"/>
<rect x="911.6" y="210.29999999999998" width="5.6" height="0.6" fill="#e2e2e2"/><rect x="911.6" y="214.1" width="5.6" height="0.6" fill="#e2e2e2"/><rect x="912.9" y="211.1" width="3" height="1.5" fill="#e2e2e2"/><rect x="912.1999999999999" y="213.5" width="4.4" height="1.6" fill="#e2e2e2"/>
<rect x="924.7" y="210.29999999999998" width="5.6" height="0.6" fill="#e2e2e2"/><rect x="924.7" y="215.29999999999998" width="5.6" height="0.6" fill="#e2e2e2"/><rect x="926.0" y="211.5" width="3" height="1.5" fill="#e2e2e2"/><rect x="925.3" y="213.7" width="4.4" height="1.6" fill="#e2e2e2"/>
<rect x="937.9000000000001" y="211.49999999999997" width="5.6" height="0.6" fill="#e2e2e2"/><rect x="937.9000000000001" y="215.29999999999998" width="5.6" height="0.6" fill="#e2e2e2"/><rect x="939.2" y="211.1" width="3" height="1.5" fill="#e2e2e2"/><rect x="938.5" y="213.5" width="4.4" height="1.6" fill="#e2e2e2"/>
<rect x="963.7" y="210.29999999999998" width="0.6" height="5.6" fill="#e2e2e2"/><rect x="968.7" y="210.29999999999998" width="0.6" height="5.6" fill="#e2e2e2"/><rect x="964.7" y="211.1" width="1.5" height="4" fill="#e2e2e2"/><rect x="966.9" y="211.7" width="1.5" height="2.8" fill="#e2e2e2"/>
<rect x="977.2" y="210.29999999999998" width="0.6" height="5.6" fill="#e2e2e2"/><rect x="982.2" y="210.29999999999998" width="0.6" height="5.6" fill="#e2e2e2"/><rect x="978.2" y="211.1" width="1.5" height="4" fill="#e2e2e2"/><rect x="980.4" y="211.7" width="1.5" height="2.8" fill="#e2e2e2"/>
<rect x="990.6" y="210.29999999999998" width="0.6" height="5.6" fill="#e2e2e2"/><rect x="995.6" y="210.29999999999998" width="0.6" height="5.6" fill="#e2e2e2"/><rect x="991.6" y="211.1" width="1.5" height="4" fill="#e2e2e2"/><rect x="993.8" y="211.7" width="1.5" height="2.8" fill="#e2e2e2"/>
<rect x="911.8" y="236.6" width="5.4" height="0.7" fill="#e2e2e2"/><rect x="912.8" y="234.2" width="3.6" height="1.7" fill="#e2e2e2"/><rect x="911.6" y="232.4" width="1.6" height="0.6" fill="#e2e2e2"/><path d="M914 232 h2.4 M915.2 231.4 v1.6" stroke="#e2e2e2" stroke-width="0.4"/>
<rect x="923.2" y="232.6" width="0.7" height="5" fill="#e2e2e2"/><rect x="924.6" y="233.4" width="1.8" height="4.2" fill="#e2e2e2"/><rect x="927" y="234.4" width="1.2" height="2.4" fill="#e2e2e2" opacity="0.8"/><path d="M924 231.8 h2.4" stroke="#e2e2e2" stroke-width="0.4"/>
<rect x="985" y="232.8" width="4.4" height="4.2" fill="none" stroke="#c8c8c8" stroke-width="0.5" stroke-dasharray="1 0.6"/><path d="M986 233.6 l2.6 2.6 M988.6 233.6 l-2.6 2.6" stroke="#c8c8c8" stroke-width="0.4"/><path d="M990.8 234.6 l0.8 0.8 l0.8 -0.8" stroke="#a0a0a0" stroke-width="0.4" fill="none"/>
<path d="M993.8 246.2 h3.4 M993.8 247.2 h3.4 M993.8 248.2 h3.4" stroke="#8c8c8c" stroke-width="0.45"/>
<rect x="911.8" y="264.59999999999997" width="3.6" height="3.6" fill="#e2e2e2"/><rect x="913.4" y="266.2" width="3.6" height="3.6" fill="#e2e2e2" stroke="#535353" stroke-width="0.4"/>
<rect x="927.2" y="266.2" width="3.6" height="3.6" fill="none" stroke="#e2e2e2" stroke-width="0.5"/><rect x="925.6" y="264.59999999999997" width="3.6" height="3.6" fill="#e2e2e2"/>
<rect x="939.5" y="264.59999999999997" width="3.6" height="3.6" fill="none" stroke="#9a9a9a" stroke-width="0.5"/><rect x="941.1" y="266.2" width="3.6" height="3.6" fill="none" stroke="#9a9a9a" stroke-width="0.5"/><rect x="941.1" y="266.2" width="2" height="2" fill="#e2e2e2"/>
<rect x="953.5" y="264.59999999999997" width="3.6" height="3.6" fill="#e2e2e2"/><rect x="955.1" y="266.2" width="3.6" height="3.6" fill="#e2e2e2"/><rect x="955.3000000000001" y="266.4" width="1.7" height="1.7" fill="#2c2c2c"/>
<rect x="913.3" y="284.0" width="3.6" height="3.6" fill="none" stroke="#e2e2e2" stroke-width="0.6"/><rect x="914.9" y="285.6" width="3.6" height="3.6" fill="none" stroke="#e2e2e2" stroke-width="0.6"/>
<rect x="927.4" y="284.0" width="3.6" height="3.6" fill="#e2e2e2"/><rect x="929" y="285.6" width="3.6" height="3.6" fill="#cfcfcf" stroke="#535353" stroke-width="0.4"/>
<rect x="941.9" y="284.0" width="3.6" height="3.6" fill="#c4c4c4"/><rect x="943.5" y="285.6" width="3.6" height="3.6" fill="#e2e2e2" stroke="#535353" stroke-width="0.4"/>
<rect x="956.5" y="284.0" width="3.6" height="3.6" fill="none" stroke="#8a8a8a" stroke-width="0.5"/><rect x="958.5" y="286.0" width="1.8" height="1.8" fill="#e2e2e2"/>
<rect x="970.5" y="284.0" width="3.6" height="3.6" fill="none" stroke="#858585" stroke-width="0.5"/><rect x="972.1" y="285.6" width="3.6" height="3.6" fill="none" stroke="#858585" stroke-width="0.5"/>
<rect x="985.0" y="284.20000000000005" width="5" height="5" rx="1" fill="#e2e2e2"/><circle cx="987.0" cy="286.20000000000005" r="1.5" fill="#2a2a2a"/>
<path d="M897.6 41.6 L900 36.6 L902.4 41.6 M898.5 40 h3" stroke="#dcdcdc" stroke-width="0.8" fill="none"/>
<path d="M897.8 48.4 h3.4 a1.6 1.4 0 0 1 0 2.8 h-1 v1.6" stroke="#dcdcdc" stroke-width="0.9" fill="none"/><rect x="899" y="48.2" width="1.2" height="4.6" fill="#dcdcdc"/>
<ellipse cx="900" cy="60.4" rx="1.9" ry="3" fill="none" stroke="#dcdcdc" stroke-width="0.9" transform="rotate(14 900 60.4)"/>
<circle cx="898.6" cy="77.4" r="1.5" fill="none" stroke="#dcdcdc" stroke-width="0.6"/><circle cx="901.4" cy="74.6" r="1.3" fill="#dcdcdc"/><path d="M897.4 74 l1 1 M901.8 78 l0.9 0.9" stroke="#dcdcdc" stroke-width="0.5"/>
<path d="M899.4 88.2 h-2.4 v5.4 h5.4 v-2.4" stroke="#dcdcdc" stroke-width="0.7" fill="none"/><path d="M899.2 91.4 L902.8 87.8 M900.6 87.6 h2.4 v2.4" stroke="#dcdcdc" stroke-width="0.7" fill="none"/>
<rect x="896.4" y="99.8" width="7.2" height="3.2" rx="1.6" fill="none" stroke="#dcdcdc" stroke-width="0.7"/>
<path d="M897 118.8 h6" stroke="#dcdcdc" stroke-width="0.8"/><path d="M897.6 114 a1.4 1.4 0 1 0 2 0 M901.6 113.6 v2.6 M900.4 114.9 h2.4" stroke="#dcdcdc" stroke-width="0.5" fill="none"/><path d="M897 117.2 h6" stroke="#dcdcdc" stroke-width="0.4" stroke-dasharray="0.8 0.5"/>
<circle cx="900" cy="132.5" r="2.7" fill="#c8c8c8"/><circle cx="899.3" cy="131.7" r="1.3" fill="#e2e2e2"/>
<rect x="897" y="145.2" width="6.2" height="1.2" fill="#a8a8a8"/><rect x="897" y="147" width="6.2" height="1.4" fill="#bcbcbc"/><rect x="897" y="149" width="6.2" height="1.2" fill="#a8a8a8"/>
<rect x="896.4" y="159.4" width="7.2" height="7" fill="#f2f2f2"/><rect x="897.4" y="162.4" width="5.2" height="1.1" fill="#222"/>
<path d="M4.8 39.6 L4.8 45.0 L6.2 43.800000000000004 L7.2 45.800000000000004 L8 45.4 L7 43.5 L9 43.300000000000004 Z" fill="none" stroke="#d8d8d8" stroke-width="0.6" stroke-linejoin="round"/>
<path d="M4.8 48.5 L4.8 53.9 L6.2 52.7 L7.2 54.7 L8 54.3 L7 52.4 L9 52.2 Z" fill="#d8d8d8"/>
<path d="M4.2 63.400000000000006 L5.2 60.00000000000001 L8 57.400000000000006 L9.8 59.2 L7.2 62.2 Z" fill="#d8d8d8"/><circle cx="10.8" cy="63.00000000000001" r="0.35" fill="#9a9a9a"/>
<path d="M4.2 72.30000000000001 L5.2 68.9 L8 66.30000000000001 L9.8 68.10000000000001 L7.2 71.10000000000001 Z" fill="#d8d8d8"/><path d="M3.6 70.30000000000001 q0.6 2.4 3 2.6" stroke="#d8d8d8" stroke-width="0.5" fill="none"/><circle cx="10.8" cy="71.9" r="0.35" fill="#9a9a9a"/>
<rect x="4" y="75.4" width="5.6" height="5.6" fill="#6a6a6a" stroke="#9c9c9c" stroke-width="0.7"/><circle cx="10.8" cy="80.8" r="0.35" fill="#9a9a9a"/>
<path d="M4 90.1 L9.6 84.1" stroke="#d8d8d8" stroke-width="1.1"/><circle cx="10.8" cy="89.69999999999999" r="0.35" fill="#9a9a9a"/>
<path d="M4.2 93.4 h5.4 M6.9 93.4 v5.6 M5.8 99.0 h2.2" stroke="#d8d8d8" stroke-width="1" fill="none"/><circle cx="10.8" cy="98.6" r="0.35" fill="#9a9a9a"/>
<path d="M4.6 105.5 a2.6 2.6 0 1 1 2.6 2.6" stroke="#d8d8d8" stroke-width="0.9" fill="none"/><path d="M3.4 104.5 l1.3 1.6 l1.5 -1.3" stroke="#d8d8d8" stroke-width="0.6" fill="none"/><circle cx="10.8" cy="107.5" r="0.35" fill="#9a9a9a"/>
<path d="M4 114.80000000000001 L7.4 111.00000000000001 L10 113.20000000000002 L6.6 117.00000000000001 Z" fill="#d8d8d8"/><path d="M5.2 113.60000000000001 L7.8 115.80000000000001" stroke="#4f4f4f" stroke-width="0.5"/><circle cx="10.8" cy="116.4" r="0.35" fill="#9a9a9a"/>
<path d="M3.8 123.30000000000001 q2.8 -3.4 6 -1.4 q-0.8 3.4 -4.6 3.6 Z" fill="#8e8e8e"/><path d="M7.6 123.10000000000002 l2.2 2.4 l-1.2 0.2 l-0.4 1 Z" fill="#d8d8d8"/><circle cx="10.8" cy="125.30000000000001" r="0.35" fill="#9a9a9a"/>
<defs><linearGradient id="tg"><stop offset="0" stop-color="#e8e8e8"/><stop offset="1" stop-color="#5a5a5a"/></linearGradient></defs><rect x="4" y="128.79999999999998" width="5.8" height="5.6" fill="url(#tg)" stroke="#cfcfcf" stroke-width="0.5"/>
<path d="M4 143.7 L4.6 142.1 L7.6 139.1 L8.8 140.3 L5.8 143.3 Z" fill="#d8d8d8"/><path d="M7.4 138.1 L9.8 140.5" stroke="#d8d8d8" stroke-width="1.2"/><circle cx="9.4" cy="138.3" r="0.9" fill="#d8d8d8"/><circle cx="10.8" cy="143.1" r="0.35" fill="#9a9a9a"/>
<path d="M4.4 152.20000000000002 L7.2 148.8 L8.6 149.8 L6 152.6 Z" fill="#d8d8d8"/><circle cx="8.4" cy="147.8" r="1.1" fill="#d8d8d8"/><path d="M4.4 146.8 l0.8 0.8 M6.4 146.20000000000002 v1 M9.8 146.20000000000002 l-0.6 0.6" stroke="#d8d8d8" stroke-width="0.5"/><circle cx="10.8" cy="152.0" r="0.35" fill="#9a9a9a"/>
<path d="M4 161.10000000000002 L8.6 155.5 L9.8 156.70000000000002 L6 161.3 Z" fill="#bdbdbd"/><path d="M4.6 157.9 L7.4 155.3" stroke="#9c9c9c" stroke-width="0.8"/><circle cx="10.8" cy="160.9" r="0.35" fill="#9a9a9a"/>
<path d="M5 167.8 a2.2 2.2 0 1 1 2.2 2.2" stroke="#c0c0c0" stroke-width="1" fill="none"/><circle cx="6.8" cy="167.8" r="0.8" fill="#c0c0c0"/><circle cx="10.8" cy="169.8" r="0.35" fill="#9a9a9a"/>
<rect x="4.8" y="174.1" width="4.2" height="4.6" fill="none" stroke="#c4c4c4" stroke-width="0.6"/><path d="M4 173.29999999999998 h2 M4.8 172.7 v1.4" stroke="#c4c4c4" stroke-width="0.5"/><circle cx="10.8" cy="178.7" r="0.35" fill="#9a9a9a"/>
<circle cx="6" cy="184.2" r="2" fill="none" stroke="#d8d8d8" stroke-width="0.8"/><path d="M7.4 185.8 L9.8 188.2" stroke="#d8d8d8" stroke-width="1"/>
<circle cx="3.6" cy="195.6" r="1.2" fill="#1c1c1c" stroke="#e2e2e2" stroke-width="0.4"/><rect x="2.2" y="194.2" width="1.5" height="1.5" fill="#f0f0f0"/>
<path d="M9.6 194.4 q1.8 -0.2 1.8 1.9" stroke="#c4c4c4" stroke-width="0.5" fill="none"/><path d="M10.6 196 l0.8 0.9 l0.8 -0.9" stroke="#c4c4c4" stroke-width="0.4" fill="none"/>
<rect x="6.6" y="204.6" width="6" height="6" fill="none" stroke="#6e6e6e" stroke-width="1.4"/>
<rect x="2" y="200.4" width="7.4" height="7.4" fill="#ffffff" stroke="#3a3a3a" stroke-width="0.3"/><path d="M2.3 207.5 L9.1 200.7" stroke="#e8322c" stroke-width="1.2"/>
<rect x="2.2" y="213.4" width="3" height="3" fill="#111"/><rect x="5.8" y="213.4" width="3" height="3" fill="#bdbdbd"/><rect x="9.4" y="213.4" width="3" height="3" fill="#fff"/><path d="M9.5 216.3 L12.3 213.5" stroke="#e8322c" stroke-width="0.7"/>
<circle cx="6.8" cy="222.6" r="1.3" fill="#cfcfcf"/><circle cx="6.8" cy="222.6" r="2" fill="none" stroke="#8a8a8a" stroke-width="0.4"/>
<rect x="4" y="230.4" width="4.6" height="3.2" fill="none" stroke="#c4c4c4" stroke-width="0.6"/><rect x="5.4" y="229" width="4.6" height="3.2" fill="#4f4f4f" stroke="#c4c4c4" stroke-width="0.6"/>
<circle cx="4.8" cy="243.6" r="0.5" fill="#bdbdbd"/><circle cx="6.8" cy="243.6" r="0.5" fill="#bdbdbd"/><circle cx="8.8" cy="243.6" r="0.5" fill="#bdbdbd"/>
</svg>
</body></html>
